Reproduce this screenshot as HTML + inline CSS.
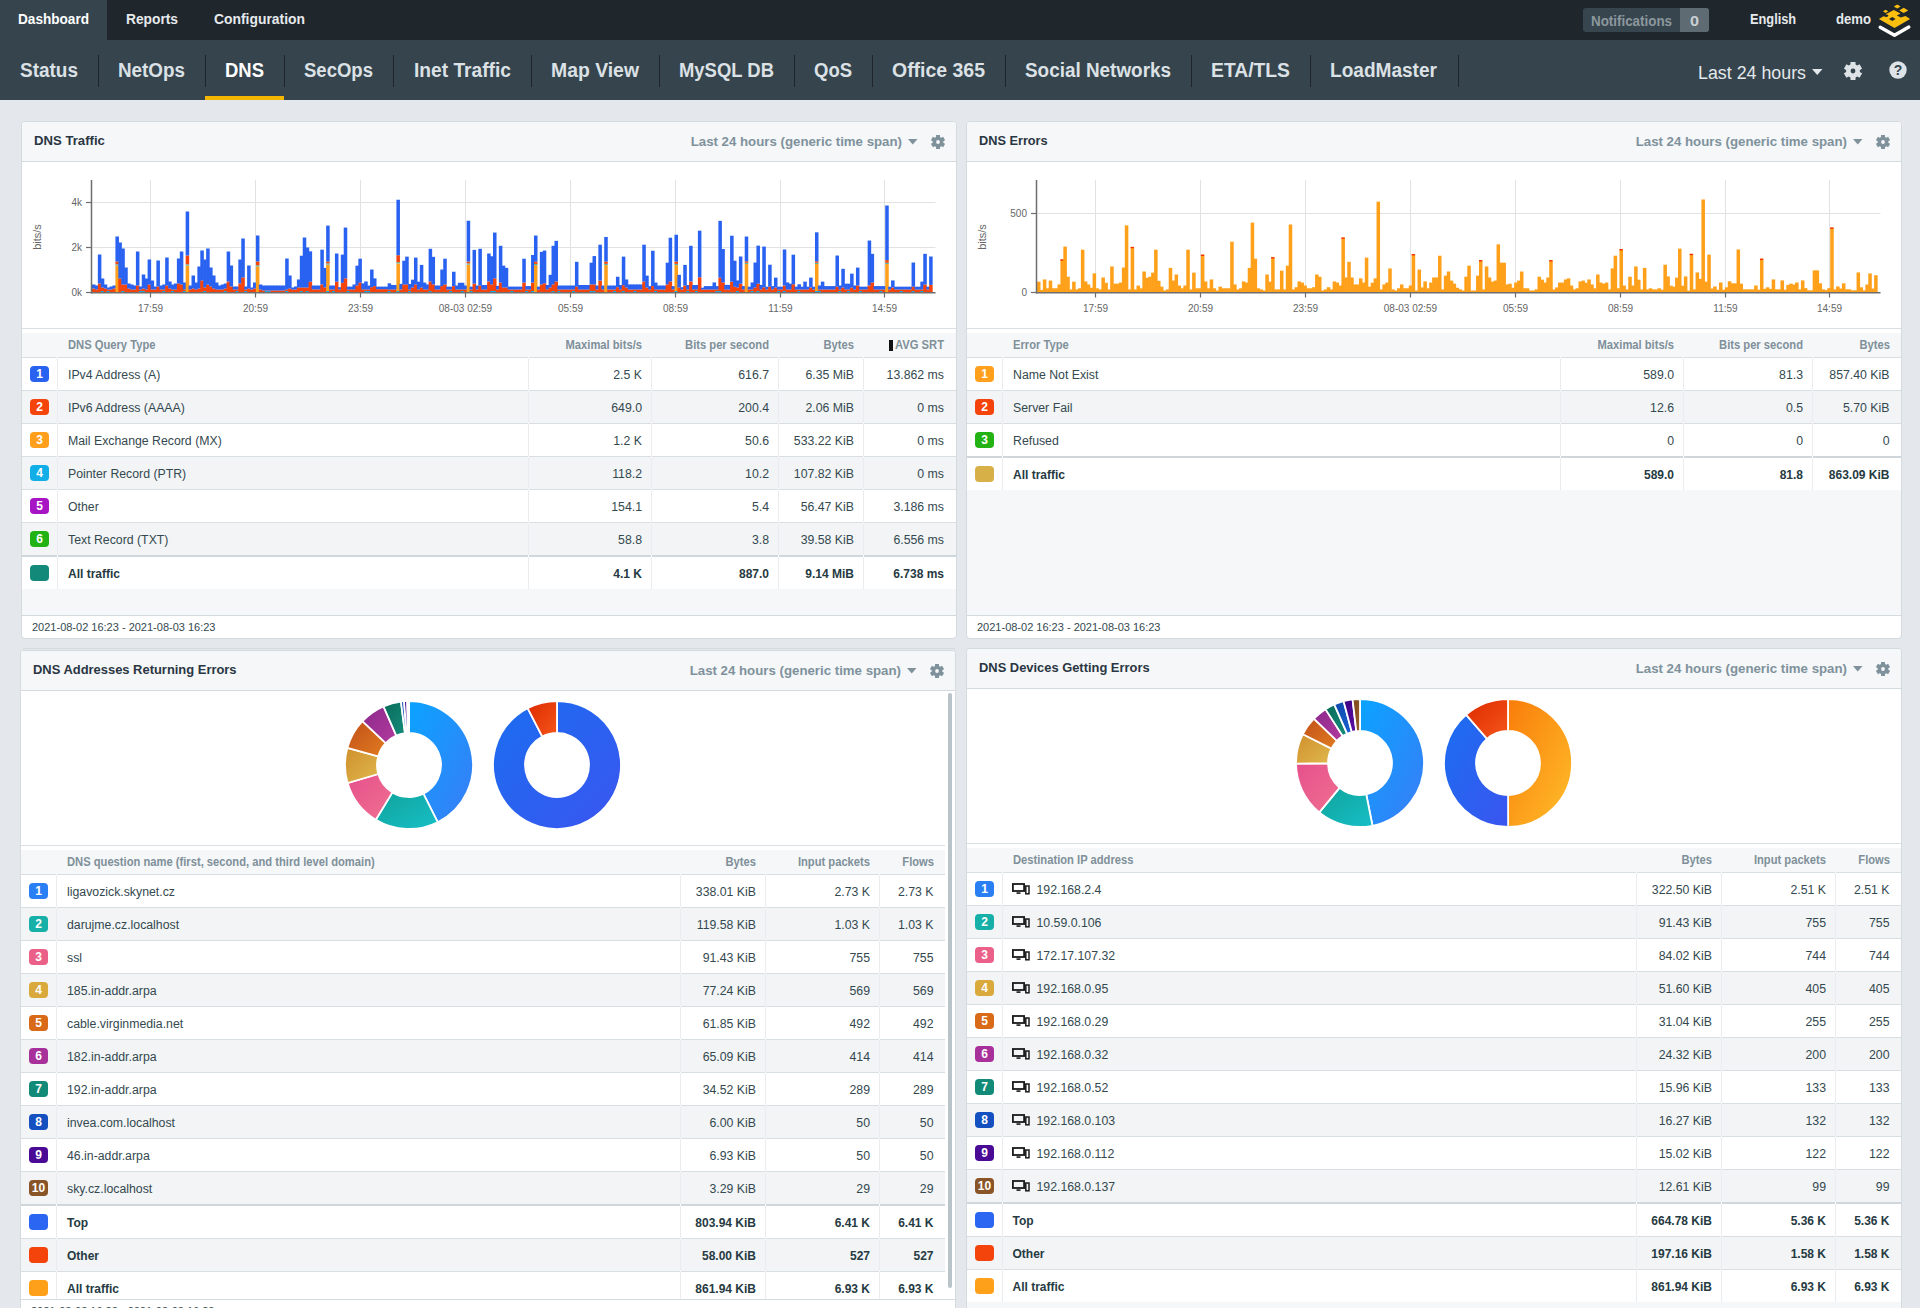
<!DOCTYPE html><html><head><meta charset="utf-8"><title>DNS Dashboard</title><style>
html,body{margin:0;padding:0;}
body{width:1920px;height:1308px;overflow:hidden;position:relative;background:#e4e8ec;font-family:"Liberation Sans", sans-serif;}
div{box-sizing:border-box;}
</style></head><body>
<div style="position:absolute;left:0px;top:0px;width:1920px;height:40px;background:#1f262c;"></div>
<div style="position:absolute;left:0px;top:0px;width:107px;height:40px;background:#36444d;"></div>
<div style="position:absolute;left:18.00px;top:3.80px;height:30px;line-height:30px;white-space:nowrap;color:#ffffff;font-weight:bold;font-size:14px;transform:scaleX(0.9711);transform-origin:0 50%;">Dashboard</div>
<div style="position:absolute;left:125.50px;top:3.80px;height:30px;line-height:30px;white-space:nowrap;color:#e6eaed;font-weight:bold;font-size:14px;transform:scaleX(0.9833);transform-origin:0 50%;">Reports</div>
<div style="position:absolute;left:214.00px;top:3.80px;height:30px;line-height:30px;white-space:nowrap;color:#e6eaed;font-weight:bold;font-size:14px;transform:scaleX(0.9916);transform-origin:0 50%;">Configuration</div>
<div style="position:absolute;left:1583px;top:8px;width:126px;height:24px;background:#37454e;border-radius:3px;"></div>
<div style="position:absolute;left:1680px;top:8px;width:29px;height:24px;background:#5e6b73;border-radius:0 3px 3px 0;"></div>
<div style="position:absolute;left:1591.00px;top:5.80px;height:30px;line-height:30px;white-space:nowrap;color:#8d989e;font-weight:bold;font-size:14px;transform:scaleX(0.9555);transform-origin:0 50%;">Notifications</div>
<div style="position:absolute;left:1690.00px;top:5.80px;height:30px;line-height:30px;white-space:nowrap;color:#c9d0d4;font-weight:bold;font-size:14px;transform:scaleX(1.1583);transform-origin:0 50%;">0</div>
<div style="position:absolute;left:1749.50px;top:3.80px;height:30px;line-height:30px;white-space:nowrap;color:#e6eaed;font-weight:bold;font-size:14px;transform:scaleX(0.9135);transform-origin:0 50%;">English</div>
<div style="position:absolute;left:1835.80px;top:3.80px;height:30px;line-height:30px;white-space:nowrap;color:#e6eaed;font-weight:bold;font-size:14px;transform:scaleX(0.9372);transform-origin:0 50%;">demo</div>
<svg style="position:absolute;left:1874px;top:0px" width="42" height="40" viewBox="0 0 42 40"><polygon points="23.2,4.4 26.6,6.4 23.2,8.4 19.8,6.4" fill="#fbbf0f"/><polygon points="29.7,7.8 34.2,10.4 29.7,13 25.2,10.4" fill="#fbbf0f"/><polygon points="11.6,9.7 14.3,11.3 11.6,12.9 8.9,11.3" fill="#fbbf0f"/><polygon points="19.9,10.1 26.5,13.6 22.8,15.5 26.8,17.6 31.5,16.0 36.1,19.0 20.5,28.1 4.9,19.0 9.5,16.2 13,17.2 14.5,15.0 11.5,14.3" fill="#fbbf0f"/><polygon points="18.3,17 21.6,19 18.3,21 15,19" fill="#1f262c"/><polyline points="6.2,27.2 20.5,35.2 34.8,27.0" fill="none" stroke="#ffffff" stroke-width="3.4" stroke-linecap="round" stroke-linejoin="round"/></svg>
<div style="position:absolute;left:0px;top:40px;width:1920px;height:60px;background:#36444d;"></div>
<div style="position:absolute;left:20.00px;top:54.70px;height:30px;line-height:30px;white-space:nowrap;color:#dbe1e5;font-weight:bold;font-size:20px;transform:scaleX(0.9493);transform-origin:0 50%;">Status</div>
<div style="position:absolute;left:98px;top:55px;width:1px;height:32px;background:#1d252b;"></div>
<div style="position:absolute;left:118.00px;top:54.70px;height:30px;line-height:30px;white-space:nowrap;color:#dbe1e5;font-weight:bold;font-size:20px;transform:scaleX(0.9417);transform-origin:0 50%;">NetOps</div>
<div style="position:absolute;left:205px;top:55px;width:1px;height:32px;background:#1d252b;"></div>
<div style="position:absolute;left:225.00px;top:54.70px;height:30px;line-height:30px;white-space:nowrap;color:#ffffff;font-weight:bold;font-size:20px;transform:scaleX(0.9231);transform-origin:0 50%;">DNS</div>
<div style="position:absolute;left:284px;top:55px;width:1px;height:32px;background:#1d252b;"></div>
<div style="position:absolute;left:304.00px;top:54.70px;height:30px;line-height:30px;white-space:nowrap;color:#dbe1e5;font-weight:bold;font-size:20px;transform:scaleX(0.9262);transform-origin:0 50%;">SecOps</div>
<div style="position:absolute;left:393px;top:55px;width:1px;height:32px;background:#1d252b;"></div>
<div style="position:absolute;left:414.00px;top:54.70px;height:30px;line-height:30px;white-space:nowrap;color:#dbe1e5;font-weight:bold;font-size:20px;transform:scaleX(0.9590);transform-origin:0 50%;">Inet Traffic</div>
<div style="position:absolute;left:531px;top:55px;width:1px;height:32px;background:#1d252b;"></div>
<div style="position:absolute;left:551.00px;top:54.70px;height:30px;line-height:30px;white-space:nowrap;color:#dbe1e5;font-weight:bold;font-size:20px;transform:scaleX(0.9692);transform-origin:0 50%;">Map View</div>
<div style="position:absolute;left:659px;top:55px;width:1px;height:32px;background:#1d252b;"></div>
<div style="position:absolute;left:679.00px;top:54.70px;height:30px;line-height:30px;white-space:nowrap;color:#dbe1e5;font-weight:bold;font-size:20px;transform:scaleX(0.9223);transform-origin:0 50%;">MySQL DB</div>
<div style="position:absolute;left:794px;top:55px;width:1px;height:32px;background:#1d252b;"></div>
<div style="position:absolute;left:814.00px;top:54.70px;height:30px;line-height:30px;white-space:nowrap;color:#dbe1e5;font-weight:bold;font-size:20px;transform:scaleX(0.9246);transform-origin:0 50%;">QoS</div>
<div style="position:absolute;left:872px;top:55px;width:1px;height:32px;background:#1d252b;"></div>
<div style="position:absolute;left:892.00px;top:54.70px;height:30px;line-height:30px;white-space:nowrap;color:#dbe1e5;font-weight:bold;font-size:20px;transform:scaleX(0.9728);transform-origin:0 50%;">Office 365</div>
<div style="position:absolute;left:1005px;top:55px;width:1px;height:32px;background:#1d252b;"></div>
<div style="position:absolute;left:1025.00px;top:54.70px;height:30px;line-height:30px;white-space:nowrap;color:#dbe1e5;font-weight:bold;font-size:20px;transform:scaleX(0.9450);transform-origin:0 50%;">Social Networks</div>
<div style="position:absolute;left:1191px;top:55px;width:1px;height:32px;background:#1d252b;"></div>
<div style="position:absolute;left:1211.00px;top:54.70px;height:30px;line-height:30px;white-space:nowrap;color:#dbe1e5;font-weight:bold;font-size:20px;transform:scaleX(0.9652);transform-origin:0 50%;">ETA/TLS</div>
<div style="position:absolute;left:1310px;top:55px;width:1px;height:32px;background:#1d252b;"></div>
<div style="position:absolute;left:1330.00px;top:54.70px;height:30px;line-height:30px;white-space:nowrap;color:#dbe1e5;font-weight:bold;font-size:20px;transform:scaleX(0.9532);transform-origin:0 50%;">LoadMaster</div>
<div style="position:absolute;left:1458px;top:55px;width:1px;height:32px;background:#1d252b;"></div>
<div style="position:absolute;left:205px;top:96px;width:79px;height:4px;background:#f5b600;"></div>
<div style="position:absolute;left:1698.00px;top:57.50px;height:30px;line-height:30px;white-space:nowrap;color:#e3e8eb;font-weight:normal;font-size:18px;transform:scaleX(0.9901);transform-origin:0 50%;">Last 24 hours</div>
<svg style="position:absolute;left:1812px;top:69px" width="11" height="7" viewBox="0 0 11 7"><polygon points="0,0 10.5,0 5.25,6" fill="#e3e8eb"/></svg>
<svg style="position:absolute;left:1844.4px;top:62px" width="18" height="18" viewBox="0 0 18 18"><rect x="6.48" y="0" width="5.04" height="9.00" fill="#dde3e7" transform="rotate(0 9.0 9.0)"/><rect x="6.48" y="0" width="5.04" height="9.00" fill="#dde3e7" transform="rotate(60 9.0 9.0)"/><rect x="6.48" y="0" width="5.04" height="9.00" fill="#dde3e7" transform="rotate(120 9.0 9.0)"/><rect x="6.48" y="0" width="5.04" height="9.00" fill="#dde3e7" transform="rotate(180 9.0 9.0)"/><rect x="6.48" y="0" width="5.04" height="9.00" fill="#dde3e7" transform="rotate(240 9.0 9.0)"/><rect x="6.48" y="0" width="5.04" height="9.00" fill="#dde3e7" transform="rotate(300 9.0 9.0)"/><circle cx="9.0" cy="9.0" r="6.93" fill="#dde3e7"/><circle cx="9.0" cy="9.0" r="2.43" fill="#36444d"/></svg>
<svg style="position:absolute;left:1888.5px;top:61px" width="18" height="18" viewBox="0 0 18 18"><circle cx="9" cy="9" r="8.7" fill="#dde3e7"/><text x="9" y="14.2" text-anchor="middle" font-family="Liberation Sans" font-weight="bold" font-size="14" fill="#36444d">?</text></svg>
<div style="position:absolute;left:21px;top:121px;width:936px;height:518px;background:#ffffff;border:1px solid #d3dbdf;border-radius:4px;"></div>
<div style="position:absolute;left:22px;top:122px;width:934px;height:39px;background:#f5f7f9;border-radius:3px 3px 0 0;"></div>
<div style="position:absolute;left:22px;top:161px;width:934px;height:1px;background:#d3dbdf;"></div>
<div style="position:absolute;left:34.40px;top:125.90px;height:30px;line-height:30px;white-space:nowrap;color:#2a3642;font-weight:bold;font-size:13.4px;transform:scaleX(0.9816);transform-origin:0 50%;">DNS Traffic</div>
<div style="position:absolute;left:602px;top:131.5px;width:300px;height:20px;line-height:20px;text-align:right;white-space:nowrap;color:#7f929c;font-weight:bold;font-size:13.25px;">Last 24 hours (generic time span)</div>
<svg style="position:absolute;left:908px;top:139.0px" width="10" height="6" viewBox="0 0 10 6"><polygon points="0,0 9.5,0 4.75,5.5" fill="#7f929c"/></svg>
<svg style="position:absolute;left:930.5px;top:134.5px" width="14" height="14" viewBox="0 0 14 14"><rect x="5.04" y="0" width="3.92" height="7.00" fill="#7f929c" transform="rotate(0 7.0 7.0)"/><rect x="5.04" y="0" width="3.92" height="7.00" fill="#7f929c" transform="rotate(60 7.0 7.0)"/><rect x="5.04" y="0" width="3.92" height="7.00" fill="#7f929c" transform="rotate(120 7.0 7.0)"/><rect x="5.04" y="0" width="3.92" height="7.00" fill="#7f929c" transform="rotate(180 7.0 7.0)"/><rect x="5.04" y="0" width="3.92" height="7.00" fill="#7f929c" transform="rotate(240 7.0 7.0)"/><rect x="5.04" y="0" width="3.92" height="7.00" fill="#7f929c" transform="rotate(300 7.0 7.0)"/><circle cx="7.0" cy="7.0" r="5.39" fill="#7f929c"/><circle cx="7.0" cy="7.0" r="1.89" fill="#f5f7f9"/></svg>
<svg style="position:absolute;left:0;top:0" width="1920" height="1308" viewBox="0 0 1920 1308"><rect x="92.5" y="202.0" width="843.0" height="1" fill="#e2e2e2"/><rect x="92.5" y="247.0" width="843.0" height="1" fill="#e2e2e2"/><rect x="92.5" y="292.0" width="843.0" height="1" fill="#e2e2e2"/><rect x="150.0" y="180" width="1" height="112.5" fill="#e2e2e2"/><rect x="255.0" y="180" width="1" height="112.5" fill="#e2e2e2"/><rect x="360.0" y="180" width="1" height="112.5" fill="#e2e2e2"/><rect x="465.0" y="180" width="1" height="112.5" fill="#e2e2e2"/><rect x="570.0" y="180" width="1" height="112.5" fill="#e2e2e2"/><rect x="675.0" y="180" width="1" height="112.5" fill="#e2e2e2"/><rect x="780.0" y="180" width="1" height="112.5" fill="#e2e2e2"/><rect x="884.0" y="180" width="1" height="112.5" fill="#e2e2e2"/><rect x="92.00" y="288.50" width="3.527" height="4.00" fill="#f4430b"/><rect x="92.00" y="284.50" width="3.527" height="4.00" fill="#2962f0"/><rect x="94.93" y="289.50" width="3.527" height="3.00" fill="#f4430b"/><rect x="94.93" y="285.50" width="3.527" height="4.00" fill="#2962f0"/><rect x="97.85" y="283.50" width="3.527" height="9.00" fill="#f4430b"/><rect x="97.85" y="254.50" width="3.527" height="29.00" fill="#2962f0"/><rect x="100.78" y="287.50" width="3.527" height="5.00" fill="#f4430b"/><rect x="100.78" y="278.50" width="3.527" height="9.00" fill="#2962f0"/><rect x="100.78" y="291.00" width="3.527" height="1.5" fill="#12aee8"/><rect x="103.71" y="288.50" width="3.527" height="4.00" fill="#f4430b"/><rect x="103.71" y="284.50" width="3.527" height="4.00" fill="#2962f0"/><rect x="106.64" y="289.50" width="3.527" height="3.00" fill="#f4430b"/><rect x="106.64" y="287.50" width="3.527" height="2.00" fill="#2962f0"/><rect x="106.64" y="291.00" width="3.527" height="1.5" fill="#12aee8"/><rect x="109.56" y="289.50" width="3.527" height="3.00" fill="#f4430b"/><rect x="109.56" y="286.50" width="3.527" height="3.00" fill="#2962f0"/><rect x="112.49" y="288.50" width="3.527" height="4.00" fill="#f4430b"/><rect x="112.49" y="285.50" width="3.527" height="3.00" fill="#2962f0"/><rect x="115.42" y="265.50" width="3.527" height="27.00" fill="#ff9f1c"/><rect x="115.42" y="264.30" width="3.527" height="1.2" fill="#4fb3a8"/><rect x="115.42" y="261.50" width="3.527" height="2.80" fill="#f4430b"/><rect x="115.42" y="236.50" width="3.527" height="25.00" fill="#2962f0"/><rect x="118.34" y="278.50" width="3.527" height="14.00" fill="#f4430b"/><rect x="118.34" y="242.50" width="3.527" height="36.00" fill="#2962f0"/><rect x="121.27" y="284.50" width="3.527" height="8.00" fill="#f4430b"/><rect x="121.27" y="248.50" width="3.527" height="36.00" fill="#2962f0"/><rect x="121.27" y="291.00" width="3.527" height="1.5" fill="#12aee8"/><rect x="124.20" y="284.50" width="3.527" height="8.00" fill="#f4430b"/><rect x="124.20" y="267.50" width="3.527" height="17.00" fill="#2962f0"/><rect x="127.12" y="288.50" width="3.527" height="4.00" fill="#f4430b"/><rect x="127.12" y="283.50" width="3.527" height="5.00" fill="#2962f0"/><rect x="130.05" y="289.50" width="3.527" height="3.00" fill="#f4430b"/><rect x="130.05" y="284.50" width="3.527" height="5.00" fill="#2962f0"/><rect x="132.98" y="289.50" width="3.527" height="3.00" fill="#f4430b"/><rect x="132.98" y="285.50" width="3.527" height="4.00" fill="#2962f0"/><rect x="135.91" y="285.50" width="3.527" height="7.00" fill="#f4430b"/><rect x="135.91" y="251.50" width="3.527" height="34.00" fill="#2962f0"/><rect x="138.83" y="289.50" width="3.527" height="3.00" fill="#f4430b"/><rect x="138.83" y="286.50" width="3.527" height="3.00" fill="#2962f0"/><rect x="138.83" y="291.00" width="3.527" height="1.5" fill="#12aee8"/><rect x="141.76" y="288.50" width="3.527" height="4.00" fill="#f4430b"/><rect x="141.76" y="274.50" width="3.527" height="14.00" fill="#2962f0"/><rect x="141.76" y="291.00" width="3.527" height="1.5" fill="#12aee8"/><rect x="144.69" y="289.50" width="3.527" height="3.00" fill="#f4430b"/><rect x="144.69" y="278.50" width="3.527" height="11.00" fill="#2962f0"/><rect x="147.61" y="284.50" width="3.527" height="8.00" fill="#f4430b"/><rect x="147.61" y="259.50" width="3.527" height="25.00" fill="#2962f0"/><rect x="150.54" y="289.50" width="3.527" height="3.00" fill="#f4430b"/><rect x="150.54" y="280.50" width="3.527" height="9.00" fill="#2962f0"/><rect x="153.47" y="289.50" width="3.527" height="3.00" fill="#f4430b"/><rect x="153.47" y="286.50" width="3.527" height="3.00" fill="#2962f0"/><rect x="156.39" y="286.50" width="3.527" height="6.00" fill="#f4430b"/><rect x="156.39" y="260.50" width="3.527" height="26.00" fill="#2962f0"/><rect x="159.32" y="289.50" width="3.527" height="3.00" fill="#f4430b"/><rect x="159.32" y="285.50" width="3.527" height="4.00" fill="#2962f0"/><rect x="162.25" y="289.50" width="3.527" height="3.00" fill="#f4430b"/><rect x="162.25" y="284.50" width="3.527" height="5.00" fill="#2962f0"/><rect x="162.25" y="291.00" width="3.527" height="1.5" fill="#12aee8"/><rect x="165.18" y="285.50" width="3.527" height="7.00" fill="#f4430b"/><rect x="165.18" y="257.50" width="3.527" height="28.00" fill="#2962f0"/><rect x="168.10" y="288.50" width="3.527" height="4.00" fill="#f4430b"/><rect x="168.10" y="281.50" width="3.527" height="7.00" fill="#2962f0"/><rect x="171.03" y="289.50" width="3.527" height="3.00" fill="#f4430b"/><rect x="171.03" y="284.50" width="3.527" height="5.00" fill="#2962f0"/><rect x="171.03" y="291.00" width="3.527" height="1.5" fill="#12aee8"/><rect x="173.96" y="289.50" width="3.527" height="3.00" fill="#f4430b"/><rect x="173.96" y="283.50" width="3.527" height="6.00" fill="#2962f0"/><rect x="176.88" y="283.50" width="3.527" height="9.00" fill="#f4430b"/><rect x="176.88" y="258.50" width="3.527" height="25.00" fill="#2962f0"/><rect x="179.81" y="284.50" width="3.527" height="8.00" fill="#f4430b"/><rect x="179.81" y="251.50" width="3.527" height="33.00" fill="#2962f0"/><rect x="182.74" y="289.50" width="3.527" height="3.00" fill="#f4430b"/><rect x="182.74" y="282.50" width="3.527" height="7.00" fill="#2962f0"/><rect x="182.74" y="291.00" width="3.527" height="1.5" fill="#12aee8"/><rect x="185.66" y="265.50" width="3.527" height="27.00" fill="#ff9f1c"/><rect x="185.66" y="264.30" width="3.527" height="1.2" fill="#4fb3a8"/><rect x="185.66" y="255.50" width="3.527" height="8.80" fill="#f4430b"/><rect x="185.66" y="211.50" width="3.527" height="44.00" fill="#2962f0"/><rect x="188.59" y="289.50" width="3.527" height="3.00" fill="#f4430b"/><rect x="188.59" y="285.50" width="3.527" height="4.00" fill="#2962f0"/><rect x="191.52" y="288.50" width="3.527" height="4.00" fill="#f4430b"/><rect x="191.52" y="275.50" width="3.527" height="13.00" fill="#2962f0"/><rect x="194.44" y="289.50" width="3.527" height="3.00" fill="#f4430b"/><rect x="194.44" y="282.50" width="3.527" height="7.00" fill="#2962f0"/><rect x="197.37" y="288.50" width="3.527" height="4.00" fill="#f4430b"/><rect x="197.37" y="266.50" width="3.527" height="22.00" fill="#2962f0"/><rect x="200.30" y="280.50" width="3.527" height="12.00" fill="#f4430b"/><rect x="200.30" y="250.50" width="3.527" height="30.00" fill="#2962f0"/><rect x="203.23" y="287.50" width="3.527" height="5.00" fill="#f4430b"/><rect x="203.23" y="259.50" width="3.527" height="28.00" fill="#2962f0"/><rect x="203.23" y="291.00" width="3.527" height="1.5" fill="#12aee8"/><rect x="206.15" y="284.50" width="3.527" height="8.00" fill="#f4430b"/><rect x="206.15" y="248.50" width="3.527" height="36.00" fill="#2962f0"/><rect x="209.08" y="286.50" width="3.527" height="6.00" fill="#f4430b"/><rect x="209.08" y="267.50" width="3.527" height="19.00" fill="#2962f0"/><rect x="212.01" y="288.50" width="3.527" height="4.00" fill="#f4430b"/><rect x="212.01" y="275.50" width="3.527" height="13.00" fill="#2962f0"/><rect x="214.93" y="289.50" width="3.527" height="3.00" fill="#f4430b"/><rect x="214.93" y="282.50" width="3.527" height="7.00" fill="#2962f0"/><rect x="217.86" y="289.50" width="3.527" height="3.00" fill="#f4430b"/><rect x="217.86" y="285.50" width="3.527" height="4.00" fill="#2962f0"/><rect x="220.79" y="289.50" width="3.527" height="3.00" fill="#f4430b"/><rect x="220.79" y="284.50" width="3.527" height="5.00" fill="#2962f0"/><rect x="223.72" y="288.50" width="3.527" height="4.00" fill="#f4430b"/><rect x="223.72" y="283.50" width="3.527" height="5.00" fill="#2962f0"/><rect x="223.72" y="291.00" width="3.527" height="1.5" fill="#12aee8"/><rect x="226.64" y="281.50" width="3.527" height="11.00" fill="#f4430b"/><rect x="226.64" y="251.50" width="3.527" height="30.00" fill="#2962f0"/><rect x="229.57" y="286.50" width="3.527" height="6.00" fill="#f4430b"/><rect x="229.57" y="265.50" width="3.527" height="21.00" fill="#2962f0"/><rect x="232.50" y="289.50" width="3.527" height="3.00" fill="#f4430b"/><rect x="232.50" y="286.50" width="3.527" height="3.00" fill="#2962f0"/><rect x="235.42" y="289.50" width="3.527" height="3.00" fill="#f4430b"/><rect x="235.42" y="286.50" width="3.527" height="3.00" fill="#2962f0"/><rect x="235.42" y="291.00" width="3.527" height="1.5" fill="#12aee8"/><rect x="238.35" y="283.50" width="3.527" height="9.00" fill="#f4430b"/><rect x="238.35" y="259.50" width="3.527" height="24.00" fill="#2962f0"/><rect x="241.28" y="277.50" width="3.527" height="15.00" fill="#f4430b"/><rect x="241.28" y="238.50" width="3.527" height="39.00" fill="#2962f0"/><rect x="244.20" y="289.50" width="3.527" height="3.00" fill="#f4430b"/><rect x="244.20" y="286.50" width="3.527" height="3.00" fill="#2962f0"/><rect x="244.20" y="291.00" width="3.527" height="1.5" fill="#12aee8"/><rect x="247.13" y="288.50" width="3.527" height="4.00" fill="#f4430b"/><rect x="247.13" y="265.50" width="3.527" height="23.00" fill="#2962f0"/><rect x="250.06" y="289.50" width="3.527" height="3.00" fill="#f4430b"/><rect x="250.06" y="287.50" width="3.527" height="2.00" fill="#2962f0"/><rect x="252.99" y="288.50" width="3.527" height="4.00" fill="#f4430b"/><rect x="252.99" y="282.50" width="3.527" height="6.00" fill="#2962f0"/><rect x="255.91" y="266.50" width="3.527" height="26.00" fill="#ff9f1c"/><rect x="255.91" y="265.30" width="3.527" height="1.2" fill="#4fb3a8"/><rect x="255.91" y="261.50" width="3.527" height="3.80" fill="#f4430b"/><rect x="255.91" y="235.50" width="3.527" height="26.00" fill="#2962f0"/><rect x="258.84" y="289.50" width="3.527" height="3.00" fill="#f4430b"/><rect x="258.84" y="284.50" width="3.527" height="5.00" fill="#2962f0"/><rect x="261.77" y="290.50" width="3.527" height="2.00" fill="#f4430b"/><rect x="261.77" y="285.50" width="3.527" height="5.00" fill="#2962f0"/><rect x="264.69" y="290.50" width="3.527" height="2.00" fill="#f4430b"/><rect x="264.69" y="285.50" width="3.527" height="5.00" fill="#2962f0"/><rect x="264.69" y="291.00" width="3.527" height="1.5" fill="#12aee8"/><rect x="267.62" y="290.50" width="3.527" height="2.00" fill="#f4430b"/><rect x="267.62" y="285.50" width="3.527" height="5.00" fill="#2962f0"/><rect x="267.62" y="291.00" width="3.527" height="1.5" fill="#12aee8"/><rect x="270.55" y="290.50" width="3.527" height="2.00" fill="#f4430b"/><rect x="270.55" y="285.50" width="3.527" height="5.00" fill="#2962f0"/><rect x="273.47" y="290.50" width="3.527" height="2.00" fill="#f4430b"/><rect x="273.47" y="285.50" width="3.527" height="5.00" fill="#2962f0"/><rect x="276.40" y="290.50" width="3.527" height="2.00" fill="#f4430b"/><rect x="276.40" y="285.50" width="3.527" height="5.00" fill="#2962f0"/><rect x="279.33" y="290.50" width="3.527" height="2.00" fill="#f4430b"/><rect x="279.33" y="285.50" width="3.527" height="5.00" fill="#2962f0"/><rect x="282.25" y="290.50" width="3.527" height="2.00" fill="#f4430b"/><rect x="282.25" y="285.50" width="3.527" height="5.00" fill="#2962f0"/><rect x="285.18" y="289.50" width="3.527" height="3.00" fill="#f4430b"/><rect x="285.18" y="258.50" width="3.527" height="31.00" fill="#2962f0"/><rect x="285.18" y="291.00" width="3.527" height="1.5" fill="#12aee8"/><rect x="288.11" y="288.50" width="3.527" height="4.00" fill="#f4430b"/><rect x="288.11" y="275.50" width="3.527" height="13.00" fill="#2962f0"/><rect x="291.04" y="289.50" width="3.527" height="3.00" fill="#f4430b"/><rect x="291.04" y="287.50" width="3.527" height="2.00" fill="#2962f0"/><rect x="293.96" y="289.50" width="3.527" height="3.00" fill="#f4430b"/><rect x="293.96" y="286.50" width="3.527" height="3.00" fill="#2962f0"/><rect x="296.89" y="287.50" width="3.527" height="5.00" fill="#f4430b"/><rect x="296.89" y="279.47" width="3.527" height="8.03" fill="#2962f0"/><rect x="299.82" y="287.50" width="3.527" height="5.00" fill="#f4430b"/><rect x="299.82" y="255.73" width="3.527" height="31.77" fill="#2962f0"/><rect x="299.82" y="291.00" width="3.527" height="1.5" fill="#12aee8"/><rect x="302.74" y="287.50" width="3.527" height="5.00" fill="#f4430b"/><rect x="302.74" y="237.51" width="3.527" height="49.99" fill="#2962f0"/><rect x="305.67" y="287.50" width="3.527" height="5.00" fill="#f4430b"/><rect x="305.67" y="247.45" width="3.527" height="40.05" fill="#2962f0"/><rect x="305.67" y="291.00" width="3.527" height="1.5" fill="#12aee8"/><rect x="308.60" y="281.68" width="3.527" height="10.82" fill="#f4430b"/><rect x="308.60" y="251.32" width="3.527" height="30.36" fill="#2962f0"/><rect x="311.52" y="289.41" width="3.527" height="3.09" fill="#f4430b"/><rect x="311.52" y="285.54" width="3.527" height="3.86" fill="#2962f0"/><rect x="314.45" y="289.41" width="3.527" height="3.09" fill="#f4430b"/><rect x="314.45" y="285.54" width="3.527" height="3.86" fill="#2962f0"/><rect x="317.38" y="289.41" width="3.527" height="3.09" fill="#f4430b"/><rect x="317.38" y="285.54" width="3.527" height="3.86" fill="#2962f0"/><rect x="320.31" y="284.44" width="3.527" height="8.06" fill="#f4430b"/><rect x="320.31" y="249.66" width="3.527" height="34.78" fill="#2962f0"/><rect x="323.23" y="287.50" width="3.527" height="5.00" fill="#f4430b"/><rect x="323.23" y="267.88" width="3.527" height="19.62" fill="#2962f0"/><rect x="326.16" y="264.57" width="3.527" height="27.93" fill="#ff9f1c"/><rect x="326.16" y="263.37" width="3.527" height="1.2" fill="#4fb3a8"/><rect x="326.16" y="261.58" width="3.527" height="1.78" fill="#f4430b"/><rect x="326.16" y="225.59" width="3.527" height="35.99" fill="#2962f0"/><rect x="326.16" y="291.00" width="3.527" height="1.5" fill="#12aee8"/><rect x="329.09" y="289.50" width="3.527" height="3.00" fill="#f4430b"/><rect x="329.09" y="285.54" width="3.527" height="3.96" fill="#2962f0"/><rect x="332.01" y="289.50" width="3.527" height="3.00" fill="#f4430b"/><rect x="332.01" y="285.54" width="3.527" height="3.96" fill="#2962f0"/><rect x="332.01" y="291.00" width="3.527" height="1.5" fill="#12aee8"/><rect x="334.94" y="281.68" width="3.527" height="10.82" fill="#f4430b"/><rect x="334.94" y="253.52" width="3.527" height="28.16" fill="#2962f0"/><rect x="337.87" y="289.50" width="3.527" height="3.00" fill="#f4430b"/><rect x="337.87" y="287.20" width="3.527" height="2.30" fill="#2962f0"/><rect x="340.80" y="282.78" width="3.527" height="9.72" fill="#f4430b"/><rect x="340.80" y="254.63" width="3.527" height="28.16" fill="#2962f0"/><rect x="343.72" y="278.37" width="3.527" height="14.13" fill="#f4430b"/><rect x="343.72" y="227.58" width="3.527" height="50.79" fill="#2962f0"/><rect x="346.65" y="289.50" width="3.527" height="3.00" fill="#f4430b"/><rect x="346.65" y="286.65" width="3.527" height="2.85" fill="#2962f0"/><rect x="346.65" y="291.00" width="3.527" height="1.5" fill="#12aee8"/><rect x="349.58" y="289.50" width="3.527" height="3.00" fill="#f4430b"/><rect x="349.58" y="286.65" width="3.527" height="2.85" fill="#2962f0"/><rect x="352.50" y="289.50" width="3.527" height="3.00" fill="#f4430b"/><rect x="352.50" y="284.44" width="3.527" height="5.06" fill="#2962f0"/><rect x="355.43" y="285.54" width="3.527" height="6.96" fill="#f4430b"/><rect x="355.43" y="265.67" width="3.527" height="19.87" fill="#2962f0"/><rect x="358.36" y="282.56" width="3.527" height="9.94" fill="#f4430b"/><rect x="358.36" y="258.71" width="3.527" height="23.85" fill="#2962f0"/><rect x="361.28" y="289.50" width="3.527" height="3.00" fill="#f4430b"/><rect x="361.28" y="283.34" width="3.527" height="6.16" fill="#2962f0"/><rect x="364.21" y="289.50" width="3.527" height="3.00" fill="#f4430b"/><rect x="364.21" y="281.46" width="3.527" height="8.04" fill="#2962f0"/><rect x="364.21" y="291.00" width="3.527" height="1.5" fill="#12aee8"/><rect x="367.14" y="289.50" width="3.527" height="3.00" fill="#f4430b"/><rect x="367.14" y="285.54" width="3.527" height="3.96" fill="#2962f0"/><rect x="367.14" y="291.00" width="3.527" height="1.5" fill="#12aee8"/><rect x="370.06" y="287.20" width="3.527" height="5.30" fill="#f4430b"/><rect x="370.06" y="269.53" width="3.527" height="17.67" fill="#2962f0"/><rect x="372.99" y="286.10" width="3.527" height="6.40" fill="#f4430b"/><rect x="372.99" y="278.37" width="3.527" height="7.73" fill="#2962f0"/><rect x="375.92" y="289.19" width="3.527" height="3.31" fill="#f4430b"/><rect x="375.92" y="286.65" width="3.527" height="2.54" fill="#2962f0"/><rect x="378.85" y="289.19" width="3.527" height="3.31" fill="#f4430b"/><rect x="378.85" y="286.65" width="3.527" height="2.54" fill="#2962f0"/><rect x="381.77" y="289.19" width="3.527" height="3.31" fill="#f4430b"/><rect x="381.77" y="286.65" width="3.527" height="2.54" fill="#2962f0"/><rect x="384.70" y="289.19" width="3.527" height="3.31" fill="#f4430b"/><rect x="384.70" y="286.65" width="3.527" height="2.54" fill="#2962f0"/><rect x="387.63" y="289.50" width="3.527" height="3.00" fill="#f4430b"/><rect x="387.63" y="283.34" width="3.527" height="6.16" fill="#2962f0"/><rect x="387.63" y="291.00" width="3.527" height="1.5" fill="#12aee8"/><rect x="390.55" y="289.50" width="3.527" height="3.00" fill="#f4430b"/><rect x="390.55" y="284.99" width="3.527" height="4.51" fill="#2962f0"/><rect x="393.48" y="289.50" width="3.527" height="3.00" fill="#f4430b"/><rect x="393.48" y="284.99" width="3.527" height="4.51" fill="#2962f0"/><rect x="396.41" y="263.46" width="3.527" height="29.04" fill="#ff9f1c"/><rect x="396.41" y="262.26" width="3.527" height="1.2" fill="#4fb3a8"/><rect x="396.41" y="255.18" width="3.527" height="7.08" fill="#f4430b"/><rect x="396.41" y="199.75" width="3.527" height="55.43" fill="#2962f0"/><rect x="396.41" y="291.00" width="3.527" height="1.5" fill="#12aee8"/><rect x="399.33" y="289.50" width="3.527" height="3.00" fill="#f4430b"/><rect x="399.33" y="283.89" width="3.527" height="5.61" fill="#2962f0"/><rect x="402.26" y="284.44" width="3.527" height="8.06" fill="#f4430b"/><rect x="402.26" y="260.70" width="3.527" height="23.74" fill="#2962f0"/><rect x="405.19" y="284.44" width="3.527" height="8.06" fill="#f4430b"/><rect x="405.19" y="256.62" width="3.527" height="27.82" fill="#2962f0"/><rect x="408.12" y="289.50" width="3.527" height="3.00" fill="#f4430b"/><rect x="408.12" y="283.89" width="3.527" height="5.61" fill="#2962f0"/><rect x="408.12" y="291.00" width="3.527" height="1.5" fill="#12aee8"/><rect x="411.04" y="287.50" width="3.527" height="5.00" fill="#f4430b"/><rect x="411.04" y="279.69" width="3.527" height="7.81" fill="#2962f0"/><rect x="413.97" y="284.44" width="3.527" height="8.06" fill="#f4430b"/><rect x="413.97" y="257.61" width="3.527" height="26.83" fill="#2962f0"/><rect x="416.90" y="289.50" width="3.527" height="3.00" fill="#f4430b"/><rect x="416.90" y="281.68" width="3.527" height="7.82" fill="#2962f0"/><rect x="419.82" y="287.50" width="3.527" height="5.00" fill="#f4430b"/><rect x="419.82" y="264.90" width="3.527" height="22.60" fill="#2962f0"/><rect x="422.75" y="289.50" width="3.527" height="3.00" fill="#f4430b"/><rect x="422.75" y="282.56" width="3.527" height="6.94" fill="#2962f0"/><rect x="425.68" y="289.50" width="3.527" height="3.00" fill="#f4430b"/><rect x="425.68" y="284.44" width="3.527" height="5.06" fill="#2962f0"/><rect x="428.61" y="281.46" width="3.527" height="11.04" fill="#f4430b"/><rect x="428.61" y="248.78" width="3.527" height="32.68" fill="#2962f0"/><rect x="428.61" y="291.00" width="3.527" height="1.5" fill="#12aee8"/><rect x="431.53" y="284.44" width="3.527" height="8.06" fill="#f4430b"/><rect x="431.53" y="256.84" width="3.527" height="27.60" fill="#2962f0"/><rect x="434.46" y="289.50" width="3.527" height="3.00" fill="#f4430b"/><rect x="434.46" y="285.54" width="3.527" height="3.96" fill="#2962f0"/><rect x="437.39" y="289.50" width="3.527" height="3.00" fill="#f4430b"/><rect x="437.39" y="285.54" width="3.527" height="3.96" fill="#2962f0"/><rect x="440.31" y="286.10" width="3.527" height="6.40" fill="#f4430b"/><rect x="440.31" y="269.53" width="3.527" height="16.56" fill="#2962f0"/><rect x="443.24" y="284.44" width="3.527" height="8.06" fill="#f4430b"/><rect x="443.24" y="258.71" width="3.527" height="25.73" fill="#2962f0"/><rect x="446.17" y="289.50" width="3.527" height="3.00" fill="#f4430b"/><rect x="446.17" y="286.65" width="3.527" height="2.85" fill="#2962f0"/><rect x="449.09" y="289.50" width="3.527" height="3.00" fill="#f4430b"/><rect x="449.09" y="286.65" width="3.527" height="2.85" fill="#2962f0"/><rect x="449.09" y="291.00" width="3.527" height="1.5" fill="#12aee8"/><rect x="452.02" y="286.10" width="3.527" height="6.40" fill="#f4430b"/><rect x="452.02" y="271.74" width="3.527" height="14.35" fill="#2962f0"/><rect x="454.95" y="289.50" width="3.527" height="3.00" fill="#f4430b"/><rect x="454.95" y="285.54" width="3.527" height="3.96" fill="#2962f0"/><rect x="457.88" y="289.50" width="3.527" height="3.00" fill="#f4430b"/><rect x="457.88" y="282.78" width="3.527" height="6.72" fill="#2962f0"/><rect x="460.80" y="289.50" width="3.527" height="3.00" fill="#f4430b"/><rect x="460.80" y="282.78" width="3.527" height="6.72" fill="#2962f0"/><rect x="460.80" y="291.00" width="3.527" height="1.5" fill="#12aee8"/><rect x="463.73" y="289.50" width="3.527" height="3.00" fill="#f4430b"/><rect x="463.73" y="285.50" width="3.527" height="4.00" fill="#2962f0"/><rect x="466.66" y="264.57" width="3.527" height="27.93" fill="#ff9f1c"/><rect x="466.66" y="263.37" width="3.527" height="1.2" fill="#4fb3a8"/><rect x="466.66" y="261.58" width="3.527" height="1.78" fill="#f4430b"/><rect x="466.66" y="220.73" width="3.527" height="40.85" fill="#2962f0"/><rect x="469.58" y="289.50" width="3.527" height="3.00" fill="#f4430b"/><rect x="469.58" y="286.65" width="3.527" height="2.85" fill="#2962f0"/><rect x="469.58" y="291.00" width="3.527" height="1.5" fill="#12aee8"/><rect x="472.51" y="283.67" width="3.527" height="8.83" fill="#f4430b"/><rect x="472.51" y="249.88" width="3.527" height="33.79" fill="#2962f0"/><rect x="475.44" y="289.50" width="3.527" height="3.00" fill="#f4430b"/><rect x="475.44" y="285.54" width="3.527" height="3.96" fill="#2962f0"/><rect x="478.36" y="285.54" width="3.527" height="6.96" fill="#f4430b"/><rect x="478.36" y="248.78" width="3.527" height="36.77" fill="#2962f0"/><rect x="481.29" y="289.50" width="3.527" height="3.00" fill="#f4430b"/><rect x="481.29" y="284.99" width="3.527" height="4.51" fill="#2962f0"/><rect x="484.22" y="289.50" width="3.527" height="3.00" fill="#f4430b"/><rect x="484.22" y="284.99" width="3.527" height="4.51" fill="#2962f0"/><rect x="487.14" y="281.46" width="3.527" height="11.04" fill="#f4430b"/><rect x="487.14" y="253.52" width="3.527" height="27.93" fill="#2962f0"/><rect x="490.07" y="284.44" width="3.527" height="8.06" fill="#f4430b"/><rect x="490.07" y="256.28" width="3.527" height="28.16" fill="#2962f0"/><rect x="490.07" y="291.00" width="3.527" height="1.5" fill="#12aee8"/><rect x="493.00" y="278.37" width="3.527" height="14.13" fill="#f4430b"/><rect x="493.00" y="232.55" width="3.527" height="45.82" fill="#2962f0"/><rect x="493.00" y="291.00" width="3.527" height="1.5" fill="#12aee8"/><rect x="495.93" y="289.50" width="3.527" height="3.00" fill="#f4430b"/><rect x="495.93" y="285.88" width="3.527" height="3.62" fill="#2962f0"/><rect x="498.85" y="282.56" width="3.527" height="9.94" fill="#f4430b"/><rect x="498.85" y="245.80" width="3.527" height="36.77" fill="#2962f0"/><rect x="501.78" y="287.50" width="3.527" height="5.00" fill="#f4430b"/><rect x="501.78" y="265.67" width="3.527" height="21.83" fill="#2962f0"/><rect x="504.71" y="287.50" width="3.527" height="5.00" fill="#f4430b"/><rect x="504.71" y="267.88" width="3.527" height="19.62" fill="#2962f0"/><rect x="507.63" y="289.50" width="3.527" height="3.00" fill="#f4430b"/><rect x="507.63" y="286.65" width="3.527" height="2.85" fill="#2962f0"/><rect x="510.56" y="289.50" width="3.527" height="3.00" fill="#f4430b"/><rect x="510.56" y="286.65" width="3.527" height="2.85" fill="#2962f0"/><rect x="510.56" y="291.00" width="3.527" height="1.5" fill="#12aee8"/><rect x="513.49" y="289.50" width="3.527" height="3.00" fill="#f4430b"/><rect x="513.49" y="286.65" width="3.527" height="2.85" fill="#2962f0"/><rect x="516.41" y="289.50" width="3.527" height="3.00" fill="#f4430b"/><rect x="516.41" y="286.65" width="3.527" height="2.85" fill="#2962f0"/><rect x="519.34" y="289.50" width="3.527" height="3.00" fill="#f4430b"/><rect x="519.34" y="286.65" width="3.527" height="2.85" fill="#2962f0"/><rect x="522.27" y="282.56" width="3.527" height="9.94" fill="#f4430b"/><rect x="522.27" y="258.71" width="3.527" height="23.85" fill="#2962f0"/><rect x="525.20" y="289.50" width="3.527" height="3.00" fill="#f4430b"/><rect x="525.20" y="286.10" width="3.527" height="3.40" fill="#2962f0"/><rect x="525.20" y="291.00" width="3.527" height="1.5" fill="#12aee8"/><rect x="528.12" y="289.50" width="3.527" height="3.00" fill="#f4430b"/><rect x="528.12" y="286.10" width="3.527" height="3.40" fill="#2962f0"/><rect x="531.05" y="282.56" width="3.527" height="9.94" fill="#f4430b"/><rect x="531.05" y="254.96" width="3.527" height="27.60" fill="#2962f0"/><rect x="531.05" y="291.00" width="3.527" height="1.5" fill="#12aee8"/><rect x="533.98" y="265.12" width="3.527" height="27.38" fill="#ff9f1c"/><rect x="533.98" y="263.92" width="3.527" height="1.2" fill="#4fb3a8"/><rect x="533.98" y="261.58" width="3.527" height="2.33" fill="#f4430b"/><rect x="533.98" y="235.53" width="3.527" height="26.06" fill="#2962f0"/><rect x="536.90" y="289.50" width="3.527" height="3.00" fill="#f4430b"/><rect x="536.90" y="286.65" width="3.527" height="2.85" fill="#2962f0"/><rect x="539.83" y="284.44" width="3.527" height="8.06" fill="#f4430b"/><rect x="539.83" y="251.87" width="3.527" height="32.57" fill="#2962f0"/><rect x="542.76" y="283.34" width="3.527" height="9.16" fill="#f4430b"/><rect x="542.76" y="250.54" width="3.527" height="32.79" fill="#2962f0"/><rect x="545.68" y="289.50" width="3.527" height="3.00" fill="#f4430b"/><rect x="545.68" y="284.99" width="3.527" height="4.51" fill="#2962f0"/><rect x="548.61" y="287.50" width="3.527" height="5.00" fill="#f4430b"/><rect x="548.61" y="274.83" width="3.527" height="12.67" fill="#2962f0"/><rect x="551.54" y="284.44" width="3.527" height="8.06" fill="#f4430b"/><rect x="551.54" y="245.80" width="3.527" height="38.64" fill="#2962f0"/><rect x="551.54" y="291.00" width="3.527" height="1.5" fill="#12aee8"/><rect x="554.47" y="281.46" width="3.527" height="11.04" fill="#f4430b"/><rect x="554.47" y="240.83" width="3.527" height="40.63" fill="#2962f0"/><rect x="557.39" y="289.50" width="3.527" height="3.00" fill="#f4430b"/><rect x="557.39" y="285.54" width="3.527" height="3.96" fill="#2962f0"/><rect x="557.39" y="291.00" width="3.527" height="1.5" fill="#12aee8"/><rect x="560.32" y="289.50" width="3.527" height="3.00" fill="#f4430b"/><rect x="560.32" y="285.54" width="3.527" height="3.96" fill="#2962f0"/><rect x="563.25" y="289.50" width="3.527" height="3.00" fill="#f4430b"/><rect x="563.25" y="285.54" width="3.527" height="3.96" fill="#2962f0"/><rect x="566.17" y="289.50" width="3.527" height="3.00" fill="#f4430b"/><rect x="566.17" y="285.54" width="3.527" height="3.96" fill="#2962f0"/><rect x="569.10" y="289.50" width="3.527" height="3.00" fill="#f4430b"/><rect x="569.10" y="285.54" width="3.527" height="3.96" fill="#2962f0"/><rect x="572.03" y="289.50" width="3.527" height="3.00" fill="#f4430b"/><rect x="572.03" y="285.54" width="3.527" height="3.96" fill="#2962f0"/><rect x="572.03" y="291.00" width="3.527" height="1.5" fill="#12aee8"/><rect x="574.95" y="286.65" width="3.527" height="5.85" fill="#f4430b"/><rect x="574.95" y="261.81" width="3.527" height="24.84" fill="#2962f0"/><rect x="577.88" y="289.50" width="3.527" height="3.00" fill="#f4430b"/><rect x="577.88" y="284.99" width="3.527" height="4.51" fill="#2962f0"/><rect x="580.81" y="289.50" width="3.527" height="3.00" fill="#f4430b"/><rect x="580.81" y="284.99" width="3.527" height="4.51" fill="#2962f0"/><rect x="583.74" y="289.50" width="3.527" height="3.00" fill="#f4430b"/><rect x="583.74" y="284.99" width="3.527" height="4.51" fill="#2962f0"/><rect x="586.66" y="289.50" width="3.527" height="3.00" fill="#f4430b"/><rect x="586.66" y="284.99" width="3.527" height="4.51" fill="#2962f0"/><rect x="589.59" y="284.44" width="3.527" height="8.06" fill="#f4430b"/><rect x="589.59" y="262.69" width="3.527" height="21.75" fill="#2962f0"/><rect x="589.59" y="291.00" width="3.527" height="1.5" fill="#12aee8"/><rect x="592.52" y="284.44" width="3.527" height="8.06" fill="#f4430b"/><rect x="592.52" y="256.06" width="3.527" height="28.38" fill="#2962f0"/><rect x="592.52" y="291.00" width="3.527" height="1.5" fill="#12aee8"/><rect x="595.44" y="289.50" width="3.527" height="3.00" fill="#f4430b"/><rect x="595.44" y="285.54" width="3.527" height="3.96" fill="#2962f0"/><rect x="598.37" y="280.58" width="3.527" height="11.92" fill="#f4430b"/><rect x="598.37" y="244.69" width="3.527" height="35.88" fill="#2962f0"/><rect x="601.30" y="289.50" width="3.527" height="3.00" fill="#f4430b"/><rect x="601.30" y="285.54" width="3.527" height="3.96" fill="#2962f0"/><rect x="604.23" y="265.12" width="3.527" height="27.38" fill="#ff9f1c"/><rect x="604.23" y="263.92" width="3.527" height="1.2" fill="#4fb3a8"/><rect x="604.23" y="261.58" width="3.527" height="2.33" fill="#f4430b"/><rect x="604.23" y="236.96" width="3.527" height="24.62" fill="#2962f0"/><rect x="607.15" y="289.50" width="3.527" height="3.00" fill="#f4430b"/><rect x="607.15" y="285.54" width="3.527" height="3.96" fill="#2962f0"/><rect x="610.08" y="289.50" width="3.527" height="3.00" fill="#f4430b"/><rect x="610.08" y="285.54" width="3.527" height="3.96" fill="#2962f0"/><rect x="613.01" y="289.50" width="3.527" height="3.00" fill="#f4430b"/><rect x="613.01" y="285.54" width="3.527" height="3.96" fill="#2962f0"/><rect x="613.01" y="291.00" width="3.527" height="1.5" fill="#12aee8"/><rect x="615.93" y="287.20" width="3.527" height="5.30" fill="#f4430b"/><rect x="615.93" y="276.71" width="3.527" height="10.49" fill="#2962f0"/><rect x="618.86" y="289.50" width="3.527" height="3.00" fill="#f4430b"/><rect x="618.86" y="284.99" width="3.527" height="4.51" fill="#2962f0"/><rect x="621.79" y="285.21" width="3.527" height="7.29" fill="#f4430b"/><rect x="621.79" y="256.62" width="3.527" height="28.60" fill="#2962f0"/><rect x="621.79" y="291.00" width="3.527" height="1.5" fill="#12aee8"/><rect x="624.71" y="287.50" width="3.527" height="5.00" fill="#f4430b"/><rect x="624.71" y="279.47" width="3.527" height="8.03" fill="#2962f0"/><rect x="627.64" y="289.50" width="3.527" height="3.00" fill="#f4430b"/><rect x="627.64" y="284.44" width="3.527" height="5.06" fill="#2962f0"/><rect x="630.57" y="289.50" width="3.527" height="3.00" fill="#f4430b"/><rect x="630.57" y="284.44" width="3.527" height="5.06" fill="#2962f0"/><rect x="633.50" y="289.50" width="3.527" height="3.00" fill="#f4430b"/><rect x="633.50" y="284.44" width="3.527" height="5.06" fill="#2962f0"/><rect x="633.50" y="291.00" width="3.527" height="1.5" fill="#12aee8"/><rect x="636.42" y="289.50" width="3.527" height="3.00" fill="#f4430b"/><rect x="636.42" y="284.44" width="3.527" height="5.06" fill="#2962f0"/><rect x="639.35" y="289.50" width="3.527" height="3.00" fill="#f4430b"/><rect x="639.35" y="284.44" width="3.527" height="5.06" fill="#2962f0"/><rect x="642.28" y="281.46" width="3.527" height="11.04" fill="#f4430b"/><rect x="642.28" y="244.69" width="3.527" height="36.77" fill="#2962f0"/><rect x="645.20" y="287.50" width="3.527" height="5.00" fill="#f4430b"/><rect x="645.20" y="275.61" width="3.527" height="11.89" fill="#2962f0"/><rect x="648.13" y="289.50" width="3.527" height="3.00" fill="#f4430b"/><rect x="648.13" y="286.10" width="3.527" height="3.40" fill="#2962f0"/><rect x="651.06" y="286.10" width="3.527" height="6.40" fill="#f4430b"/><rect x="651.06" y="250.76" width="3.527" height="35.33" fill="#2962f0"/><rect x="653.98" y="289.50" width="3.527" height="3.00" fill="#f4430b"/><rect x="653.98" y="282.56" width="3.527" height="6.94" fill="#2962f0"/><rect x="653.98" y="291.00" width="3.527" height="1.5" fill="#12aee8"/><rect x="656.91" y="289.50" width="3.527" height="3.00" fill="#f4430b"/><rect x="656.91" y="285.54" width="3.527" height="3.96" fill="#2962f0"/><rect x="659.84" y="289.50" width="3.527" height="3.00" fill="#f4430b"/><rect x="659.84" y="285.54" width="3.527" height="3.96" fill="#2962f0"/><rect x="662.76" y="289.50" width="3.527" height="3.00" fill="#f4430b"/><rect x="662.76" y="285.54" width="3.527" height="3.96" fill="#2962f0"/><rect x="665.69" y="284.44" width="3.527" height="8.06" fill="#f4430b"/><rect x="665.69" y="262.69" width="3.527" height="21.75" fill="#2962f0"/><rect x="668.62" y="281.46" width="3.527" height="11.04" fill="#f4430b"/><rect x="668.62" y="237.74" width="3.527" height="43.72" fill="#2962f0"/><rect x="671.55" y="289.50" width="3.527" height="3.00" fill="#f4430b"/><rect x="671.55" y="286.10" width="3.527" height="3.40" fill="#2962f0"/><rect x="674.47" y="265.12" width="3.527" height="27.38" fill="#ff9f1c"/><rect x="674.47" y="263.92" width="3.527" height="1.2" fill="#4fb3a8"/><rect x="674.47" y="261.58" width="3.527" height="2.33" fill="#f4430b"/><rect x="674.47" y="234.75" width="3.527" height="26.83" fill="#2962f0"/><rect x="674.47" y="291.00" width="3.527" height="1.5" fill="#12aee8"/><rect x="677.40" y="287.50" width="3.527" height="5.00" fill="#f4430b"/><rect x="677.40" y="274.83" width="3.527" height="12.67" fill="#2962f0"/><rect x="680.33" y="289.50" width="3.527" height="3.00" fill="#f4430b"/><rect x="680.33" y="287.20" width="3.527" height="2.30" fill="#2962f0"/><rect x="683.25" y="285.54" width="3.527" height="6.96" fill="#f4430b"/><rect x="683.25" y="264.90" width="3.527" height="20.65" fill="#2962f0"/><rect x="686.18" y="289.50" width="3.527" height="3.00" fill="#f4430b"/><rect x="686.18" y="284.99" width="3.527" height="4.51" fill="#2962f0"/><rect x="686.18" y="291.00" width="3.527" height="1.5" fill="#12aee8"/><rect x="689.11" y="281.46" width="3.527" height="11.04" fill="#f4430b"/><rect x="689.11" y="245.80" width="3.527" height="35.66" fill="#2962f0"/><rect x="692.03" y="289.50" width="3.527" height="3.00" fill="#f4430b"/><rect x="692.03" y="284.99" width="3.527" height="4.51" fill="#2962f0"/><rect x="694.96" y="289.50" width="3.527" height="3.00" fill="#f4430b"/><rect x="694.96" y="284.99" width="3.527" height="4.51" fill="#2962f0"/><rect x="694.96" y="291.00" width="3.527" height="1.5" fill="#12aee8"/><rect x="697.89" y="277.26" width="3.527" height="15.24" fill="#f4430b"/><rect x="697.89" y="230.67" width="3.527" height="46.59" fill="#2962f0"/><rect x="700.82" y="289.50" width="3.527" height="3.00" fill="#f4430b"/><rect x="700.82" y="287.75" width="3.527" height="1.75" fill="#2962f0"/><rect x="703.74" y="289.50" width="3.527" height="3.00" fill="#f4430b"/><rect x="703.74" y="286.10" width="3.527" height="3.40" fill="#2962f0"/><rect x="706.67" y="289.50" width="3.527" height="3.00" fill="#f4430b"/><rect x="706.67" y="286.10" width="3.527" height="3.40" fill="#2962f0"/><rect x="709.60" y="289.50" width="3.527" height="3.00" fill="#f4430b"/><rect x="709.60" y="286.10" width="3.527" height="3.40" fill="#2962f0"/><rect x="712.52" y="289.50" width="3.527" height="3.00" fill="#f4430b"/><rect x="712.52" y="282.47" width="3.527" height="7.03" fill="#2962f0"/><rect x="715.45" y="289.50" width="3.527" height="3.00" fill="#f4430b"/><rect x="715.45" y="286.10" width="3.527" height="3.40" fill="#2962f0"/><rect x="715.45" y="291.00" width="3.527" height="1.5" fill="#12aee8"/><rect x="718.38" y="277.64" width="3.527" height="14.86" fill="#f4430b"/><rect x="718.38" y="220.85" width="3.527" height="56.79" fill="#2962f0"/><rect x="718.38" y="291.00" width="3.527" height="1.5" fill="#12aee8"/><rect x="721.31" y="282.47" width="3.527" height="10.03" fill="#f4430b"/><rect x="721.31" y="249.00" width="3.527" height="33.47" fill="#2962f0"/><rect x="724.23" y="289.50" width="3.527" height="3.00" fill="#f4430b"/><rect x="724.23" y="284.89" width="3.527" height="4.61" fill="#2962f0"/><rect x="727.16" y="289.50" width="3.527" height="3.00" fill="#f4430b"/><rect x="727.16" y="284.89" width="3.527" height="4.61" fill="#2962f0"/><rect x="730.09" y="281.63" width="3.527" height="10.87" fill="#f4430b"/><rect x="730.09" y="235.71" width="3.527" height="45.92" fill="#2962f0"/><rect x="733.01" y="286.70" width="3.527" height="5.80" fill="#f4430b"/><rect x="733.01" y="260.72" width="3.527" height="25.98" fill="#2962f0"/><rect x="735.94" y="287.50" width="3.527" height="5.00" fill="#f4430b"/><rect x="735.94" y="280.42" width="3.527" height="7.08" fill="#2962f0"/><rect x="735.94" y="291.00" width="3.527" height="1.5" fill="#12aee8"/><rect x="738.87" y="283.68" width="3.527" height="8.82" fill="#f4430b"/><rect x="738.87" y="256.49" width="3.527" height="27.19" fill="#2962f0"/><rect x="741.79" y="289.50" width="3.527" height="3.00" fill="#f4430b"/><rect x="741.79" y="286.10" width="3.527" height="3.40" fill="#2962f0"/><rect x="744.72" y="263.98" width="3.527" height="28.52" fill="#ff9f1c"/><rect x="744.72" y="262.78" width="3.527" height="1.2" fill="#4fb3a8"/><rect x="744.72" y="261.33" width="3.527" height="1.46" fill="#f4430b"/><rect x="744.72" y="236.56" width="3.527" height="24.77" fill="#2962f0"/><rect x="747.65" y="289.50" width="3.527" height="3.00" fill="#f4430b"/><rect x="747.65" y="286.70" width="3.527" height="2.80" fill="#2962f0"/><rect x="750.58" y="289.50" width="3.527" height="3.00" fill="#f4430b"/><rect x="750.58" y="282.47" width="3.527" height="7.03" fill="#2962f0"/><rect x="750.58" y="291.00" width="3.527" height="1.5" fill="#12aee8"/><rect x="753.50" y="287.50" width="3.527" height="5.00" fill="#f4430b"/><rect x="753.50" y="262.53" width="3.527" height="24.97" fill="#2962f0"/><rect x="756.43" y="283.68" width="3.527" height="8.82" fill="#f4430b"/><rect x="756.43" y="245.62" width="3.527" height="38.06" fill="#2962f0"/><rect x="756.43" y="291.00" width="3.527" height="1.5" fill="#12aee8"/><rect x="759.36" y="289.50" width="3.527" height="3.00" fill="#f4430b"/><rect x="759.36" y="284.89" width="3.527" height="4.61" fill="#2962f0"/><rect x="762.28" y="287.30" width="3.527" height="5.20" fill="#f4430b"/><rect x="762.28" y="246.58" width="3.527" height="40.72" fill="#2962f0"/><rect x="765.21" y="289.50" width="3.527" height="3.00" fill="#f4430b"/><rect x="765.21" y="286.70" width="3.527" height="2.80" fill="#2962f0"/><rect x="768.14" y="286.70" width="3.527" height="5.80" fill="#f4430b"/><rect x="768.14" y="264.71" width="3.527" height="21.99" fill="#2962f0"/><rect x="771.06" y="289.50" width="3.527" height="3.00" fill="#f4430b"/><rect x="771.06" y="286.10" width="3.527" height="3.40" fill="#2962f0"/><rect x="773.99" y="287.50" width="3.527" height="5.00" fill="#f4430b"/><rect x="773.99" y="277.64" width="3.527" height="9.86" fill="#2962f0"/><rect x="776.92" y="289.50" width="3.527" height="3.00" fill="#f4430b"/><rect x="776.92" y="286.70" width="3.527" height="2.80" fill="#2962f0"/><rect x="776.92" y="291.00" width="3.527" height="1.5" fill="#12aee8"/><rect x="779.85" y="289.50" width="3.527" height="3.00" fill="#f4430b"/><rect x="779.85" y="286.70" width="3.527" height="2.80" fill="#2962f0"/><rect x="782.77" y="285.49" width="3.527" height="7.01" fill="#f4430b"/><rect x="782.77" y="249.48" width="3.527" height="36.01" fill="#2962f0"/><rect x="782.77" y="291.00" width="3.527" height="1.5" fill="#12aee8"/><rect x="785.70" y="289.50" width="3.527" height="3.00" fill="#f4430b"/><rect x="785.70" y="282.47" width="3.527" height="7.03" fill="#2962f0"/><rect x="788.63" y="289.50" width="3.527" height="3.00" fill="#f4430b"/><rect x="788.63" y="283.68" width="3.527" height="5.82" fill="#2962f0"/><rect x="791.55" y="284.28" width="3.527" height="8.22" fill="#f4430b"/><rect x="791.55" y="254.68" width="3.527" height="29.60" fill="#2962f0"/><rect x="794.48" y="289.50" width="3.527" height="3.00" fill="#f4430b"/><rect x="794.48" y="286.70" width="3.527" height="2.80" fill="#2962f0"/><rect x="797.41" y="289.50" width="3.527" height="3.00" fill="#f4430b"/><rect x="797.41" y="284.28" width="3.527" height="5.22" fill="#2962f0"/><rect x="797.41" y="291.00" width="3.527" height="1.5" fill="#12aee8"/><rect x="800.33" y="289.50" width="3.527" height="3.00" fill="#f4430b"/><rect x="800.33" y="286.70" width="3.527" height="2.80" fill="#2962f0"/><rect x="803.26" y="289.50" width="3.527" height="3.00" fill="#f4430b"/><rect x="803.26" y="281.63" width="3.527" height="7.87" fill="#2962f0"/><rect x="806.19" y="289.50" width="3.527" height="3.00" fill="#f4430b"/><rect x="806.19" y="286.70" width="3.527" height="2.80" fill="#2962f0"/><rect x="809.12" y="287.50" width="3.527" height="5.00" fill="#f4430b"/><rect x="809.12" y="277.64" width="3.527" height="9.86" fill="#2962f0"/><rect x="812.04" y="289.50" width="3.527" height="3.00" fill="#f4430b"/><rect x="812.04" y="286.70" width="3.527" height="2.80" fill="#2962f0"/><rect x="814.97" y="263.98" width="3.527" height="28.52" fill="#ff9f1c"/><rect x="814.97" y="262.78" width="3.527" height="1.2" fill="#4fb3a8"/><rect x="814.97" y="261.33" width="3.527" height="1.46" fill="#f4430b"/><rect x="814.97" y="232.33" width="3.527" height="29.00" fill="#2962f0"/><rect x="814.97" y="291.00" width="3.527" height="1.5" fill="#12aee8"/><rect x="817.90" y="289.50" width="3.527" height="3.00" fill="#f4430b"/><rect x="817.90" y="285.49" width="3.527" height="4.01" fill="#2962f0"/><rect x="817.90" y="291.00" width="3.527" height="1.5" fill="#12aee8"/><rect x="820.82" y="289.50" width="3.527" height="3.00" fill="#f4430b"/><rect x="820.82" y="281.63" width="3.527" height="7.87" fill="#2962f0"/><rect x="823.75" y="289.50" width="3.527" height="3.00" fill="#f4430b"/><rect x="823.75" y="286.10" width="3.527" height="3.40" fill="#2962f0"/><rect x="826.68" y="289.50" width="3.527" height="3.00" fill="#f4430b"/><rect x="826.68" y="286.10" width="3.527" height="3.40" fill="#2962f0"/><rect x="829.60" y="289.50" width="3.527" height="3.00" fill="#f4430b"/><rect x="829.60" y="286.10" width="3.527" height="3.40" fill="#2962f0"/><rect x="832.53" y="289.50" width="3.527" height="3.00" fill="#f4430b"/><rect x="832.53" y="286.10" width="3.527" height="3.40" fill="#2962f0"/><rect x="835.46" y="286.70" width="3.527" height="5.80" fill="#f4430b"/><rect x="835.46" y="255.53" width="3.527" height="31.17" fill="#2962f0"/><rect x="838.38" y="289.50" width="3.527" height="3.00" fill="#f4430b"/><rect x="838.38" y="285.49" width="3.527" height="4.01" fill="#2962f0"/><rect x="838.38" y="291.00" width="3.527" height="1.5" fill="#12aee8"/><rect x="841.31" y="287.50" width="3.527" height="5.00" fill="#f4430b"/><rect x="841.31" y="268.82" width="3.527" height="18.68" fill="#2962f0"/><rect x="844.24" y="289.50" width="3.527" height="3.00" fill="#f4430b"/><rect x="844.24" y="283.68" width="3.527" height="5.82" fill="#2962f0"/><rect x="847.17" y="289.50" width="3.527" height="3.00" fill="#f4430b"/><rect x="847.17" y="283.68" width="3.527" height="5.82" fill="#2962f0"/><rect x="847.17" y="291.00" width="3.527" height="1.5" fill="#12aee8"/><rect x="850.09" y="287.50" width="3.527" height="5.00" fill="#f4430b"/><rect x="850.09" y="273.65" width="3.527" height="13.85" fill="#2962f0"/><rect x="853.02" y="289.50" width="3.527" height="3.00" fill="#f4430b"/><rect x="853.02" y="285.49" width="3.527" height="4.01" fill="#2962f0"/><rect x="855.95" y="285.49" width="3.527" height="7.01" fill="#f4430b"/><rect x="855.95" y="267.61" width="3.527" height="17.88" fill="#2962f0"/><rect x="858.87" y="289.50" width="3.527" height="3.00" fill="#f4430b"/><rect x="858.87" y="286.70" width="3.527" height="2.80" fill="#2962f0"/><rect x="858.87" y="291.00" width="3.527" height="1.5" fill="#12aee8"/><rect x="861.80" y="289.50" width="3.527" height="3.00" fill="#f4430b"/><rect x="861.80" y="286.70" width="3.527" height="2.80" fill="#2962f0"/><rect x="864.73" y="289.50" width="3.527" height="3.00" fill="#f4430b"/><rect x="864.73" y="286.70" width="3.527" height="2.80" fill="#2962f0"/><rect x="867.65" y="285.49" width="3.527" height="7.01" fill="#f4430b"/><rect x="867.65" y="240.54" width="3.527" height="44.95" fill="#2962f0"/><rect x="870.58" y="282.47" width="3.527" height="10.03" fill="#f4430b"/><rect x="870.58" y="253.83" width="3.527" height="28.64" fill="#2962f0"/><rect x="873.51" y="289.50" width="3.527" height="3.00" fill="#f4430b"/><rect x="873.51" y="286.10" width="3.527" height="3.40" fill="#2962f0"/><rect x="876.44" y="289.50" width="3.527" height="3.00" fill="#f4430b"/><rect x="876.44" y="286.10" width="3.527" height="3.40" fill="#2962f0"/><rect x="879.36" y="289.50" width="3.527" height="3.00" fill="#f4430b"/><rect x="879.36" y="286.10" width="3.527" height="3.40" fill="#2962f0"/><rect x="879.36" y="291.00" width="3.527" height="1.5" fill="#12aee8"/><rect x="882.29" y="289.50" width="3.527" height="3.00" fill="#f4430b"/><rect x="882.29" y="286.10" width="3.527" height="3.40" fill="#2962f0"/><rect x="885.22" y="263.98" width="3.527" height="28.52" fill="#ff9f1c"/><rect x="885.22" y="262.78" width="3.527" height="1.2" fill="#4fb3a8"/><rect x="885.22" y="260.12" width="3.527" height="2.67" fill="#f4430b"/><rect x="885.22" y="205.50" width="3.527" height="54.62" fill="#2962f0"/><rect x="888.14" y="289.50" width="3.527" height="3.00" fill="#f4430b"/><rect x="888.14" y="286.70" width="3.527" height="2.80" fill="#2962f0"/><rect x="891.07" y="287.50" width="3.527" height="5.00" fill="#f4430b"/><rect x="891.07" y="280.42" width="3.527" height="7.08" fill="#2962f0"/><rect x="894.00" y="289.50" width="3.527" height="3.00" fill="#f4430b"/><rect x="894.00" y="286.70" width="3.527" height="2.80" fill="#2962f0"/><rect x="896.93" y="289.50" width="3.527" height="3.00" fill="#f4430b"/><rect x="896.93" y="286.70" width="3.527" height="2.80" fill="#2962f0"/><rect x="899.85" y="289.50" width="3.527" height="3.00" fill="#f4430b"/><rect x="899.85" y="286.70" width="3.527" height="2.80" fill="#2962f0"/><rect x="899.85" y="291.00" width="3.527" height="1.5" fill="#12aee8"/><rect x="902.78" y="289.50" width="3.527" height="3.00" fill="#f4430b"/><rect x="902.78" y="286.70" width="3.527" height="2.80" fill="#2962f0"/><rect x="905.71" y="289.50" width="3.527" height="3.00" fill="#f4430b"/><rect x="905.71" y="286.70" width="3.527" height="2.80" fill="#2962f0"/><rect x="908.63" y="289.50" width="3.527" height="3.00" fill="#f4430b"/><rect x="908.63" y="286.70" width="3.527" height="2.80" fill="#2962f0"/><rect x="911.56" y="286.70" width="3.527" height="5.80" fill="#f4430b"/><rect x="911.56" y="262.53" width="3.527" height="24.17" fill="#2962f0"/><rect x="911.56" y="291.00" width="3.527" height="1.5" fill="#12aee8"/><rect x="914.49" y="289.50" width="3.527" height="3.00" fill="#f4430b"/><rect x="914.49" y="286.70" width="3.527" height="2.80" fill="#2962f0"/><rect x="917.41" y="289.50" width="3.527" height="3.00" fill="#f4430b"/><rect x="917.41" y="286.70" width="3.527" height="2.80" fill="#2962f0"/><rect x="920.34" y="289.50" width="3.527" height="3.00" fill="#f4430b"/><rect x="920.34" y="281.63" width="3.527" height="7.87" fill="#2962f0"/><rect x="920.34" y="291.00" width="3.527" height="1.5" fill="#12aee8"/><rect x="923.27" y="284.53" width="3.527" height="7.97" fill="#f4430b"/><rect x="923.27" y="253.83" width="3.527" height="30.69" fill="#2962f0"/><rect x="926.20" y="289.50" width="3.527" height="3.00" fill="#f4430b"/><rect x="926.20" y="286.70" width="3.527" height="2.80" fill="#2962f0"/><rect x="929.12" y="284.89" width="3.527" height="7.61" fill="#f4430b"/><rect x="929.12" y="256.49" width="3.527" height="28.40" fill="#2962f0"/><rect x="90.75" y="180" width="1.5" height="113.5" fill="#6e6e6e"/><rect x="91.0" y="292.0" width="844.5" height="1.5" fill="#6e6e6e"/><rect x="86.0" y="201.9" width="5" height="1.2" fill="#6e6e6e"/><text x="82.0" y="206.1" text-anchor="end" font-family="Liberation Sans" font-size="10" fill="#666">4k</text><rect x="86.0" y="246.9" width="5" height="1.2" fill="#6e6e6e"/><text x="82.0" y="251.1" text-anchor="end" font-family="Liberation Sans" font-size="10" fill="#666">2k</text><rect x="86.0" y="291.9" width="5" height="1.2" fill="#6e6e6e"/><text x="82.0" y="296.1" text-anchor="end" font-family="Liberation Sans" font-size="10" fill="#666">0k</text><rect x="149.9" y="292.5" width="1.2" height="5" fill="#6e6e6e"/><text x="150.5" y="311.5" text-anchor="middle" font-family="Liberation Sans" font-size="10" fill="#666">17:59</text><rect x="254.9" y="292.5" width="1.2" height="5" fill="#6e6e6e"/><text x="255.5" y="311.5" text-anchor="middle" font-family="Liberation Sans" font-size="10" fill="#666">20:59</text><rect x="359.9" y="292.5" width="1.2" height="5" fill="#6e6e6e"/><text x="360.5" y="311.5" text-anchor="middle" font-family="Liberation Sans" font-size="10" fill="#666">23:59</text><rect x="464.9" y="292.5" width="1.2" height="5" fill="#6e6e6e"/><text x="465.5" y="311.5" text-anchor="middle" font-family="Liberation Sans" font-size="10" fill="#666">08-03 02:59</text><rect x="569.9" y="292.5" width="1.2" height="5" fill="#6e6e6e"/><text x="570.5" y="311.5" text-anchor="middle" font-family="Liberation Sans" font-size="10" fill="#666">05:59</text><rect x="674.9" y="292.5" width="1.2" height="5" fill="#6e6e6e"/><text x="675.5" y="311.5" text-anchor="middle" font-family="Liberation Sans" font-size="10" fill="#666">08:59</text><rect x="779.9" y="292.5" width="1.2" height="5" fill="#6e6e6e"/><text x="780.5" y="311.5" text-anchor="middle" font-family="Liberation Sans" font-size="10" fill="#666">11:59</text><rect x="883.9" y="292.5" width="1.2" height="5" fill="#6e6e6e"/><text x="884.5" y="311.5" text-anchor="middle" font-family="Liberation Sans" font-size="10" fill="#666">14:59</text><text transform="translate(41,237) rotate(-90)" text-anchor="middle" font-family="Liberation Sans" font-size="11" fill="#666">bits/s</text></svg>
<div style="position:absolute;left:22px;top:328px;width:934px;height:1px;background:#d8dfe3;"></div>
<div style="position:absolute;left:22px;top:333px;width:934px;height:24px;background:#f5f7f9;"></div>
<div style="position:absolute;left:68px;top:335.2px;height:20px;line-height:20px;white-space:nowrap;color:#7f9099;font-weight:bold;font-size:12.5px;transform:scaleX(0.895);transform-origin:0 50%;">DNS Query Type</div>
<div style="position:absolute;left:22px;top:357px;width:35px;height:1px;background:#d8dfe3;"></div>
<div style="position:absolute;left:58px;top:357px;width:470px;height:1px;background:#d8dfe3;"></div>
<div style="position:absolute;left:529px;top:357px;width:122px;height:1px;background:#d8dfe3;"></div>
<div style="position:absolute;left:652px;top:357px;width:126px;height:1px;background:#d8dfe3;"></div>
<div style="position:absolute;left:779px;top:357px;width:84px;height:1px;background:#d8dfe3;"></div>
<div style="position:absolute;left:864px;top:357px;width:92px;height:1px;background:#d8dfe3;"></div>
<div style="position:absolute;left:22px;top:358px;width:934px;height:32px;background:#ffffff;"></div>
<div style="position:absolute;left:57px;top:358px;width:1px;height:32px;background:#e9edf0;"></div>
<div style="position:absolute;left:528px;top:358px;width:1px;height:32px;background:#e9edf0;"></div>
<div style="position:absolute;left:651px;top:358px;width:1px;height:32px;background:#e9edf0;"></div>
<div style="position:absolute;left:778px;top:358px;width:1px;height:32px;background:#e9edf0;"></div>
<div style="position:absolute;left:863px;top:358px;width:1px;height:32px;background:#e9edf0;"></div>
<div style="position:absolute;left:30px;top:366.0px;width:19px;height:16px;border-radius:4px;background:#2962f0;color:#fff;font-weight:bold;font-size:12px;line-height:16px;text-align:center;">1</div>
<div style="position:absolute;left:68px;top:364.5px;height:20px;line-height:20px;white-space:nowrap;color:#34494f;font-weight:normal;font-size:12.3px;">IPv4 Address (A)</div>
<div style="position:absolute;left:442px;top:364.5px;width:200px;height:20px;line-height:20px;text-align:right;white-space:nowrap;color:#34494f;font-weight:normal;font-size:12.3px;">2.5 K</div>
<div style="position:absolute;left:569px;top:364.5px;width:200px;height:20px;line-height:20px;text-align:right;white-space:nowrap;color:#34494f;font-weight:normal;font-size:12.3px;">616.7</div>
<div style="position:absolute;left:654px;top:364.5px;width:200px;height:20px;line-height:20px;text-align:right;white-space:nowrap;color:#34494f;font-weight:normal;font-size:12.3px;">6.35 MiB</div>
<div style="position:absolute;left:744px;top:364.5px;width:200px;height:20px;line-height:20px;text-align:right;white-space:nowrap;color:#34494f;font-weight:normal;font-size:12.3px;">13.862 ms</div>
<div style="position:absolute;left:22px;top:390px;width:35px;height:1px;background:#d8dfe3;"></div>
<div style="position:absolute;left:58px;top:390px;width:470px;height:1px;background:#d8dfe3;"></div>
<div style="position:absolute;left:529px;top:390px;width:122px;height:1px;background:#d8dfe3;"></div>
<div style="position:absolute;left:652px;top:390px;width:126px;height:1px;background:#d8dfe3;"></div>
<div style="position:absolute;left:779px;top:390px;width:84px;height:1px;background:#d8dfe3;"></div>
<div style="position:absolute;left:864px;top:390px;width:92px;height:1px;background:#d8dfe3;"></div>
<div style="position:absolute;left:22px;top:391px;width:934px;height:32px;background:#f2f4f6;"></div>
<div style="position:absolute;left:57px;top:391px;width:1px;height:32px;background:#e9edf0;"></div>
<div style="position:absolute;left:528px;top:391px;width:1px;height:32px;background:#e9edf0;"></div>
<div style="position:absolute;left:651px;top:391px;width:1px;height:32px;background:#e9edf0;"></div>
<div style="position:absolute;left:778px;top:391px;width:1px;height:32px;background:#e9edf0;"></div>
<div style="position:absolute;left:863px;top:391px;width:1px;height:32px;background:#e9edf0;"></div>
<div style="position:absolute;left:30px;top:399.0px;width:19px;height:16px;border-radius:4px;background:#f4430b;color:#fff;font-weight:bold;font-size:12px;line-height:16px;text-align:center;">2</div>
<div style="position:absolute;left:68px;top:397.5px;height:20px;line-height:20px;white-space:nowrap;color:#34494f;font-weight:normal;font-size:12.3px;">IPv6 Address (AAAA)</div>
<div style="position:absolute;left:442px;top:397.5px;width:200px;height:20px;line-height:20px;text-align:right;white-space:nowrap;color:#34494f;font-weight:normal;font-size:12.3px;">649.0</div>
<div style="position:absolute;left:569px;top:397.5px;width:200px;height:20px;line-height:20px;text-align:right;white-space:nowrap;color:#34494f;font-weight:normal;font-size:12.3px;">200.4</div>
<div style="position:absolute;left:654px;top:397.5px;width:200px;height:20px;line-height:20px;text-align:right;white-space:nowrap;color:#34494f;font-weight:normal;font-size:12.3px;">2.06 MiB</div>
<div style="position:absolute;left:744px;top:397.5px;width:200px;height:20px;line-height:20px;text-align:right;white-space:nowrap;color:#34494f;font-weight:normal;font-size:12.3px;">0 ms</div>
<div style="position:absolute;left:22px;top:423px;width:35px;height:1px;background:#d8dfe3;"></div>
<div style="position:absolute;left:58px;top:423px;width:470px;height:1px;background:#d8dfe3;"></div>
<div style="position:absolute;left:529px;top:423px;width:122px;height:1px;background:#d8dfe3;"></div>
<div style="position:absolute;left:652px;top:423px;width:126px;height:1px;background:#d8dfe3;"></div>
<div style="position:absolute;left:779px;top:423px;width:84px;height:1px;background:#d8dfe3;"></div>
<div style="position:absolute;left:864px;top:423px;width:92px;height:1px;background:#d8dfe3;"></div>
<div style="position:absolute;left:22px;top:424px;width:934px;height:32px;background:#ffffff;"></div>
<div style="position:absolute;left:57px;top:424px;width:1px;height:32px;background:#e9edf0;"></div>
<div style="position:absolute;left:528px;top:424px;width:1px;height:32px;background:#e9edf0;"></div>
<div style="position:absolute;left:651px;top:424px;width:1px;height:32px;background:#e9edf0;"></div>
<div style="position:absolute;left:778px;top:424px;width:1px;height:32px;background:#e9edf0;"></div>
<div style="position:absolute;left:863px;top:424px;width:1px;height:32px;background:#e9edf0;"></div>
<div style="position:absolute;left:30px;top:432.0px;width:19px;height:16px;border-radius:4px;background:#ff9f1c;color:#fff;font-weight:bold;font-size:12px;line-height:16px;text-align:center;">3</div>
<div style="position:absolute;left:68px;top:430.5px;height:20px;line-height:20px;white-space:nowrap;color:#34494f;font-weight:normal;font-size:12.3px;">Mail Exchange Record (MX)</div>
<div style="position:absolute;left:442px;top:430.5px;width:200px;height:20px;line-height:20px;text-align:right;white-space:nowrap;color:#34494f;font-weight:normal;font-size:12.3px;">1.2 K</div>
<div style="position:absolute;left:569px;top:430.5px;width:200px;height:20px;line-height:20px;text-align:right;white-space:nowrap;color:#34494f;font-weight:normal;font-size:12.3px;">50.6</div>
<div style="position:absolute;left:654px;top:430.5px;width:200px;height:20px;line-height:20px;text-align:right;white-space:nowrap;color:#34494f;font-weight:normal;font-size:12.3px;">533.22 KiB</div>
<div style="position:absolute;left:744px;top:430.5px;width:200px;height:20px;line-height:20px;text-align:right;white-space:nowrap;color:#34494f;font-weight:normal;font-size:12.3px;">0 ms</div>
<div style="position:absolute;left:22px;top:456px;width:35px;height:1px;background:#d8dfe3;"></div>
<div style="position:absolute;left:58px;top:456px;width:470px;height:1px;background:#d8dfe3;"></div>
<div style="position:absolute;left:529px;top:456px;width:122px;height:1px;background:#d8dfe3;"></div>
<div style="position:absolute;left:652px;top:456px;width:126px;height:1px;background:#d8dfe3;"></div>
<div style="position:absolute;left:779px;top:456px;width:84px;height:1px;background:#d8dfe3;"></div>
<div style="position:absolute;left:864px;top:456px;width:92px;height:1px;background:#d8dfe3;"></div>
<div style="position:absolute;left:22px;top:457px;width:934px;height:32px;background:#f2f4f6;"></div>
<div style="position:absolute;left:57px;top:457px;width:1px;height:32px;background:#e9edf0;"></div>
<div style="position:absolute;left:528px;top:457px;width:1px;height:32px;background:#e9edf0;"></div>
<div style="position:absolute;left:651px;top:457px;width:1px;height:32px;background:#e9edf0;"></div>
<div style="position:absolute;left:778px;top:457px;width:1px;height:32px;background:#e9edf0;"></div>
<div style="position:absolute;left:863px;top:457px;width:1px;height:32px;background:#e9edf0;"></div>
<div style="position:absolute;left:30px;top:465.0px;width:19px;height:16px;border-radius:4px;background:#12aee8;color:#fff;font-weight:bold;font-size:12px;line-height:16px;text-align:center;">4</div>
<div style="position:absolute;left:68px;top:463.5px;height:20px;line-height:20px;white-space:nowrap;color:#34494f;font-weight:normal;font-size:12.3px;">Pointer Record (PTR)</div>
<div style="position:absolute;left:442px;top:463.5px;width:200px;height:20px;line-height:20px;text-align:right;white-space:nowrap;color:#34494f;font-weight:normal;font-size:12.3px;">118.2</div>
<div style="position:absolute;left:569px;top:463.5px;width:200px;height:20px;line-height:20px;text-align:right;white-space:nowrap;color:#34494f;font-weight:normal;font-size:12.3px;">10.2</div>
<div style="position:absolute;left:654px;top:463.5px;width:200px;height:20px;line-height:20px;text-align:right;white-space:nowrap;color:#34494f;font-weight:normal;font-size:12.3px;">107.82 KiB</div>
<div style="position:absolute;left:744px;top:463.5px;width:200px;height:20px;line-height:20px;text-align:right;white-space:nowrap;color:#34494f;font-weight:normal;font-size:12.3px;">0 ms</div>
<div style="position:absolute;left:22px;top:489px;width:35px;height:1px;background:#d8dfe3;"></div>
<div style="position:absolute;left:58px;top:489px;width:470px;height:1px;background:#d8dfe3;"></div>
<div style="position:absolute;left:529px;top:489px;width:122px;height:1px;background:#d8dfe3;"></div>
<div style="position:absolute;left:652px;top:489px;width:126px;height:1px;background:#d8dfe3;"></div>
<div style="position:absolute;left:779px;top:489px;width:84px;height:1px;background:#d8dfe3;"></div>
<div style="position:absolute;left:864px;top:489px;width:92px;height:1px;background:#d8dfe3;"></div>
<div style="position:absolute;left:22px;top:490px;width:934px;height:32px;background:#ffffff;"></div>
<div style="position:absolute;left:57px;top:490px;width:1px;height:32px;background:#e9edf0;"></div>
<div style="position:absolute;left:528px;top:490px;width:1px;height:32px;background:#e9edf0;"></div>
<div style="position:absolute;left:651px;top:490px;width:1px;height:32px;background:#e9edf0;"></div>
<div style="position:absolute;left:778px;top:490px;width:1px;height:32px;background:#e9edf0;"></div>
<div style="position:absolute;left:863px;top:490px;width:1px;height:32px;background:#e9edf0;"></div>
<div style="position:absolute;left:30px;top:498.0px;width:19px;height:16px;border-radius:4px;background:#a614c4;color:#fff;font-weight:bold;font-size:12px;line-height:16px;text-align:center;">5</div>
<div style="position:absolute;left:68px;top:496.5px;height:20px;line-height:20px;white-space:nowrap;color:#34494f;font-weight:normal;font-size:12.3px;">Other</div>
<div style="position:absolute;left:442px;top:496.5px;width:200px;height:20px;line-height:20px;text-align:right;white-space:nowrap;color:#34494f;font-weight:normal;font-size:12.3px;">154.1</div>
<div style="position:absolute;left:569px;top:496.5px;width:200px;height:20px;line-height:20px;text-align:right;white-space:nowrap;color:#34494f;font-weight:normal;font-size:12.3px;">5.4</div>
<div style="position:absolute;left:654px;top:496.5px;width:200px;height:20px;line-height:20px;text-align:right;white-space:nowrap;color:#34494f;font-weight:normal;font-size:12.3px;">56.47 KiB</div>
<div style="position:absolute;left:744px;top:496.5px;width:200px;height:20px;line-height:20px;text-align:right;white-space:nowrap;color:#34494f;font-weight:normal;font-size:12.3px;">3.186 ms</div>
<div style="position:absolute;left:22px;top:522px;width:35px;height:1px;background:#d8dfe3;"></div>
<div style="position:absolute;left:58px;top:522px;width:470px;height:1px;background:#d8dfe3;"></div>
<div style="position:absolute;left:529px;top:522px;width:122px;height:1px;background:#d8dfe3;"></div>
<div style="position:absolute;left:652px;top:522px;width:126px;height:1px;background:#d8dfe3;"></div>
<div style="position:absolute;left:779px;top:522px;width:84px;height:1px;background:#d8dfe3;"></div>
<div style="position:absolute;left:864px;top:522px;width:92px;height:1px;background:#d8dfe3;"></div>
<div style="position:absolute;left:22px;top:523px;width:934px;height:32px;background:#f2f4f6;"></div>
<div style="position:absolute;left:57px;top:523px;width:1px;height:32px;background:#e9edf0;"></div>
<div style="position:absolute;left:528px;top:523px;width:1px;height:32px;background:#e9edf0;"></div>
<div style="position:absolute;left:651px;top:523px;width:1px;height:32px;background:#e9edf0;"></div>
<div style="position:absolute;left:778px;top:523px;width:1px;height:32px;background:#e9edf0;"></div>
<div style="position:absolute;left:863px;top:523px;width:1px;height:32px;background:#e9edf0;"></div>
<div style="position:absolute;left:30px;top:531.0px;width:19px;height:16px;border-radius:4px;background:#22b213;color:#fff;font-weight:bold;font-size:12px;line-height:16px;text-align:center;">6</div>
<div style="position:absolute;left:68px;top:529.5px;height:20px;line-height:20px;white-space:nowrap;color:#34494f;font-weight:normal;font-size:12.3px;">Text Record (TXT)</div>
<div style="position:absolute;left:442px;top:529.5px;width:200px;height:20px;line-height:20px;text-align:right;white-space:nowrap;color:#34494f;font-weight:normal;font-size:12.3px;">58.8</div>
<div style="position:absolute;left:569px;top:529.5px;width:200px;height:20px;line-height:20px;text-align:right;white-space:nowrap;color:#34494f;font-weight:normal;font-size:12.3px;">3.8</div>
<div style="position:absolute;left:654px;top:529.5px;width:200px;height:20px;line-height:20px;text-align:right;white-space:nowrap;color:#34494f;font-weight:normal;font-size:12.3px;">39.58 KiB</div>
<div style="position:absolute;left:744px;top:529.5px;width:200px;height:20px;line-height:20px;text-align:right;white-space:nowrap;color:#34494f;font-weight:normal;font-size:12.3px;">6.556 ms</div>
<div style="position:absolute;left:22px;top:555px;width:35px;height:2px;background:#cfd7dc;"></div>
<div style="position:absolute;left:58px;top:555px;width:470px;height:2px;background:#cfd7dc;"></div>
<div style="position:absolute;left:529px;top:555px;width:122px;height:2px;background:#cfd7dc;"></div>
<div style="position:absolute;left:652px;top:555px;width:126px;height:2px;background:#cfd7dc;"></div>
<div style="position:absolute;left:779px;top:555px;width:84px;height:2px;background:#cfd7dc;"></div>
<div style="position:absolute;left:864px;top:555px;width:92px;height:2px;background:#cfd7dc;"></div>
<div style="position:absolute;left:22px;top:557px;width:934px;height:32px;background:#ffffff;"></div>
<div style="position:absolute;left:57px;top:557px;width:1px;height:32px;background:#e9edf0;"></div>
<div style="position:absolute;left:528px;top:557px;width:1px;height:32px;background:#e9edf0;"></div>
<div style="position:absolute;left:651px;top:557px;width:1px;height:32px;background:#e9edf0;"></div>
<div style="position:absolute;left:778px;top:557px;width:1px;height:32px;background:#e9edf0;"></div>
<div style="position:absolute;left:863px;top:557px;width:1px;height:32px;background:#e9edf0;"></div>
<div style="position:absolute;left:30px;top:565.0px;width:19px;height:16px;border-radius:4px;background:#13897a;color:#fff;font-weight:bold;font-size:12px;line-height:16px;text-align:center;"></div>
<div style="position:absolute;left:68px;top:563.5px;height:20px;line-height:20px;white-space:nowrap;color:#263a42;font-weight:bold;font-size:12px;">All traffic</div>
<div style="position:absolute;left:442px;top:563.5px;width:200px;height:20px;line-height:20px;text-align:right;white-space:nowrap;color:#263a42;font-weight:bold;font-size:12px;">4.1 K</div>
<div style="position:absolute;left:569px;top:563.5px;width:200px;height:20px;line-height:20px;text-align:right;white-space:nowrap;color:#263a42;font-weight:bold;font-size:12px;">887.0</div>
<div style="position:absolute;left:654px;top:563.5px;width:200px;height:20px;line-height:20px;text-align:right;white-space:nowrap;color:#263a42;font-weight:bold;font-size:12px;">9.14 MiB</div>
<div style="position:absolute;left:744px;top:563.5px;width:200px;height:20px;line-height:20px;text-align:right;white-space:nowrap;color:#263a42;font-weight:bold;font-size:12px;">6.738 ms</div>
<div style="position:absolute;left:342px;top:335.2px;width:300px;height:20px;line-height:20px;text-align:right;white-space:nowrap;color:#7f9099;font-weight:bold;font-size:12.5px;transform:scaleX(0.895);transform-origin:100% 50%;">Maximal bits/s</div>
<div style="position:absolute;left:469px;top:335.2px;width:300px;height:20px;line-height:20px;text-align:right;white-space:nowrap;color:#7f9099;font-weight:bold;font-size:12.5px;transform:scaleX(0.895);transform-origin:100% 50%;">Bits per second</div>
<div style="position:absolute;left:554px;top:335.2px;width:300px;height:20px;line-height:20px;text-align:right;white-space:nowrap;color:#7f9099;font-weight:bold;font-size:12.5px;transform:scaleX(0.895);transform-origin:100% 50%;">Bytes</div>
<div style="position:absolute;left:644px;top:335.2px;width:300px;height:20px;line-height:20px;text-align:right;white-space:nowrap;color:#7f9099;font-weight:bold;font-size:12.5px;transform:scaleX(0.895);transform-origin:100% 50%;">AVG SRT</div>
<div style="position:absolute;left:889px;top:340px;width:3.5px;height:11px;background:#111;"></div>
<div style="position:absolute;left:22px;top:589px;width:934px;height:26px;background:#f5f7f9;"></div>
<div style="position:absolute;left:22px;top:615px;width:934px;height:1px;background:#d3dbdf;"></div>
<div style="position:absolute;left:32px;top:617.0px;height:20px;line-height:20px;white-space:nowrap;color:#34494f;font-size:11px;">2021-08-02 16:23 - 2021-08-03 16:23</div>
<div style="position:absolute;left:966px;top:121px;width:936px;height:518px;background:#ffffff;border:1px solid #d3dbdf;border-radius:4px;"></div>
<div style="position:absolute;left:967px;top:122px;width:934px;height:39px;background:#f5f7f9;border-radius:3px 3px 0 0;"></div>
<div style="position:absolute;left:967px;top:161px;width:934px;height:1px;background:#d3dbdf;"></div>
<div style="position:absolute;left:979.30px;top:125.90px;height:30px;line-height:30px;white-space:nowrap;color:#2a3642;font-weight:bold;font-size:13.4px;transform:scaleX(0.9512);transform-origin:0 50%;">DNS Errors</div>
<div style="position:absolute;left:1547px;top:131.5px;width:300px;height:20px;line-height:20px;text-align:right;white-space:nowrap;color:#7f929c;font-weight:bold;font-size:13.25px;">Last 24 hours (generic time span)</div>
<svg style="position:absolute;left:1853px;top:139.0px" width="10" height="6" viewBox="0 0 10 6"><polygon points="0,0 9.5,0 4.75,5.5" fill="#7f929c"/></svg>
<svg style="position:absolute;left:1875.5px;top:134.5px" width="14" height="14" viewBox="0 0 14 14"><rect x="5.04" y="0" width="3.92" height="7.00" fill="#7f929c" transform="rotate(0 7.0 7.0)"/><rect x="5.04" y="0" width="3.92" height="7.00" fill="#7f929c" transform="rotate(60 7.0 7.0)"/><rect x="5.04" y="0" width="3.92" height="7.00" fill="#7f929c" transform="rotate(120 7.0 7.0)"/><rect x="5.04" y="0" width="3.92" height="7.00" fill="#7f929c" transform="rotate(180 7.0 7.0)"/><rect x="5.04" y="0" width="3.92" height="7.00" fill="#7f929c" transform="rotate(240 7.0 7.0)"/><rect x="5.04" y="0" width="3.92" height="7.00" fill="#7f929c" transform="rotate(300 7.0 7.0)"/><circle cx="7.0" cy="7.0" r="5.39" fill="#7f929c"/><circle cx="7.0" cy="7.0" r="1.89" fill="#f5f7f9"/></svg>
<svg style="position:absolute;left:0;top:0" width="1920" height="1308" viewBox="0 0 1920 1308"><rect x="1037.5" y="213.0" width="843.0" height="1" fill="#e2e2e2"/><rect x="1037.5" y="292.0" width="843.0" height="1" fill="#e2e2e2"/><rect x="1095.0" y="180" width="1" height="112.5" fill="#e2e2e2"/><rect x="1200.0" y="180" width="1" height="112.5" fill="#e2e2e2"/><rect x="1305.0" y="180" width="1" height="112.5" fill="#e2e2e2"/><rect x="1410.0" y="180" width="1" height="112.5" fill="#e2e2e2"/><rect x="1515.0" y="180" width="1" height="112.5" fill="#e2e2e2"/><rect x="1620.0" y="180" width="1" height="112.5" fill="#e2e2e2"/><rect x="1725.0" y="180" width="1" height="112.5" fill="#e2e2e2"/><rect x="1829.0" y="180" width="1" height="112.5" fill="#e2e2e2"/><rect x="1037.00" y="281.68" width="3.527" height="10.82" fill="#ffa01a"/><rect x="1039.93" y="289.96" width="3.527" height="2.54" fill="#ffa01a"/><rect x="1042.85" y="279.47" width="3.527" height="13.03" fill="#ffa01a"/><rect x="1045.78" y="288.30" width="3.527" height="4.20" fill="#ffa01a"/><rect x="1048.71" y="280.58" width="3.527" height="11.92" fill="#ffa01a"/><rect x="1051.63" y="288.30" width="3.527" height="4.20" fill="#ffa01a"/><rect x="1054.56" y="288.30" width="3.527" height="4.20" fill="#ffa01a"/><rect x="1057.49" y="284.44" width="3.527" height="8.06" fill="#ffa01a"/><rect x="1060.42" y="259.38" width="3.527" height="33.12" fill="#ffa01a"/><rect x="1060.42" y="259.38" width="3.227" height="1.3" fill="#f02a0a"/><rect x="1063.34" y="246.57" width="3.527" height="45.93" fill="#ffa01a"/><rect x="1066.27" y="276.71" width="3.527" height="15.79" fill="#ffa01a"/><rect x="1069.20" y="289.41" width="3.527" height="3.09" fill="#ffa01a"/><rect x="1072.12" y="281.68" width="3.527" height="10.82" fill="#ffa01a"/><rect x="1075.05" y="289.41" width="3.527" height="3.09" fill="#ffa01a"/><rect x="1077.98" y="288.30" width="3.527" height="4.20" fill="#ffa01a"/><rect x="1080.90" y="249.66" width="3.527" height="42.84" fill="#ffa01a"/><rect x="1083.83" y="281.46" width="3.527" height="11.04" fill="#ffa01a"/><rect x="1086.76" y="284.44" width="3.527" height="8.06" fill="#ffa01a"/><rect x="1089.69" y="287.75" width="3.527" height="4.75" fill="#ffa01a"/><rect x="1092.61" y="273.40" width="3.527" height="19.10" fill="#ffa01a"/><rect x="1095.54" y="288.30" width="3.527" height="4.20" fill="#ffa01a"/><rect x="1098.47" y="289.41" width="3.527" height="3.09" fill="#ffa01a"/><rect x="1101.39" y="277.48" width="3.527" height="15.02" fill="#ffa01a"/><rect x="1104.32" y="282.78" width="3.527" height="9.72" fill="#ffa01a"/><rect x="1107.25" y="289.41" width="3.527" height="3.09" fill="#ffa01a"/><rect x="1110.17" y="266.44" width="3.527" height="26.06" fill="#ffa01a"/><rect x="1113.10" y="283.67" width="3.527" height="8.83" fill="#ffa01a"/><rect x="1116.03" y="283.67" width="3.527" height="8.83" fill="#ffa01a"/><rect x="1118.96" y="282.56" width="3.527" height="9.94" fill="#ffa01a"/><rect x="1121.88" y="267.55" width="3.527" height="24.95" fill="#ffa01a"/><rect x="1124.81" y="225.37" width="3.527" height="67.13" fill="#ffa01a"/><rect x="1127.74" y="289.41" width="3.527" height="3.09" fill="#ffa01a"/><rect x="1130.66" y="246.90" width="3.527" height="45.60" fill="#ffa01a"/><rect x="1130.66" y="246.90" width="3.227" height="1.3" fill="#f02a0a"/><rect x="1133.59" y="289.41" width="3.527" height="3.09" fill="#ffa01a"/><rect x="1136.52" y="285.54" width="3.527" height="6.96" fill="#ffa01a"/><rect x="1139.44" y="288.30" width="3.527" height="4.20" fill="#ffa01a"/><rect x="1142.37" y="271.52" width="3.527" height="20.98" fill="#ffa01a"/><rect x="1145.30" y="277.82" width="3.527" height="14.68" fill="#ffa01a"/><rect x="1148.23" y="276.71" width="3.527" height="15.79" fill="#ffa01a"/><rect x="1151.15" y="272.63" width="3.527" height="19.87" fill="#ffa01a"/><rect x="1154.08" y="249.66" width="3.527" height="42.84" fill="#ffa01a"/><rect x="1157.01" y="280.80" width="3.527" height="11.70" fill="#ffa01a"/><rect x="1159.93" y="286.65" width="3.527" height="5.85" fill="#ffa01a"/><rect x="1162.86" y="290.51" width="3.527" height="1.99" fill="#ffa01a"/><rect x="1165.79" y="289.41" width="3.527" height="3.09" fill="#ffa01a"/><rect x="1168.71" y="267.88" width="3.527" height="24.62" fill="#ffa01a"/><rect x="1171.64" y="280.58" width="3.527" height="11.92" fill="#ffa01a"/><rect x="1174.57" y="274.50" width="3.527" height="18.00" fill="#ffa01a"/><rect x="1177.50" y="285.54" width="3.527" height="6.96" fill="#ffa01a"/><rect x="1180.42" y="288.30" width="3.527" height="4.20" fill="#ffa01a"/><rect x="1183.35" y="285.54" width="3.527" height="6.96" fill="#ffa01a"/><rect x="1186.28" y="249.66" width="3.527" height="42.84" fill="#ffa01a"/><rect x="1189.20" y="289.41" width="3.527" height="3.09" fill="#ffa01a"/><rect x="1192.13" y="272.63" width="3.527" height="19.87" fill="#ffa01a"/><rect x="1195.06" y="288.30" width="3.527" height="4.20" fill="#ffa01a"/><rect x="1197.99" y="288.30" width="3.527" height="4.20" fill="#ffa01a"/><rect x="1200.91" y="254.63" width="3.527" height="37.87" fill="#ffa01a"/><rect x="1200.91" y="254.63" width="3.227" height="1.3" fill="#f02a0a"/><rect x="1203.84" y="281.46" width="3.527" height="11.04" fill="#ffa01a"/><rect x="1206.77" y="288.30" width="3.527" height="4.20" fill="#ffa01a"/><rect x="1209.69" y="279.47" width="3.527" height="13.03" fill="#ffa01a"/><rect x="1212.62" y="288.30" width="3.527" height="4.20" fill="#ffa01a"/><rect x="1215.55" y="290.51" width="3.527" height="1.99" fill="#ffa01a"/><rect x="1218.47" y="286.65" width="3.527" height="5.85" fill="#ffa01a"/><rect x="1221.40" y="288.30" width="3.527" height="4.20" fill="#ffa01a"/><rect x="1224.33" y="288.30" width="3.527" height="4.20" fill="#ffa01a"/><rect x="1227.26" y="288.30" width="3.527" height="4.20" fill="#ffa01a"/><rect x="1230.18" y="241.71" width="3.527" height="50.79" fill="#ffa01a"/><rect x="1233.11" y="284.44" width="3.527" height="8.06" fill="#ffa01a"/><rect x="1236.04" y="289.41" width="3.527" height="3.09" fill="#ffa01a"/><rect x="1238.96" y="288.30" width="3.527" height="4.20" fill="#ffa01a"/><rect x="1241.89" y="281.46" width="3.527" height="11.04" fill="#ffa01a"/><rect x="1244.82" y="282.56" width="3.527" height="9.94" fill="#ffa01a"/><rect x="1247.74" y="267.88" width="3.527" height="24.62" fill="#ffa01a"/><rect x="1250.67" y="222.61" width="3.527" height="69.89" fill="#ffa01a"/><rect x="1253.60" y="258.71" width="3.527" height="33.79" fill="#ffa01a"/><rect x="1256.53" y="288.30" width="3.527" height="4.20" fill="#ffa01a"/><rect x="1259.45" y="289.41" width="3.527" height="3.09" fill="#ffa01a"/><rect x="1262.38" y="290.51" width="3.527" height="1.99" fill="#ffa01a"/><rect x="1265.31" y="274.50" width="3.527" height="18.00" fill="#ffa01a"/><rect x="1268.23" y="281.68" width="3.527" height="10.82" fill="#ffa01a"/><rect x="1271.16" y="257.17" width="3.527" height="35.33" fill="#ffa01a"/><rect x="1271.16" y="257.17" width="3.227" height="1.3" fill="#f02a0a"/><rect x="1274.09" y="289.41" width="3.527" height="3.09" fill="#ffa01a"/><rect x="1277.01" y="289.41" width="3.527" height="3.09" fill="#ffa01a"/><rect x="1279.94" y="270.64" width="3.527" height="21.86" fill="#ffa01a"/><rect x="1282.87" y="289.41" width="3.527" height="3.09" fill="#ffa01a"/><rect x="1285.80" y="265.67" width="3.527" height="26.83" fill="#ffa01a"/><rect x="1288.72" y="224.49" width="3.527" height="68.01" fill="#ffa01a"/><rect x="1291.65" y="289.41" width="3.527" height="3.09" fill="#ffa01a"/><rect x="1294.58" y="287.20" width="3.527" height="5.30" fill="#ffa01a"/><rect x="1297.50" y="281.46" width="3.527" height="11.04" fill="#ffa01a"/><rect x="1300.43" y="282.56" width="3.527" height="9.94" fill="#ffa01a"/><rect x="1303.36" y="285.54" width="3.527" height="6.96" fill="#ffa01a"/><rect x="1306.28" y="288.30" width="3.527" height="4.20" fill="#ffa01a"/><rect x="1309.21" y="288.30" width="3.527" height="4.20" fill="#ffa01a"/><rect x="1312.14" y="287.20" width="3.527" height="5.30" fill="#ffa01a"/><rect x="1315.07" y="274.50" width="3.527" height="18.00" fill="#ffa01a"/><rect x="1317.99" y="276.71" width="3.527" height="15.79" fill="#ffa01a"/><rect x="1320.92" y="290.51" width="3.527" height="1.99" fill="#ffa01a"/><rect x="1323.85" y="289.41" width="3.527" height="3.09" fill="#ffa01a"/><rect x="1326.77" y="287.20" width="3.527" height="5.30" fill="#ffa01a"/><rect x="1329.70" y="289.41" width="3.527" height="3.09" fill="#ffa01a"/><rect x="1332.63" y="281.46" width="3.527" height="11.04" fill="#ffa01a"/><rect x="1335.55" y="282.56" width="3.527" height="9.94" fill="#ffa01a"/><rect x="1338.48" y="285.54" width="3.527" height="6.96" fill="#ffa01a"/><rect x="1341.41" y="237.51" width="3.527" height="54.99" fill="#ffa01a"/><rect x="1341.41" y="237.51" width="3.227" height="1.3" fill="#f02a0a"/><rect x="1344.34" y="277.48" width="3.527" height="15.02" fill="#ffa01a"/><rect x="1347.26" y="261.81" width="3.527" height="30.69" fill="#ffa01a"/><rect x="1350.19" y="277.48" width="3.527" height="15.02" fill="#ffa01a"/><rect x="1353.12" y="284.44" width="3.527" height="8.06" fill="#ffa01a"/><rect x="1356.04" y="284.44" width="3.527" height="8.06" fill="#ffa01a"/><rect x="1358.97" y="278.37" width="3.527" height="14.13" fill="#ffa01a"/><rect x="1361.90" y="282.56" width="3.527" height="9.94" fill="#ffa01a"/><rect x="1364.82" y="257.61" width="3.527" height="34.89" fill="#ffa01a"/><rect x="1367.75" y="286.65" width="3.527" height="5.85" fill="#ffa01a"/><rect x="1370.68" y="282.78" width="3.527" height="9.72" fill="#ffa01a"/><rect x="1373.61" y="278.37" width="3.527" height="14.13" fill="#ffa01a"/><rect x="1376.53" y="201.63" width="3.527" height="90.87" fill="#ffa01a"/><rect x="1379.46" y="289.41" width="3.527" height="3.09" fill="#ffa01a"/><rect x="1382.39" y="284.44" width="3.527" height="8.06" fill="#ffa01a"/><rect x="1385.31" y="282.56" width="3.527" height="9.94" fill="#ffa01a"/><rect x="1388.24" y="268.43" width="3.527" height="24.07" fill="#ffa01a"/><rect x="1391.17" y="289.41" width="3.527" height="3.09" fill="#ffa01a"/><rect x="1394.09" y="290.51" width="3.527" height="1.99" fill="#ffa01a"/><rect x="1397.02" y="288.30" width="3.527" height="4.20" fill="#ffa01a"/><rect x="1399.95" y="284.44" width="3.527" height="8.06" fill="#ffa01a"/><rect x="1402.88" y="288.30" width="3.527" height="4.20" fill="#ffa01a"/><rect x="1405.80" y="288.30" width="3.527" height="4.20" fill="#ffa01a"/><rect x="1408.73" y="285.54" width="3.527" height="6.96" fill="#ffa01a"/><rect x="1411.66" y="254.08" width="3.527" height="38.42" fill="#ffa01a"/><rect x="1411.66" y="254.08" width="3.227" height="1.3" fill="#f02a0a"/><rect x="1414.58" y="290.51" width="3.527" height="1.99" fill="#ffa01a"/><rect x="1417.51" y="269.53" width="3.527" height="22.97" fill="#ffa01a"/><rect x="1420.44" y="287.42" width="3.527" height="5.08" fill="#ffa01a"/><rect x="1423.36" y="281.46" width="3.527" height="11.04" fill="#ffa01a"/><rect x="1426.29" y="288.30" width="3.527" height="4.20" fill="#ffa01a"/><rect x="1429.22" y="282.56" width="3.527" height="9.94" fill="#ffa01a"/><rect x="1432.14" y="277.48" width="3.527" height="15.02" fill="#ffa01a"/><rect x="1435.07" y="277.48" width="3.527" height="15.02" fill="#ffa01a"/><rect x="1438.00" y="255.73" width="3.527" height="36.77" fill="#ffa01a"/><rect x="1440.93" y="289.41" width="3.527" height="3.09" fill="#ffa01a"/><rect x="1443.85" y="275.61" width="3.527" height="16.89" fill="#ffa01a"/><rect x="1446.78" y="271.52" width="3.527" height="20.98" fill="#ffa01a"/><rect x="1449.71" y="280.58" width="3.527" height="11.92" fill="#ffa01a"/><rect x="1452.63" y="283.67" width="3.527" height="8.83" fill="#ffa01a"/><rect x="1455.56" y="287.75" width="3.527" height="4.75" fill="#ffa01a"/><rect x="1458.49" y="289.41" width="3.527" height="3.09" fill="#ffa01a"/><rect x="1461.41" y="290.51" width="3.527" height="1.99" fill="#ffa01a"/><rect x="1464.34" y="276.71" width="3.527" height="15.79" fill="#ffa01a"/><rect x="1467.27" y="265.67" width="3.527" height="26.83" fill="#ffa01a"/><rect x="1470.20" y="290.51" width="3.527" height="1.99" fill="#ffa01a"/><rect x="1473.12" y="290.51" width="3.527" height="1.99" fill="#ffa01a"/><rect x="1476.05" y="275.61" width="3.527" height="16.89" fill="#ffa01a"/><rect x="1478.98" y="260.15" width="3.527" height="32.35" fill="#ffa01a"/><rect x="1478.98" y="260.15" width="3.227" height="1.3" fill="#f02a0a"/><rect x="1481.90" y="289.41" width="3.527" height="3.09" fill="#ffa01a"/><rect x="1484.83" y="266.44" width="3.527" height="26.06" fill="#ffa01a"/><rect x="1487.76" y="277.48" width="3.527" height="15.02" fill="#ffa01a"/><rect x="1490.68" y="281.68" width="3.527" height="10.82" fill="#ffa01a"/><rect x="1493.61" y="280.58" width="3.527" height="11.92" fill="#ffa01a"/><rect x="1496.54" y="244.36" width="3.527" height="48.14" fill="#ffa01a"/><rect x="1499.47" y="262.69" width="3.527" height="29.81" fill="#ffa01a"/><rect x="1502.39" y="262.69" width="3.527" height="29.81" fill="#ffa01a"/><rect x="1505.32" y="284.44" width="3.527" height="8.06" fill="#ffa01a"/><rect x="1508.25" y="283.67" width="3.527" height="8.83" fill="#ffa01a"/><rect x="1511.17" y="287.75" width="3.527" height="4.75" fill="#ffa01a"/><rect x="1514.10" y="282.56" width="3.527" height="9.94" fill="#ffa01a"/><rect x="1517.03" y="280.58" width="3.527" height="11.92" fill="#ffa01a"/><rect x="1519.95" y="271.52" width="3.527" height="20.98" fill="#ffa01a"/><rect x="1522.88" y="288.30" width="3.527" height="4.20" fill="#ffa01a"/><rect x="1525.81" y="288.30" width="3.527" height="4.20" fill="#ffa01a"/><rect x="1528.74" y="290.51" width="3.527" height="1.99" fill="#ffa01a"/><rect x="1531.66" y="290.51" width="3.527" height="1.99" fill="#ffa01a"/><rect x="1534.59" y="289.41" width="3.527" height="3.09" fill="#ffa01a"/><rect x="1537.52" y="276.71" width="3.527" height="15.79" fill="#ffa01a"/><rect x="1540.44" y="279.69" width="3.527" height="12.81" fill="#ffa01a"/><rect x="1543.37" y="282.56" width="3.527" height="9.94" fill="#ffa01a"/><rect x="1546.30" y="277.48" width="3.527" height="15.02" fill="#ffa01a"/><rect x="1549.22" y="260.15" width="3.527" height="32.35" fill="#ffa01a"/><rect x="1549.22" y="260.15" width="3.227" height="1.3" fill="#f02a0a"/><rect x="1552.15" y="289.41" width="3.527" height="3.09" fill="#ffa01a"/><rect x="1555.08" y="287.42" width="3.527" height="5.08" fill="#ffa01a"/><rect x="1558.01" y="282.56" width="3.527" height="9.94" fill="#ffa01a"/><rect x="1560.93" y="282.56" width="3.527" height="9.94" fill="#ffa01a"/><rect x="1563.86" y="279.47" width="3.527" height="13.03" fill="#ffa01a"/><rect x="1566.79" y="278.37" width="3.527" height="14.13" fill="#ffa01a"/><rect x="1569.71" y="285.54" width="3.527" height="6.96" fill="#ffa01a"/><rect x="1572.64" y="289.41" width="3.527" height="3.09" fill="#ffa01a"/><rect x="1575.57" y="288.30" width="3.527" height="4.20" fill="#ffa01a"/><rect x="1578.49" y="281.46" width="3.527" height="11.04" fill="#ffa01a"/><rect x="1581.42" y="280.58" width="3.527" height="11.92" fill="#ffa01a"/><rect x="1584.35" y="282.78" width="3.527" height="9.72" fill="#ffa01a"/><rect x="1587.28" y="279.47" width="3.527" height="13.03" fill="#ffa01a"/><rect x="1590.20" y="284.44" width="3.527" height="8.06" fill="#ffa01a"/><rect x="1593.13" y="288.30" width="3.527" height="4.20" fill="#ffa01a"/><rect x="1596.06" y="274.50" width="3.527" height="18.00" fill="#ffa01a"/><rect x="1598.98" y="282.56" width="3.527" height="9.94" fill="#ffa01a"/><rect x="1601.91" y="283.67" width="3.527" height="8.83" fill="#ffa01a"/><rect x="1604.84" y="282.56" width="3.527" height="9.94" fill="#ffa01a"/><rect x="1607.76" y="289.41" width="3.527" height="3.09" fill="#ffa01a"/><rect x="1610.69" y="268.43" width="3.527" height="24.07" fill="#ffa01a"/><rect x="1613.62" y="255.73" width="3.527" height="36.77" fill="#ffa01a"/><rect x="1616.55" y="288.30" width="3.527" height="4.20" fill="#ffa01a"/><rect x="1619.47" y="249.11" width="3.527" height="43.39" fill="#ffa01a"/><rect x="1619.47" y="249.11" width="3.227" height="1.3" fill="#f02a0a"/><rect x="1622.40" y="285.54" width="3.527" height="6.96" fill="#ffa01a"/><rect x="1625.33" y="289.41" width="3.527" height="3.09" fill="#ffa01a"/><rect x="1628.25" y="276.71" width="3.527" height="15.79" fill="#ffa01a"/><rect x="1631.18" y="285.54" width="3.527" height="6.96" fill="#ffa01a"/><rect x="1634.11" y="266.44" width="3.527" height="26.06" fill="#ffa01a"/><rect x="1637.03" y="279.69" width="3.527" height="12.81" fill="#ffa01a"/><rect x="1639.96" y="289.41" width="3.527" height="3.09" fill="#ffa01a"/><rect x="1642.89" y="267.88" width="3.527" height="24.62" fill="#ffa01a"/><rect x="1645.82" y="289.41" width="3.527" height="3.09" fill="#ffa01a"/><rect x="1648.74" y="288.30" width="3.527" height="4.20" fill="#ffa01a"/><rect x="1651.67" y="289.41" width="3.527" height="3.09" fill="#ffa01a"/><rect x="1654.60" y="289.41" width="3.527" height="3.09" fill="#ffa01a"/><rect x="1657.52" y="288.30" width="3.527" height="4.20" fill="#ffa01a"/><rect x="1660.45" y="289.72" width="3.527" height="2.78" fill="#ffa01a"/><rect x="1663.38" y="264.71" width="3.527" height="27.79" fill="#ffa01a"/><rect x="1666.31" y="276.43" width="3.527" height="16.07" fill="#ffa01a"/><rect x="1669.23" y="285.73" width="3.527" height="6.77" fill="#ffa01a"/><rect x="1672.16" y="286.70" width="3.527" height="5.80" fill="#ffa01a"/><rect x="1675.09" y="277.64" width="3.527" height="14.86" fill="#ffa01a"/><rect x="1678.01" y="248.64" width="3.527" height="43.86" fill="#ffa01a"/><rect x="1680.94" y="285.73" width="3.527" height="6.77" fill="#ffa01a"/><rect x="1683.87" y="276.43" width="3.527" height="16.07" fill="#ffa01a"/><rect x="1686.79" y="290.57" width="3.527" height="1.93" fill="#ffa01a"/><rect x="1689.72" y="253.83" width="3.527" height="38.67" fill="#ffa01a"/><rect x="1689.72" y="253.83" width="3.227" height="1.3" fill="#f02a0a"/><rect x="1692.65" y="289.36" width="3.527" height="3.14" fill="#ffa01a"/><rect x="1695.58" y="272.44" width="3.527" height="20.06" fill="#ffa01a"/><rect x="1698.50" y="278.85" width="3.527" height="13.65" fill="#ffa01a"/><rect x="1701.43" y="199.46" width="3.527" height="93.04" fill="#ffa01a"/><rect x="1704.36" y="281.63" width="3.527" height="10.87" fill="#ffa01a"/><rect x="1707.28" y="254.68" width="3.527" height="37.82" fill="#ffa01a"/><rect x="1710.21" y="288.51" width="3.527" height="3.99" fill="#ffa01a"/><rect x="1713.14" y="286.46" width="3.527" height="6.04" fill="#ffa01a"/><rect x="1716.06" y="289.72" width="3.527" height="2.78" fill="#ffa01a"/><rect x="1718.99" y="282.47" width="3.527" height="10.03" fill="#ffa01a"/><rect x="1721.92" y="289.72" width="3.527" height="2.78" fill="#ffa01a"/><rect x="1724.85" y="287.30" width="3.527" height="5.20" fill="#ffa01a"/><rect x="1727.77" y="281.26" width="3.527" height="11.24" fill="#ffa01a"/><rect x="1730.70" y="283.32" width="3.527" height="9.18" fill="#ffa01a"/><rect x="1733.63" y="283.32" width="3.527" height="9.18" fill="#ffa01a"/><rect x="1736.55" y="249.48" width="3.527" height="43.02" fill="#ffa01a"/><rect x="1739.48" y="283.68" width="3.527" height="8.82" fill="#ffa01a"/><rect x="1742.41" y="289.36" width="3.527" height="3.14" fill="#ffa01a"/><rect x="1745.33" y="289.36" width="3.527" height="3.14" fill="#ffa01a"/><rect x="1748.26" y="289.36" width="3.527" height="3.14" fill="#ffa01a"/><rect x="1751.19" y="289.36" width="3.527" height="3.14" fill="#ffa01a"/><rect x="1754.12" y="285.49" width="3.527" height="7.01" fill="#ffa01a"/><rect x="1757.04" y="289.72" width="3.527" height="2.78" fill="#ffa01a"/><rect x="1759.97" y="258.67" width="3.527" height="33.83" fill="#ffa01a"/><rect x="1759.97" y="258.67" width="3.227" height="1.3" fill="#f02a0a"/><rect x="1762.90" y="288.88" width="3.527" height="3.62" fill="#ffa01a"/><rect x="1765.82" y="287.30" width="3.527" height="5.20" fill="#ffa01a"/><rect x="1768.75" y="288.88" width="3.527" height="3.62" fill="#ffa01a"/><rect x="1771.68" y="279.45" width="3.527" height="13.05" fill="#ffa01a"/><rect x="1774.60" y="289.36" width="3.527" height="3.14" fill="#ffa01a"/><rect x="1777.53" y="289.36" width="3.527" height="3.14" fill="#ffa01a"/><rect x="1780.46" y="280.42" width="3.527" height="12.08" fill="#ffa01a"/><rect x="1783.38" y="289.72" width="3.527" height="2.78" fill="#ffa01a"/><rect x="1786.31" y="284.89" width="3.527" height="7.61" fill="#ffa01a"/><rect x="1789.24" y="283.68" width="3.527" height="8.82" fill="#ffa01a"/><rect x="1792.17" y="284.53" width="3.527" height="7.97" fill="#ffa01a"/><rect x="1795.09" y="282.47" width="3.527" height="10.03" fill="#ffa01a"/><rect x="1798.02" y="289.36" width="3.527" height="3.14" fill="#ffa01a"/><rect x="1800.95" y="280.42" width="3.527" height="12.08" fill="#ffa01a"/><rect x="1803.87" y="288.15" width="3.527" height="4.35" fill="#ffa01a"/><rect x="1806.80" y="290.33" width="3.527" height="2.17" fill="#ffa01a"/><rect x="1809.73" y="290.33" width="3.527" height="2.17" fill="#ffa01a"/><rect x="1812.65" y="270.39" width="3.527" height="22.11" fill="#ffa01a"/><rect x="1815.58" y="270.39" width="3.527" height="22.11" fill="#ffa01a"/><rect x="1818.51" y="283.32" width="3.527" height="9.18" fill="#ffa01a"/><rect x="1821.44" y="289.36" width="3.527" height="3.14" fill="#ffa01a"/><rect x="1824.36" y="290.08" width="3.527" height="2.42" fill="#ffa01a"/><rect x="1827.29" y="288.15" width="3.527" height="4.35" fill="#ffa01a"/><rect x="1830.22" y="227.49" width="3.527" height="65.01" fill="#ffa01a"/><rect x="1830.22" y="227.49" width="3.227" height="1.3" fill="#f02a0a"/><rect x="1833.14" y="289.36" width="3.527" height="3.14" fill="#ffa01a"/><rect x="1836.07" y="286.46" width="3.527" height="6.04" fill="#ffa01a"/><rect x="1839.00" y="288.51" width="3.527" height="3.99" fill="#ffa01a"/><rect x="1841.93" y="283.32" width="3.527" height="9.18" fill="#ffa01a"/><rect x="1844.85" y="289.36" width="3.527" height="3.14" fill="#ffa01a"/><rect x="1847.78" y="289.36" width="3.527" height="3.14" fill="#ffa01a"/><rect x="1850.71" y="290.33" width="3.527" height="2.17" fill="#ffa01a"/><rect x="1853.63" y="290.33" width="3.527" height="2.17" fill="#ffa01a"/><rect x="1856.56" y="272.44" width="3.527" height="20.06" fill="#ffa01a"/><rect x="1859.49" y="287.30" width="3.527" height="5.20" fill="#ffa01a"/><rect x="1862.41" y="290.33" width="3.527" height="2.17" fill="#ffa01a"/><rect x="1865.34" y="284.53" width="3.527" height="7.97" fill="#ffa01a"/><rect x="1868.27" y="273.41" width="3.527" height="19.09" fill="#ffa01a"/><rect x="1871.20" y="288.51" width="3.527" height="3.99" fill="#ffa01a"/><rect x="1874.12" y="275.22" width="3.527" height="17.28" fill="#ffa01a"/><rect x="1035.75" y="180" width="1.5" height="113.5" fill="#6e6e6e"/><rect x="1036.0" y="292.0" width="844.5" height="1.5" fill="#6e6e6e"/><rect x="1031.0" y="212.9" width="5" height="1.2" fill="#6e6e6e"/><text x="1027.0" y="217.1" text-anchor="end" font-family="Liberation Sans" font-size="10" fill="#666">500</text><rect x="1031.0" y="291.9" width="5" height="1.2" fill="#6e6e6e"/><text x="1027.0" y="296.1" text-anchor="end" font-family="Liberation Sans" font-size="10" fill="#666">0</text><rect x="1094.9" y="292.5" width="1.2" height="5" fill="#6e6e6e"/><text x="1095.5" y="311.5" text-anchor="middle" font-family="Liberation Sans" font-size="10" fill="#666">17:59</text><rect x="1199.9" y="292.5" width="1.2" height="5" fill="#6e6e6e"/><text x="1200.5" y="311.5" text-anchor="middle" font-family="Liberation Sans" font-size="10" fill="#666">20:59</text><rect x="1304.9" y="292.5" width="1.2" height="5" fill="#6e6e6e"/><text x="1305.5" y="311.5" text-anchor="middle" font-family="Liberation Sans" font-size="10" fill="#666">23:59</text><rect x="1409.9" y="292.5" width="1.2" height="5" fill="#6e6e6e"/><text x="1410.5" y="311.5" text-anchor="middle" font-family="Liberation Sans" font-size="10" fill="#666">08-03 02:59</text><rect x="1514.9" y="292.5" width="1.2" height="5" fill="#6e6e6e"/><text x="1515.5" y="311.5" text-anchor="middle" font-family="Liberation Sans" font-size="10" fill="#666">05:59</text><rect x="1619.9" y="292.5" width="1.2" height="5" fill="#6e6e6e"/><text x="1620.5" y="311.5" text-anchor="middle" font-family="Liberation Sans" font-size="10" fill="#666">08:59</text><rect x="1724.9" y="292.5" width="1.2" height="5" fill="#6e6e6e"/><text x="1725.5" y="311.5" text-anchor="middle" font-family="Liberation Sans" font-size="10" fill="#666">11:59</text><rect x="1828.9" y="292.5" width="1.2" height="5" fill="#6e6e6e"/><text x="1829.5" y="311.5" text-anchor="middle" font-family="Liberation Sans" font-size="10" fill="#666">14:59</text><text transform="translate(986,237) rotate(-90)" text-anchor="middle" font-family="Liberation Sans" font-size="11" fill="#666">bits/s</text></svg>
<div style="position:absolute;left:967px;top:328px;width:934px;height:1px;background:#d8dfe3;"></div>
<div style="position:absolute;left:967px;top:333px;width:934px;height:24px;background:#f5f7f9;"></div>
<div style="position:absolute;left:1013px;top:335.2px;height:20px;line-height:20px;white-space:nowrap;color:#7f9099;font-weight:bold;font-size:12.5px;transform:scaleX(0.895);transform-origin:0 50%;">Error Type</div>
<div style="position:absolute;left:967px;top:357px;width:35px;height:1px;background:#d8dfe3;"></div>
<div style="position:absolute;left:1003px;top:357px;width:557px;height:1px;background:#d8dfe3;"></div>
<div style="position:absolute;left:1561px;top:357px;width:122px;height:1px;background:#d8dfe3;"></div>
<div style="position:absolute;left:1684px;top:357px;width:128px;height:1px;background:#d8dfe3;"></div>
<div style="position:absolute;left:1813px;top:357px;width:88px;height:1px;background:#d8dfe3;"></div>
<div style="position:absolute;left:967px;top:358px;width:934px;height:32px;background:#ffffff;"></div>
<div style="position:absolute;left:1002px;top:358px;width:1px;height:32px;background:#e9edf0;"></div>
<div style="position:absolute;left:1560px;top:358px;width:1px;height:32px;background:#e9edf0;"></div>
<div style="position:absolute;left:1683px;top:358px;width:1px;height:32px;background:#e9edf0;"></div>
<div style="position:absolute;left:1812px;top:358px;width:1px;height:32px;background:#e9edf0;"></div>
<div style="position:absolute;left:975px;top:366.0px;width:19px;height:16px;border-radius:4px;background:#ff9f1c;color:#fff;font-weight:bold;font-size:12px;line-height:16px;text-align:center;">1</div>
<div style="position:absolute;left:1013px;top:364.5px;height:20px;line-height:20px;white-space:nowrap;color:#34494f;font-weight:normal;font-size:12.3px;">Name Not Exist</div>
<div style="position:absolute;left:1474px;top:364.5px;width:200px;height:20px;line-height:20px;text-align:right;white-space:nowrap;color:#34494f;font-weight:normal;font-size:12.3px;">589.0</div>
<div style="position:absolute;left:1603px;top:364.5px;width:200px;height:20px;line-height:20px;text-align:right;white-space:nowrap;color:#34494f;font-weight:normal;font-size:12.3px;">81.3</div>
<div style="position:absolute;left:1689.5px;top:364.5px;width:200px;height:20px;line-height:20px;text-align:right;white-space:nowrap;color:#34494f;font-weight:normal;font-size:12.3px;">857.40 KiB</div>
<div style="position:absolute;left:967px;top:390px;width:35px;height:1px;background:#d8dfe3;"></div>
<div style="position:absolute;left:1003px;top:390px;width:557px;height:1px;background:#d8dfe3;"></div>
<div style="position:absolute;left:1561px;top:390px;width:122px;height:1px;background:#d8dfe3;"></div>
<div style="position:absolute;left:1684px;top:390px;width:128px;height:1px;background:#d8dfe3;"></div>
<div style="position:absolute;left:1813px;top:390px;width:88px;height:1px;background:#d8dfe3;"></div>
<div style="position:absolute;left:967px;top:391px;width:934px;height:32px;background:#f2f4f6;"></div>
<div style="position:absolute;left:1002px;top:391px;width:1px;height:32px;background:#e9edf0;"></div>
<div style="position:absolute;left:1560px;top:391px;width:1px;height:32px;background:#e9edf0;"></div>
<div style="position:absolute;left:1683px;top:391px;width:1px;height:32px;background:#e9edf0;"></div>
<div style="position:absolute;left:1812px;top:391px;width:1px;height:32px;background:#e9edf0;"></div>
<div style="position:absolute;left:975px;top:399.0px;width:19px;height:16px;border-radius:4px;background:#f4430b;color:#fff;font-weight:bold;font-size:12px;line-height:16px;text-align:center;">2</div>
<div style="position:absolute;left:1013px;top:397.5px;height:20px;line-height:20px;white-space:nowrap;color:#34494f;font-weight:normal;font-size:12.3px;">Server Fail</div>
<div style="position:absolute;left:1474px;top:397.5px;width:200px;height:20px;line-height:20px;text-align:right;white-space:nowrap;color:#34494f;font-weight:normal;font-size:12.3px;">12.6</div>
<div style="position:absolute;left:1603px;top:397.5px;width:200px;height:20px;line-height:20px;text-align:right;white-space:nowrap;color:#34494f;font-weight:normal;font-size:12.3px;">0.5</div>
<div style="position:absolute;left:1689.5px;top:397.5px;width:200px;height:20px;line-height:20px;text-align:right;white-space:nowrap;color:#34494f;font-weight:normal;font-size:12.3px;">5.70 KiB</div>
<div style="position:absolute;left:967px;top:423px;width:35px;height:1px;background:#d8dfe3;"></div>
<div style="position:absolute;left:1003px;top:423px;width:557px;height:1px;background:#d8dfe3;"></div>
<div style="position:absolute;left:1561px;top:423px;width:122px;height:1px;background:#d8dfe3;"></div>
<div style="position:absolute;left:1684px;top:423px;width:128px;height:1px;background:#d8dfe3;"></div>
<div style="position:absolute;left:1813px;top:423px;width:88px;height:1px;background:#d8dfe3;"></div>
<div style="position:absolute;left:967px;top:424px;width:934px;height:32px;background:#ffffff;"></div>
<div style="position:absolute;left:1002px;top:424px;width:1px;height:32px;background:#e9edf0;"></div>
<div style="position:absolute;left:1560px;top:424px;width:1px;height:32px;background:#e9edf0;"></div>
<div style="position:absolute;left:1683px;top:424px;width:1px;height:32px;background:#e9edf0;"></div>
<div style="position:absolute;left:1812px;top:424px;width:1px;height:32px;background:#e9edf0;"></div>
<div style="position:absolute;left:975px;top:432.0px;width:19px;height:16px;border-radius:4px;background:#22b213;color:#fff;font-weight:bold;font-size:12px;line-height:16px;text-align:center;">3</div>
<div style="position:absolute;left:1013px;top:430.5px;height:20px;line-height:20px;white-space:nowrap;color:#34494f;font-weight:normal;font-size:12.3px;">Refused</div>
<div style="position:absolute;left:1474px;top:430.5px;width:200px;height:20px;line-height:20px;text-align:right;white-space:nowrap;color:#34494f;font-weight:normal;font-size:12.3px;">0</div>
<div style="position:absolute;left:1603px;top:430.5px;width:200px;height:20px;line-height:20px;text-align:right;white-space:nowrap;color:#34494f;font-weight:normal;font-size:12.3px;">0</div>
<div style="position:absolute;left:1689.5px;top:430.5px;width:200px;height:20px;line-height:20px;text-align:right;white-space:nowrap;color:#34494f;font-weight:normal;font-size:12.3px;">0</div>
<div style="position:absolute;left:967px;top:456px;width:35px;height:2px;background:#cfd7dc;"></div>
<div style="position:absolute;left:1003px;top:456px;width:557px;height:2px;background:#cfd7dc;"></div>
<div style="position:absolute;left:1561px;top:456px;width:122px;height:2px;background:#cfd7dc;"></div>
<div style="position:absolute;left:1684px;top:456px;width:128px;height:2px;background:#cfd7dc;"></div>
<div style="position:absolute;left:1813px;top:456px;width:88px;height:2px;background:#cfd7dc;"></div>
<div style="position:absolute;left:967px;top:458px;width:934px;height:32px;background:#ffffff;"></div>
<div style="position:absolute;left:1002px;top:458px;width:1px;height:32px;background:#e9edf0;"></div>
<div style="position:absolute;left:1560px;top:458px;width:1px;height:32px;background:#e9edf0;"></div>
<div style="position:absolute;left:1683px;top:458px;width:1px;height:32px;background:#e9edf0;"></div>
<div style="position:absolute;left:1812px;top:458px;width:1px;height:32px;background:#e9edf0;"></div>
<div style="position:absolute;left:975px;top:466.0px;width:19px;height:16px;border-radius:4px;background:#d8b048;color:#fff;font-weight:bold;font-size:12px;line-height:16px;text-align:center;"></div>
<div style="position:absolute;left:1013px;top:464.5px;height:20px;line-height:20px;white-space:nowrap;color:#263a42;font-weight:bold;font-size:12px;">All traffic</div>
<div style="position:absolute;left:1474px;top:464.5px;width:200px;height:20px;line-height:20px;text-align:right;white-space:nowrap;color:#263a42;font-weight:bold;font-size:12px;">589.0</div>
<div style="position:absolute;left:1603px;top:464.5px;width:200px;height:20px;line-height:20px;text-align:right;white-space:nowrap;color:#263a42;font-weight:bold;font-size:12px;">81.8</div>
<div style="position:absolute;left:1689.5px;top:464.5px;width:200px;height:20px;line-height:20px;text-align:right;white-space:nowrap;color:#263a42;font-weight:bold;font-size:12px;">863.09 KiB</div>
<div style="position:absolute;left:1374px;top:335.2px;width:300px;height:20px;line-height:20px;text-align:right;white-space:nowrap;color:#7f9099;font-weight:bold;font-size:12.5px;transform:scaleX(0.895);transform-origin:100% 50%;">Maximal bits/s</div>
<div style="position:absolute;left:1503px;top:335.2px;width:300px;height:20px;line-height:20px;text-align:right;white-space:nowrap;color:#7f9099;font-weight:bold;font-size:12.5px;transform:scaleX(0.895);transform-origin:100% 50%;">Bits per second</div>
<div style="position:absolute;left:1589.5px;top:335.2px;width:300px;height:20px;line-height:20px;text-align:right;white-space:nowrap;color:#7f9099;font-weight:bold;font-size:12.5px;transform:scaleX(0.895);transform-origin:100% 50%;">Bytes</div>
<div style="position:absolute;left:967px;top:490px;width:934px;height:125px;background:#f5f7f9;"></div>
<div style="position:absolute;left:967px;top:615px;width:934px;height:1px;background:#d3dbdf;"></div>
<div style="position:absolute;left:977px;top:617.0px;height:20px;line-height:20px;white-space:nowrap;color:#34494f;font-size:11px;">2021-08-02 16:23 - 2021-08-03 16:23</div>
<div style="position:absolute;left:23px;top:648px;width:932px;height:1px;background:#d3dbe0;"></div>
<div style="position:absolute;left:20px;top:650px;width:936px;height:700px;background:#ffffff;border:1px solid #d3dbdf;border-radius:4px 4px 0 0;border-bottom:none;"></div>
<div style="position:absolute;left:21px;top:651px;width:934px;height:39px;background:#f5f7f9;border-radius:3px 3px 0 0;"></div>
<div style="position:absolute;left:21px;top:690px;width:934px;height:1px;background:#d3dbdf;"></div>
<div style="position:absolute;left:33.30px;top:654.90px;height:30px;line-height:30px;white-space:nowrap;color:#2a3642;font-weight:bold;font-size:13.4px;transform:scaleX(0.9655);transform-origin:0 50%;">DNS Addresses Returning Errors</div>
<div style="position:absolute;left:601px;top:660.5px;width:300px;height:20px;line-height:20px;text-align:right;white-space:nowrap;color:#7f929c;font-weight:bold;font-size:13.25px;">Last 24 hours (generic time span)</div>
<svg style="position:absolute;left:907px;top:668.0px" width="10" height="6" viewBox="0 0 10 6"><polygon points="0,0 9.5,0 4.75,5.5" fill="#7f929c"/></svg>
<svg style="position:absolute;left:929.5px;top:663.5px" width="14" height="14" viewBox="0 0 14 14"><rect x="5.04" y="0" width="3.92" height="7.00" fill="#7f929c" transform="rotate(0 7.0 7.0)"/><rect x="5.04" y="0" width="3.92" height="7.00" fill="#7f929c" transform="rotate(60 7.0 7.0)"/><rect x="5.04" y="0" width="3.92" height="7.00" fill="#7f929c" transform="rotate(120 7.0 7.0)"/><rect x="5.04" y="0" width="3.92" height="7.00" fill="#7f929c" transform="rotate(180 7.0 7.0)"/><rect x="5.04" y="0" width="3.92" height="7.00" fill="#7f929c" transform="rotate(240 7.0 7.0)"/><rect x="5.04" y="0" width="3.92" height="7.00" fill="#7f929c" transform="rotate(300 7.0 7.0)"/><circle cx="7.0" cy="7.0" r="5.39" fill="#7f929c"/><circle cx="7.0" cy="7.0" r="1.89" fill="#f5f7f9"/></svg>
<svg style="position:absolute;left:342.75px;top:698.8px" width="132" height="132" viewBox="342.75 698.8 132 132"><defs><linearGradient id="g408_0" x1="0" y1="0" x2="1" y2="1"><stop offset="0" stop-color="#0aa3ff"/><stop offset="1" stop-color="#3a7cf6"/></linearGradient><linearGradient id="g408_1" x1="0" y1="0" x2="1" y2="1"><stop offset="0" stop-color="#10a39a"/><stop offset="1" stop-color="#17bfc8"/></linearGradient><linearGradient id="g408_2" x1="0" y1="0" x2="1" y2="1"><stop offset="0" stop-color="#e6508c"/><stop offset="1" stop-color="#ef7090"/></linearGradient><linearGradient id="g408_3" x1="0" y1="0" x2="1" y2="1"><stop offset="0" stop-color="#cf8f2c"/><stop offset="1" stop-color="#e0b84e"/></linearGradient><linearGradient id="g408_4" x1="0" y1="0" x2="1" y2="1"><stop offset="0" stop-color="#c2501a"/><stop offset="1" stop-color="#e07c20"/></linearGradient><linearGradient id="g408_5" x1="0" y1="0" x2="1" y2="1"><stop offset="0" stop-color="#8a2a8c"/><stop offset="1" stop-color="#b23a9c"/></linearGradient><linearGradient id="g408_6" x1="0" y1="0" x2="1" y2="1"><stop offset="0" stop-color="#086a58"/><stop offset="1" stop-color="#168c7c"/></linearGradient><linearGradient id="g408_7" x1="0" y1="0" x2="1" y2="1"><stop offset="0" stop-color="#0a48a8"/><stop offset="1" stop-color="#1c62d4"/></linearGradient><linearGradient id="g408_8" x1="0" y1="0" x2="1" y2="1"><stop offset="0" stop-color="#3a0080"/><stop offset="1" stop-color="#5c12a4"/></linearGradient><linearGradient id="g408_9" x1="0" y1="0" x2="1" y2="1"><stop offset="0" stop-color="#7a451a"/><stop offset="1" stop-color="#9c6228"/></linearGradient></defs><path d="M408.75,700.80 A64,64 0 0 1 437.44,822.01 L423.09,793.41 A32,32 0 0 0 408.75,732.80 Z" fill="url(#g408_0)" stroke="#ffffff" stroke-width="1.8" stroke-linejoin="miter"/><path d="M437.44,822.01 A64,64 0 0 1 375.56,819.52 L392.16,792.16 A32,32 0 0 0 423.09,793.41 Z" fill="url(#g408_1)" stroke="#ffffff" stroke-width="1.8" stroke-linejoin="miter"/><path d="M375.56,819.52 A64,64 0 0 1 347.34,782.81 L378.04,773.81 A32,32 0 0 0 392.16,792.16 Z" fill="url(#g408_2)" stroke="#ffffff" stroke-width="1.8" stroke-linejoin="miter"/><path d="M347.34,782.81 A64,64 0 0 1 347.11,747.57 L377.93,756.18 A32,32 0 0 0 378.04,773.81 Z" fill="url(#g408_3)" stroke="#ffffff" stroke-width="1.8" stroke-linejoin="miter"/><path d="M347.11,747.57 A64,64 0 0 1 362.14,720.94 L385.45,742.87 A32,32 0 0 0 377.93,756.18 Z" fill="url(#g408_4)" stroke="#ffffff" stroke-width="1.8" stroke-linejoin="miter"/><path d="M362.14,720.94 A64,64 0 0 1 383.25,706.10 L396.00,735.45 A32,32 0 0 0 385.45,742.87 Z" fill="url(#g408_5)" stroke="#ffffff" stroke-width="1.8" stroke-linejoin="miter"/><path d="M383.25,706.10 A64,64 0 0 1 400.68,701.31 L404.71,733.06 A32,32 0 0 0 396.00,735.45 Z" fill="url(#g408_6)" stroke="#ffffff" stroke-width="1.8" stroke-linejoin="miter"/><path d="M400.68,701.31 A64,64 0 0 1 403.80,700.99 L406.27,732.90 A32,32 0 0 0 404.71,733.06 Z" fill="url(#g408_7)" stroke="#ffffff" stroke-width="1.8" stroke-linejoin="miter"/><path d="M403.80,700.99 A64,64 0 0 1 406.93,700.83 L407.84,732.81 A32,32 0 0 0 406.27,732.90 Z" fill="url(#g408_8)" stroke="#ffffff" stroke-width="1.8" stroke-linejoin="miter"/><path d="M406.93,700.83 A64,64 0 0 1 408.75,700.80 L408.75,732.80 A32,32 0 0 0 407.84,732.81 Z" fill="url(#g408_9)" stroke="#ffffff" stroke-width="1.8" stroke-linejoin="miter"/></svg>
<svg style="position:absolute;left:491px;top:698.7px" width="132" height="132" viewBox="491 698.7 132 132"><defs><linearGradient id="g557_0" x1="0" y1="0" x2="1" y2="1"><stop offset="0" stop-color="#1a6ef0"/><stop offset="1" stop-color="#3b55f0"/></linearGradient><linearGradient id="g557_1" x1="0" y1="0" x2="1" y2="1"><stop offset="0" stop-color="#dd2a00"/><stop offset="1" stop-color="#f5561a"/></linearGradient></defs><path d="M557.00,700.70 A64,64 0 1 1 527.60,707.85 L542.30,736.28 A32,32 0 1 0 557.00,732.70 Z" fill="url(#g557_0)" stroke="#ffffff" stroke-width="1.8" stroke-linejoin="miter"/><path d="M527.60,707.85 A64,64 0 0 1 557.00,700.70 L557.00,732.70 A32,32 0 0 0 542.30,736.28 Z" fill="url(#g557_1)" stroke="#ffffff" stroke-width="1.8" stroke-linejoin="miter"/></svg>
<div style="position:absolute;left:21px;top:845px;width:924px;height:1px;background:#d8dfe3;"></div>
<div style="position:absolute;left:21px;top:850px;width:924px;height:24px;background:#f5f7f9;"></div>
<div style="position:absolute;left:67px;top:852.2px;height:20px;line-height:20px;white-space:nowrap;color:#7f9099;font-weight:bold;font-size:12.5px;transform:scaleX(0.895);transform-origin:0 50%;">DNS question name (first, second, and third level domain)</div>
<div style="position:absolute;left:21px;top:874px;width:35px;height:1px;background:#d8dfe3;"></div>
<div style="position:absolute;left:57px;top:874px;width:623px;height:1px;background:#d8dfe3;"></div>
<div style="position:absolute;left:681px;top:874px;width:84px;height:1px;background:#d8dfe3;"></div>
<div style="position:absolute;left:766px;top:874px;width:113px;height:1px;background:#d8dfe3;"></div>
<div style="position:absolute;left:880px;top:874px;width:65px;height:1px;background:#d8dfe3;"></div>
<div style="position:absolute;left:21px;top:875px;width:924px;height:32px;background:#ffffff;"></div>
<div style="position:absolute;left:56px;top:875px;width:1px;height:32px;background:#e9edf0;"></div>
<div style="position:absolute;left:680px;top:875px;width:1px;height:32px;background:#e9edf0;"></div>
<div style="position:absolute;left:765px;top:875px;width:1px;height:32px;background:#e9edf0;"></div>
<div style="position:absolute;left:879px;top:875px;width:1px;height:32px;background:#e9edf0;"></div>
<div style="position:absolute;left:29px;top:883.0px;width:19px;height:16px;border-radius:4px;background:#2b7ff5;color:#fff;font-weight:bold;font-size:12px;line-height:16px;text-align:center;">1</div>
<div style="position:absolute;left:67px;top:881.5px;height:20px;line-height:20px;white-space:nowrap;color:#34494f;font-weight:normal;font-size:12.3px;">ligavozick.skynet.cz</div>
<div style="position:absolute;left:556px;top:881.5px;width:200px;height:20px;line-height:20px;text-align:right;white-space:nowrap;color:#34494f;font-weight:normal;font-size:12.3px;">338.01 KiB</div>
<div style="position:absolute;left:670px;top:881.5px;width:200px;height:20px;line-height:20px;text-align:right;white-space:nowrap;color:#34494f;font-weight:normal;font-size:12.3px;">2.73 K</div>
<div style="position:absolute;left:733.5px;top:881.5px;width:200px;height:20px;line-height:20px;text-align:right;white-space:nowrap;color:#34494f;font-weight:normal;font-size:12.3px;">2.73 K</div>
<div style="position:absolute;left:21px;top:907px;width:35px;height:1px;background:#d8dfe3;"></div>
<div style="position:absolute;left:57px;top:907px;width:623px;height:1px;background:#d8dfe3;"></div>
<div style="position:absolute;left:681px;top:907px;width:84px;height:1px;background:#d8dfe3;"></div>
<div style="position:absolute;left:766px;top:907px;width:113px;height:1px;background:#d8dfe3;"></div>
<div style="position:absolute;left:880px;top:907px;width:65px;height:1px;background:#d8dfe3;"></div>
<div style="position:absolute;left:21px;top:908px;width:924px;height:32px;background:#f2f4f6;"></div>
<div style="position:absolute;left:56px;top:908px;width:1px;height:32px;background:#e9edf0;"></div>
<div style="position:absolute;left:680px;top:908px;width:1px;height:32px;background:#e9edf0;"></div>
<div style="position:absolute;left:765px;top:908px;width:1px;height:32px;background:#e9edf0;"></div>
<div style="position:absolute;left:879px;top:908px;width:1px;height:32px;background:#e9edf0;"></div>
<div style="position:absolute;left:29px;top:916.0px;width:19px;height:16px;border-radius:4px;background:#16b0a8;color:#fff;font-weight:bold;font-size:12px;line-height:16px;text-align:center;">2</div>
<div style="position:absolute;left:67px;top:914.5px;height:20px;line-height:20px;white-space:nowrap;color:#34494f;font-weight:normal;font-size:12.3px;">darujme.cz.localhost</div>
<div style="position:absolute;left:556px;top:914.5px;width:200px;height:20px;line-height:20px;text-align:right;white-space:nowrap;color:#34494f;font-weight:normal;font-size:12.3px;">119.58 KiB</div>
<div style="position:absolute;left:670px;top:914.5px;width:200px;height:20px;line-height:20px;text-align:right;white-space:nowrap;color:#34494f;font-weight:normal;font-size:12.3px;">1.03 K</div>
<div style="position:absolute;left:733.5px;top:914.5px;width:200px;height:20px;line-height:20px;text-align:right;white-space:nowrap;color:#34494f;font-weight:normal;font-size:12.3px;">1.03 K</div>
<div style="position:absolute;left:21px;top:940px;width:35px;height:1px;background:#d8dfe3;"></div>
<div style="position:absolute;left:57px;top:940px;width:623px;height:1px;background:#d8dfe3;"></div>
<div style="position:absolute;left:681px;top:940px;width:84px;height:1px;background:#d8dfe3;"></div>
<div style="position:absolute;left:766px;top:940px;width:113px;height:1px;background:#d8dfe3;"></div>
<div style="position:absolute;left:880px;top:940px;width:65px;height:1px;background:#d8dfe3;"></div>
<div style="position:absolute;left:21px;top:941px;width:924px;height:32px;background:#ffffff;"></div>
<div style="position:absolute;left:56px;top:941px;width:1px;height:32px;background:#e9edf0;"></div>
<div style="position:absolute;left:680px;top:941px;width:1px;height:32px;background:#e9edf0;"></div>
<div style="position:absolute;left:765px;top:941px;width:1px;height:32px;background:#e9edf0;"></div>
<div style="position:absolute;left:879px;top:941px;width:1px;height:32px;background:#e9edf0;"></div>
<div style="position:absolute;left:29px;top:949.0px;width:19px;height:16px;border-radius:4px;background:#ea6089;color:#fff;font-weight:bold;font-size:12px;line-height:16px;text-align:center;">3</div>
<div style="position:absolute;left:67px;top:947.5px;height:20px;line-height:20px;white-space:nowrap;color:#34494f;font-weight:normal;font-size:12.3px;">ssl</div>
<div style="position:absolute;left:556px;top:947.5px;width:200px;height:20px;line-height:20px;text-align:right;white-space:nowrap;color:#34494f;font-weight:normal;font-size:12.3px;">91.43 KiB</div>
<div style="position:absolute;left:670px;top:947.5px;width:200px;height:20px;line-height:20px;text-align:right;white-space:nowrap;color:#34494f;font-weight:normal;font-size:12.3px;">755</div>
<div style="position:absolute;left:733.5px;top:947.5px;width:200px;height:20px;line-height:20px;text-align:right;white-space:nowrap;color:#34494f;font-weight:normal;font-size:12.3px;">755</div>
<div style="position:absolute;left:21px;top:973px;width:35px;height:1px;background:#d8dfe3;"></div>
<div style="position:absolute;left:57px;top:973px;width:623px;height:1px;background:#d8dfe3;"></div>
<div style="position:absolute;left:681px;top:973px;width:84px;height:1px;background:#d8dfe3;"></div>
<div style="position:absolute;left:766px;top:973px;width:113px;height:1px;background:#d8dfe3;"></div>
<div style="position:absolute;left:880px;top:973px;width:65px;height:1px;background:#d8dfe3;"></div>
<div style="position:absolute;left:21px;top:974px;width:924px;height:32px;background:#f2f4f6;"></div>
<div style="position:absolute;left:56px;top:974px;width:1px;height:32px;background:#e9edf0;"></div>
<div style="position:absolute;left:680px;top:974px;width:1px;height:32px;background:#e9edf0;"></div>
<div style="position:absolute;left:765px;top:974px;width:1px;height:32px;background:#e9edf0;"></div>
<div style="position:absolute;left:879px;top:974px;width:1px;height:32px;background:#e9edf0;"></div>
<div style="position:absolute;left:29px;top:982.0px;width:19px;height:16px;border-radius:4px;background:#d9a93c;color:#fff;font-weight:bold;font-size:12px;line-height:16px;text-align:center;">4</div>
<div style="position:absolute;left:67px;top:980.5px;height:20px;line-height:20px;white-space:nowrap;color:#34494f;font-weight:normal;font-size:12.3px;">185.in-addr.arpa</div>
<div style="position:absolute;left:556px;top:980.5px;width:200px;height:20px;line-height:20px;text-align:right;white-space:nowrap;color:#34494f;font-weight:normal;font-size:12.3px;">77.24 KiB</div>
<div style="position:absolute;left:670px;top:980.5px;width:200px;height:20px;line-height:20px;text-align:right;white-space:nowrap;color:#34494f;font-weight:normal;font-size:12.3px;">569</div>
<div style="position:absolute;left:733.5px;top:980.5px;width:200px;height:20px;line-height:20px;text-align:right;white-space:nowrap;color:#34494f;font-weight:normal;font-size:12.3px;">569</div>
<div style="position:absolute;left:21px;top:1006px;width:35px;height:1px;background:#d8dfe3;"></div>
<div style="position:absolute;left:57px;top:1006px;width:623px;height:1px;background:#d8dfe3;"></div>
<div style="position:absolute;left:681px;top:1006px;width:84px;height:1px;background:#d8dfe3;"></div>
<div style="position:absolute;left:766px;top:1006px;width:113px;height:1px;background:#d8dfe3;"></div>
<div style="position:absolute;left:880px;top:1006px;width:65px;height:1px;background:#d8dfe3;"></div>
<div style="position:absolute;left:21px;top:1007px;width:924px;height:32px;background:#ffffff;"></div>
<div style="position:absolute;left:56px;top:1007px;width:1px;height:32px;background:#e9edf0;"></div>
<div style="position:absolute;left:680px;top:1007px;width:1px;height:32px;background:#e9edf0;"></div>
<div style="position:absolute;left:765px;top:1007px;width:1px;height:32px;background:#e9edf0;"></div>
<div style="position:absolute;left:879px;top:1007px;width:1px;height:32px;background:#e9edf0;"></div>
<div style="position:absolute;left:29px;top:1015.0px;width:19px;height:16px;border-radius:4px;background:#d86a18;color:#fff;font-weight:bold;font-size:12px;line-height:16px;text-align:center;">5</div>
<div style="position:absolute;left:67px;top:1013.5px;height:20px;line-height:20px;white-space:nowrap;color:#34494f;font-weight:normal;font-size:12.3px;">cable.virginmedia.net</div>
<div style="position:absolute;left:556px;top:1013.5px;width:200px;height:20px;line-height:20px;text-align:right;white-space:nowrap;color:#34494f;font-weight:normal;font-size:12.3px;">61.85 KiB</div>
<div style="position:absolute;left:670px;top:1013.5px;width:200px;height:20px;line-height:20px;text-align:right;white-space:nowrap;color:#34494f;font-weight:normal;font-size:12.3px;">492</div>
<div style="position:absolute;left:733.5px;top:1013.5px;width:200px;height:20px;line-height:20px;text-align:right;white-space:nowrap;color:#34494f;font-weight:normal;font-size:12.3px;">492</div>
<div style="position:absolute;left:21px;top:1039px;width:35px;height:1px;background:#d8dfe3;"></div>
<div style="position:absolute;left:57px;top:1039px;width:623px;height:1px;background:#d8dfe3;"></div>
<div style="position:absolute;left:681px;top:1039px;width:84px;height:1px;background:#d8dfe3;"></div>
<div style="position:absolute;left:766px;top:1039px;width:113px;height:1px;background:#d8dfe3;"></div>
<div style="position:absolute;left:880px;top:1039px;width:65px;height:1px;background:#d8dfe3;"></div>
<div style="position:absolute;left:21px;top:1040px;width:924px;height:32px;background:#f2f4f6;"></div>
<div style="position:absolute;left:56px;top:1040px;width:1px;height:32px;background:#e9edf0;"></div>
<div style="position:absolute;left:680px;top:1040px;width:1px;height:32px;background:#e9edf0;"></div>
<div style="position:absolute;left:765px;top:1040px;width:1px;height:32px;background:#e9edf0;"></div>
<div style="position:absolute;left:879px;top:1040px;width:1px;height:32px;background:#e9edf0;"></div>
<div style="position:absolute;left:29px;top:1048.0px;width:19px;height:16px;border-radius:4px;background:#a8309a;color:#fff;font-weight:bold;font-size:12px;line-height:16px;text-align:center;">6</div>
<div style="position:absolute;left:67px;top:1046.5px;height:20px;line-height:20px;white-space:nowrap;color:#34494f;font-weight:normal;font-size:12.3px;">182.in-addr.arpa</div>
<div style="position:absolute;left:556px;top:1046.5px;width:200px;height:20px;line-height:20px;text-align:right;white-space:nowrap;color:#34494f;font-weight:normal;font-size:12.3px;">65.09 KiB</div>
<div style="position:absolute;left:670px;top:1046.5px;width:200px;height:20px;line-height:20px;text-align:right;white-space:nowrap;color:#34494f;font-weight:normal;font-size:12.3px;">414</div>
<div style="position:absolute;left:733.5px;top:1046.5px;width:200px;height:20px;line-height:20px;text-align:right;white-space:nowrap;color:#34494f;font-weight:normal;font-size:12.3px;">414</div>
<div style="position:absolute;left:21px;top:1072px;width:35px;height:1px;background:#d8dfe3;"></div>
<div style="position:absolute;left:57px;top:1072px;width:623px;height:1px;background:#d8dfe3;"></div>
<div style="position:absolute;left:681px;top:1072px;width:84px;height:1px;background:#d8dfe3;"></div>
<div style="position:absolute;left:766px;top:1072px;width:113px;height:1px;background:#d8dfe3;"></div>
<div style="position:absolute;left:880px;top:1072px;width:65px;height:1px;background:#d8dfe3;"></div>
<div style="position:absolute;left:21px;top:1073px;width:924px;height:32px;background:#ffffff;"></div>
<div style="position:absolute;left:56px;top:1073px;width:1px;height:32px;background:#e9edf0;"></div>
<div style="position:absolute;left:680px;top:1073px;width:1px;height:32px;background:#e9edf0;"></div>
<div style="position:absolute;left:765px;top:1073px;width:1px;height:32px;background:#e9edf0;"></div>
<div style="position:absolute;left:879px;top:1073px;width:1px;height:32px;background:#e9edf0;"></div>
<div style="position:absolute;left:29px;top:1081.0px;width:19px;height:16px;border-radius:4px;background:#128a78;color:#fff;font-weight:bold;font-size:12px;line-height:16px;text-align:center;">7</div>
<div style="position:absolute;left:67px;top:1079.5px;height:20px;line-height:20px;white-space:nowrap;color:#34494f;font-weight:normal;font-size:12.3px;">192.in-addr.arpa</div>
<div style="position:absolute;left:556px;top:1079.5px;width:200px;height:20px;line-height:20px;text-align:right;white-space:nowrap;color:#34494f;font-weight:normal;font-size:12.3px;">34.52 KiB</div>
<div style="position:absolute;left:670px;top:1079.5px;width:200px;height:20px;line-height:20px;text-align:right;white-space:nowrap;color:#34494f;font-weight:normal;font-size:12.3px;">289</div>
<div style="position:absolute;left:733.5px;top:1079.5px;width:200px;height:20px;line-height:20px;text-align:right;white-space:nowrap;color:#34494f;font-weight:normal;font-size:12.3px;">289</div>
<div style="position:absolute;left:21px;top:1105px;width:35px;height:1px;background:#d8dfe3;"></div>
<div style="position:absolute;left:57px;top:1105px;width:623px;height:1px;background:#d8dfe3;"></div>
<div style="position:absolute;left:681px;top:1105px;width:84px;height:1px;background:#d8dfe3;"></div>
<div style="position:absolute;left:766px;top:1105px;width:113px;height:1px;background:#d8dfe3;"></div>
<div style="position:absolute;left:880px;top:1105px;width:65px;height:1px;background:#d8dfe3;"></div>
<div style="position:absolute;left:21px;top:1106px;width:924px;height:32px;background:#f2f4f6;"></div>
<div style="position:absolute;left:56px;top:1106px;width:1px;height:32px;background:#e9edf0;"></div>
<div style="position:absolute;left:680px;top:1106px;width:1px;height:32px;background:#e9edf0;"></div>
<div style="position:absolute;left:765px;top:1106px;width:1px;height:32px;background:#e9edf0;"></div>
<div style="position:absolute;left:879px;top:1106px;width:1px;height:32px;background:#e9edf0;"></div>
<div style="position:absolute;left:29px;top:1114.0px;width:19px;height:16px;border-radius:4px;background:#1450c0;color:#fff;font-weight:bold;font-size:12px;line-height:16px;text-align:center;">8</div>
<div style="position:absolute;left:67px;top:1112.5px;height:20px;line-height:20px;white-space:nowrap;color:#34494f;font-weight:normal;font-size:12.3px;">invea.com.localhost</div>
<div style="position:absolute;left:556px;top:1112.5px;width:200px;height:20px;line-height:20px;text-align:right;white-space:nowrap;color:#34494f;font-weight:normal;font-size:12.3px;">6.00 KiB</div>
<div style="position:absolute;left:670px;top:1112.5px;width:200px;height:20px;line-height:20px;text-align:right;white-space:nowrap;color:#34494f;font-weight:normal;font-size:12.3px;">50</div>
<div style="position:absolute;left:733.5px;top:1112.5px;width:200px;height:20px;line-height:20px;text-align:right;white-space:nowrap;color:#34494f;font-weight:normal;font-size:12.3px;">50</div>
<div style="position:absolute;left:21px;top:1138px;width:35px;height:1px;background:#d8dfe3;"></div>
<div style="position:absolute;left:57px;top:1138px;width:623px;height:1px;background:#d8dfe3;"></div>
<div style="position:absolute;left:681px;top:1138px;width:84px;height:1px;background:#d8dfe3;"></div>
<div style="position:absolute;left:766px;top:1138px;width:113px;height:1px;background:#d8dfe3;"></div>
<div style="position:absolute;left:880px;top:1138px;width:65px;height:1px;background:#d8dfe3;"></div>
<div style="position:absolute;left:21px;top:1139px;width:924px;height:32px;background:#ffffff;"></div>
<div style="position:absolute;left:56px;top:1139px;width:1px;height:32px;background:#e9edf0;"></div>
<div style="position:absolute;left:680px;top:1139px;width:1px;height:32px;background:#e9edf0;"></div>
<div style="position:absolute;left:765px;top:1139px;width:1px;height:32px;background:#e9edf0;"></div>
<div style="position:absolute;left:879px;top:1139px;width:1px;height:32px;background:#e9edf0;"></div>
<div style="position:absolute;left:29px;top:1147.0px;width:19px;height:16px;border-radius:4px;background:#4a0a96;color:#fff;font-weight:bold;font-size:12px;line-height:16px;text-align:center;">9</div>
<div style="position:absolute;left:67px;top:1145.5px;height:20px;line-height:20px;white-space:nowrap;color:#34494f;font-weight:normal;font-size:12.3px;">46.in-addr.arpa</div>
<div style="position:absolute;left:556px;top:1145.5px;width:200px;height:20px;line-height:20px;text-align:right;white-space:nowrap;color:#34494f;font-weight:normal;font-size:12.3px;">6.93 KiB</div>
<div style="position:absolute;left:670px;top:1145.5px;width:200px;height:20px;line-height:20px;text-align:right;white-space:nowrap;color:#34494f;font-weight:normal;font-size:12.3px;">50</div>
<div style="position:absolute;left:733.5px;top:1145.5px;width:200px;height:20px;line-height:20px;text-align:right;white-space:nowrap;color:#34494f;font-weight:normal;font-size:12.3px;">50</div>
<div style="position:absolute;left:21px;top:1171px;width:35px;height:1px;background:#d8dfe3;"></div>
<div style="position:absolute;left:57px;top:1171px;width:623px;height:1px;background:#d8dfe3;"></div>
<div style="position:absolute;left:681px;top:1171px;width:84px;height:1px;background:#d8dfe3;"></div>
<div style="position:absolute;left:766px;top:1171px;width:113px;height:1px;background:#d8dfe3;"></div>
<div style="position:absolute;left:880px;top:1171px;width:65px;height:1px;background:#d8dfe3;"></div>
<div style="position:absolute;left:21px;top:1172px;width:924px;height:32px;background:#f2f4f6;"></div>
<div style="position:absolute;left:56px;top:1172px;width:1px;height:32px;background:#e9edf0;"></div>
<div style="position:absolute;left:680px;top:1172px;width:1px;height:32px;background:#e9edf0;"></div>
<div style="position:absolute;left:765px;top:1172px;width:1px;height:32px;background:#e9edf0;"></div>
<div style="position:absolute;left:879px;top:1172px;width:1px;height:32px;background:#e9edf0;"></div>
<div style="position:absolute;left:29px;top:1180.0px;width:19px;height:16px;border-radius:4px;background:#8a5526;color:#fff;font-weight:bold;font-size:12px;line-height:16px;text-align:center;">10</div>
<div style="position:absolute;left:67px;top:1178.5px;height:20px;line-height:20px;white-space:nowrap;color:#34494f;font-weight:normal;font-size:12.3px;">sky.cz.localhost</div>
<div style="position:absolute;left:556px;top:1178.5px;width:200px;height:20px;line-height:20px;text-align:right;white-space:nowrap;color:#34494f;font-weight:normal;font-size:12.3px;">3.29 KiB</div>
<div style="position:absolute;left:670px;top:1178.5px;width:200px;height:20px;line-height:20px;text-align:right;white-space:nowrap;color:#34494f;font-weight:normal;font-size:12.3px;">29</div>
<div style="position:absolute;left:733.5px;top:1178.5px;width:200px;height:20px;line-height:20px;text-align:right;white-space:nowrap;color:#34494f;font-weight:normal;font-size:12.3px;">29</div>
<div style="position:absolute;left:21px;top:1204px;width:35px;height:2px;background:#cfd7dc;"></div>
<div style="position:absolute;left:57px;top:1204px;width:623px;height:2px;background:#cfd7dc;"></div>
<div style="position:absolute;left:681px;top:1204px;width:84px;height:2px;background:#cfd7dc;"></div>
<div style="position:absolute;left:766px;top:1204px;width:113px;height:2px;background:#cfd7dc;"></div>
<div style="position:absolute;left:880px;top:1204px;width:65px;height:2px;background:#cfd7dc;"></div>
<div style="position:absolute;left:21px;top:1206px;width:924px;height:32px;background:#ffffff;"></div>
<div style="position:absolute;left:56px;top:1206px;width:1px;height:32px;background:#e9edf0;"></div>
<div style="position:absolute;left:680px;top:1206px;width:1px;height:32px;background:#e9edf0;"></div>
<div style="position:absolute;left:765px;top:1206px;width:1px;height:32px;background:#e9edf0;"></div>
<div style="position:absolute;left:879px;top:1206px;width:1px;height:32px;background:#e9edf0;"></div>
<div style="position:absolute;left:29px;top:1214.0px;width:19px;height:16px;border-radius:4px;background:#2b66f2;color:#fff;font-weight:bold;font-size:12px;line-height:16px;text-align:center;"></div>
<div style="position:absolute;left:67px;top:1212.5px;height:20px;line-height:20px;white-space:nowrap;color:#263a42;font-weight:bold;font-size:12px;">Top</div>
<div style="position:absolute;left:556px;top:1212.5px;width:200px;height:20px;line-height:20px;text-align:right;white-space:nowrap;color:#263a42;font-weight:bold;font-size:12px;">803.94 KiB</div>
<div style="position:absolute;left:670px;top:1212.5px;width:200px;height:20px;line-height:20px;text-align:right;white-space:nowrap;color:#263a42;font-weight:bold;font-size:12px;">6.41 K</div>
<div style="position:absolute;left:733.5px;top:1212.5px;width:200px;height:20px;line-height:20px;text-align:right;white-space:nowrap;color:#263a42;font-weight:bold;font-size:12px;">6.41 K</div>
<div style="position:absolute;left:21px;top:1238px;width:35px;height:1px;background:#d8dfe3;"></div>
<div style="position:absolute;left:57px;top:1238px;width:623px;height:1px;background:#d8dfe3;"></div>
<div style="position:absolute;left:681px;top:1238px;width:84px;height:1px;background:#d8dfe3;"></div>
<div style="position:absolute;left:766px;top:1238px;width:113px;height:1px;background:#d8dfe3;"></div>
<div style="position:absolute;left:880px;top:1238px;width:65px;height:1px;background:#d8dfe3;"></div>
<div style="position:absolute;left:21px;top:1239px;width:924px;height:32px;background:#f2f4f6;"></div>
<div style="position:absolute;left:56px;top:1239px;width:1px;height:32px;background:#e9edf0;"></div>
<div style="position:absolute;left:680px;top:1239px;width:1px;height:32px;background:#e9edf0;"></div>
<div style="position:absolute;left:765px;top:1239px;width:1px;height:32px;background:#e9edf0;"></div>
<div style="position:absolute;left:879px;top:1239px;width:1px;height:32px;background:#e9edf0;"></div>
<div style="position:absolute;left:29px;top:1247.0px;width:19px;height:16px;border-radius:4px;background:#f4430b;color:#fff;font-weight:bold;font-size:12px;line-height:16px;text-align:center;"></div>
<div style="position:absolute;left:67px;top:1245.5px;height:20px;line-height:20px;white-space:nowrap;color:#263a42;font-weight:bold;font-size:12px;">Other</div>
<div style="position:absolute;left:556px;top:1245.5px;width:200px;height:20px;line-height:20px;text-align:right;white-space:nowrap;color:#263a42;font-weight:bold;font-size:12px;">58.00 KiB</div>
<div style="position:absolute;left:670px;top:1245.5px;width:200px;height:20px;line-height:20px;text-align:right;white-space:nowrap;color:#263a42;font-weight:bold;font-size:12px;">527</div>
<div style="position:absolute;left:733.5px;top:1245.5px;width:200px;height:20px;line-height:20px;text-align:right;white-space:nowrap;color:#263a42;font-weight:bold;font-size:12px;">527</div>
<div style="position:absolute;left:21px;top:1271px;width:35px;height:1px;background:#d8dfe3;"></div>
<div style="position:absolute;left:57px;top:1271px;width:623px;height:1px;background:#d8dfe3;"></div>
<div style="position:absolute;left:681px;top:1271px;width:84px;height:1px;background:#d8dfe3;"></div>
<div style="position:absolute;left:766px;top:1271px;width:113px;height:1px;background:#d8dfe3;"></div>
<div style="position:absolute;left:880px;top:1271px;width:65px;height:1px;background:#d8dfe3;"></div>
<div style="position:absolute;left:21px;top:1272px;width:924px;height:32px;background:#ffffff;"></div>
<div style="position:absolute;left:56px;top:1272px;width:1px;height:32px;background:#e9edf0;"></div>
<div style="position:absolute;left:680px;top:1272px;width:1px;height:32px;background:#e9edf0;"></div>
<div style="position:absolute;left:765px;top:1272px;width:1px;height:32px;background:#e9edf0;"></div>
<div style="position:absolute;left:879px;top:1272px;width:1px;height:32px;background:#e9edf0;"></div>
<div style="position:absolute;left:29px;top:1280.0px;width:19px;height:16px;border-radius:4px;background:#ffa01a;color:#fff;font-weight:bold;font-size:12px;line-height:16px;text-align:center;"></div>
<div style="position:absolute;left:67px;top:1278.5px;height:20px;line-height:20px;white-space:nowrap;color:#263a42;font-weight:bold;font-size:12px;">All traffic</div>
<div style="position:absolute;left:556px;top:1278.5px;width:200px;height:20px;line-height:20px;text-align:right;white-space:nowrap;color:#263a42;font-weight:bold;font-size:12px;">861.94 KiB</div>
<div style="position:absolute;left:670px;top:1278.5px;width:200px;height:20px;line-height:20px;text-align:right;white-space:nowrap;color:#263a42;font-weight:bold;font-size:12px;">6.93 K</div>
<div style="position:absolute;left:733.5px;top:1278.5px;width:200px;height:20px;line-height:20px;text-align:right;white-space:nowrap;color:#263a42;font-weight:bold;font-size:12px;">6.93 K</div>
<div style="position:absolute;left:456px;top:852.2px;width:300px;height:20px;line-height:20px;text-align:right;white-space:nowrap;color:#7f9099;font-weight:bold;font-size:12.5px;transform:scaleX(0.895);transform-origin:100% 50%;">Bytes</div>
<div style="position:absolute;left:570px;top:852.2px;width:300px;height:20px;line-height:20px;text-align:right;white-space:nowrap;color:#7f9099;font-weight:bold;font-size:12.5px;transform:scaleX(0.895);transform-origin:100% 50%;">Input packets</div>
<div style="position:absolute;left:633.5px;top:852.2px;width:300px;height:20px;line-height:20px;text-align:right;white-space:nowrap;color:#7f9099;font-weight:bold;font-size:12.5px;transform:scaleX(0.895);transform-origin:100% 50%;">Flows</div>
<div style="position:absolute;left:21px;top:1299px;width:934px;height:1px;background:#d3dbdf;"></div>
<div style="position:absolute;left:21px;top:1300px;width:934px;height:8px;background:#ffffff;"></div>
<div style="position:absolute;left:31px;top:1301.0px;height:20px;line-height:20px;white-space:nowrap;color:#34494f;font-size:11px;">2021-08-02 16:23 - 2021-08-03 16:23</div>
<div style="position:absolute;left:948px;top:693px;width:4px;height:595px;background:#b9c3ca;border-radius:2px;"></div>
<div style="position:absolute;left:966px;top:648px;width:936px;height:700px;background:#ffffff;border:1px solid #d3dbdf;border-radius:4px 4px 0 0;border-bottom:none;"></div>
<div style="position:absolute;left:967px;top:649px;width:934px;height:39px;background:#f5f7f9;border-radius:3px 3px 0 0;"></div>
<div style="position:absolute;left:967px;top:688px;width:934px;height:1px;background:#d3dbdf;"></div>
<div style="position:absolute;left:979.30px;top:652.90px;height:30px;line-height:30px;white-space:nowrap;color:#2a3642;font-weight:bold;font-size:13.4px;transform:scaleX(0.9631);transform-origin:0 50%;">DNS Devices Getting Errors</div>
<div style="position:absolute;left:1547px;top:658.5px;width:300px;height:20px;line-height:20px;text-align:right;white-space:nowrap;color:#7f929c;font-weight:bold;font-size:13.25px;">Last 24 hours (generic time span)</div>
<svg style="position:absolute;left:1853px;top:666.0px" width="10" height="6" viewBox="0 0 10 6"><polygon points="0,0 9.5,0 4.75,5.5" fill="#7f929c"/></svg>
<svg style="position:absolute;left:1875.5px;top:661.5px" width="14" height="14" viewBox="0 0 14 14"><rect x="5.04" y="0" width="3.92" height="7.00" fill="#7f929c" transform="rotate(0 7.0 7.0)"/><rect x="5.04" y="0" width="3.92" height="7.00" fill="#7f929c" transform="rotate(60 7.0 7.0)"/><rect x="5.04" y="0" width="3.92" height="7.00" fill="#7f929c" transform="rotate(120 7.0 7.0)"/><rect x="5.04" y="0" width="3.92" height="7.00" fill="#7f929c" transform="rotate(180 7.0 7.0)"/><rect x="5.04" y="0" width="3.92" height="7.00" fill="#7f929c" transform="rotate(240 7.0 7.0)"/><rect x="5.04" y="0" width="3.92" height="7.00" fill="#7f929c" transform="rotate(300 7.0 7.0)"/><circle cx="7.0" cy="7.0" r="5.39" fill="#7f929c"/><circle cx="7.0" cy="7.0" r="1.89" fill="#f5f7f9"/></svg>
<svg style="position:absolute;left:1293.8px;top:696.7px" width="132" height="132" viewBox="1293.8 696.7 132 132"><defs><linearGradient id="g1359_0" x1="0" y1="0" x2="1" y2="1"><stop offset="0" stop-color="#0aa3ff"/><stop offset="1" stop-color="#3a7cf6"/></linearGradient><linearGradient id="g1359_1" x1="0" y1="0" x2="1" y2="1"><stop offset="0" stop-color="#10a39a"/><stop offset="1" stop-color="#17bfc8"/></linearGradient><linearGradient id="g1359_2" x1="0" y1="0" x2="1" y2="1"><stop offset="0" stop-color="#e6508c"/><stop offset="1" stop-color="#ef7090"/></linearGradient><linearGradient id="g1359_3" x1="0" y1="0" x2="1" y2="1"><stop offset="0" stop-color="#cf8f2c"/><stop offset="1" stop-color="#e0b84e"/></linearGradient><linearGradient id="g1359_4" x1="0" y1="0" x2="1" y2="1"><stop offset="0" stop-color="#c2501a"/><stop offset="1" stop-color="#e07c20"/></linearGradient><linearGradient id="g1359_5" x1="0" y1="0" x2="1" y2="1"><stop offset="0" stop-color="#8a2a8c"/><stop offset="1" stop-color="#b23a9c"/></linearGradient><linearGradient id="g1359_6" x1="0" y1="0" x2="1" y2="1"><stop offset="0" stop-color="#086a58"/><stop offset="1" stop-color="#168c7c"/></linearGradient><linearGradient id="g1359_7" x1="0" y1="0" x2="1" y2="1"><stop offset="0" stop-color="#0a48a8"/><stop offset="1" stop-color="#1c62d4"/></linearGradient><linearGradient id="g1359_8" x1="0" y1="0" x2="1" y2="1"><stop offset="0" stop-color="#3a0080"/><stop offset="1" stop-color="#5c12a4"/></linearGradient><linearGradient id="g1359_9" x1="0" y1="0" x2="1" y2="1"><stop offset="0" stop-color="#7a451a"/><stop offset="1" stop-color="#9c6228"/></linearGradient></defs><path d="M1359.80,698.70 A64,64 0 0 1 1372.30,825.47 L1366.05,794.08 A32,32 0 0 0 1359.80,730.70 Z" fill="url(#g1359_0)" stroke="#ffffff" stroke-width="1.8" stroke-linejoin="miter"/><path d="M1372.30,825.47 A64,64 0 0 1 1319.09,812.09 L1339.45,787.39 A32,32 0 0 0 1366.05,794.08 Z" fill="url(#g1359_1)" stroke="#ffffff" stroke-width="1.8" stroke-linejoin="miter"/><path d="M1319.09,812.09 A64,64 0 0 1 1295.80,763.24 L1327.80,762.97 A32,32 0 0 0 1339.45,787.39 Z" fill="url(#g1359_2)" stroke="#ffffff" stroke-width="1.8" stroke-linejoin="miter"/><path d="M1295.80,763.24 A64,64 0 0 1 1302.64,733.90 L1331.22,748.30 A32,32 0 0 0 1327.80,762.97 Z" fill="url(#g1359_3)" stroke="#ffffff" stroke-width="1.8" stroke-linejoin="miter"/><path d="M1302.64,733.90 A64,64 0 0 1 1313.67,718.34 L1336.74,740.52 A32,32 0 0 0 1331.22,748.30 Z" fill="url(#g1359_4)" stroke="#ffffff" stroke-width="1.8" stroke-linejoin="miter"/><path d="M1313.67,718.34 A64,64 0 0 1 1325.25,708.83 L1342.53,735.76 A32,32 0 0 0 1336.74,740.52 Z" fill="url(#g1359_5)" stroke="#ffffff" stroke-width="1.8" stroke-linejoin="miter"/><path d="M1325.25,708.83 A64,64 0 0 1 1334.04,704.11 L1346.92,733.41 A32,32 0 0 0 1342.53,735.76 Z" fill="url(#g1359_6)" stroke="#ffffff" stroke-width="1.8" stroke-linejoin="miter"/><path d="M1334.04,704.11 A64,64 0 0 1 1343.39,700.84 L1351.59,731.77 A32,32 0 0 0 1346.92,733.41 Z" fill="url(#g1359_7)" stroke="#ffffff" stroke-width="1.8" stroke-linejoin="miter"/><path d="M1343.39,700.84 A64,64 0 0 1 1352.38,699.13 L1356.09,730.92 A32,32 0 0 0 1351.59,731.77 Z" fill="url(#g1359_8)" stroke="#ffffff" stroke-width="1.8" stroke-linejoin="miter"/><path d="M1352.38,699.13 A64,64 0 0 1 1359.80,698.70 L1359.80,730.70 A32,32 0 0 0 1356.09,730.92 Z" fill="url(#g1359_9)" stroke="#ffffff" stroke-width="1.8" stroke-linejoin="miter"/></svg>
<svg style="position:absolute;left:1441.8px;top:696.7px" width="132" height="132" viewBox="1441.8 696.7 132 132"><defs><linearGradient id="g1507_0" x1="0" y1="0" x2="1" y2="1"><stop offset="0" stop-color="#f97c0a"/><stop offset="1" stop-color="#ffbf2a"/></linearGradient><linearGradient id="g1507_1" x1="0" y1="0" x2="1" y2="1"><stop offset="0" stop-color="#1a6ef0"/><stop offset="1" stop-color="#3b55f0"/></linearGradient><linearGradient id="g1507_2" x1="0" y1="0" x2="1" y2="1"><stop offset="0" stop-color="#dd2a00"/><stop offset="1" stop-color="#f5561a"/></linearGradient></defs><path d="M1507.80,698.70 A64,64 0 0 1 1507.94,826.70 L1507.87,794.70 A32,32 0 0 0 1507.80,730.70 Z" fill="url(#g1507_0)" stroke="#ffffff" stroke-width="1.8" stroke-linejoin="miter"/><path d="M1507.94,826.70 A64,64 0 0 1 1465.80,714.41 L1486.80,738.55 A32,32 0 0 0 1507.87,794.70 Z" fill="url(#g1507_1)" stroke="#ffffff" stroke-width="1.8" stroke-linejoin="miter"/><path d="M1465.80,714.41 A64,64 0 0 1 1507.80,698.70 L1507.80,730.70 A32,32 0 0 0 1486.80,738.55 Z" fill="url(#g1507_2)" stroke="#ffffff" stroke-width="1.8" stroke-linejoin="miter"/></svg>
<div style="position:absolute;left:967px;top:843px;width:934px;height:1px;background:#d8dfe3;"></div>
<div style="position:absolute;left:967px;top:848px;width:934px;height:24px;background:#f5f7f9;"></div>
<div style="position:absolute;left:1012.5px;top:850.2px;height:20px;line-height:20px;white-space:nowrap;color:#7f9099;font-weight:bold;font-size:12.5px;transform:scaleX(0.895);transform-origin:0 50%;">Destination IP address</div>
<div style="position:absolute;left:967px;top:872px;width:35px;height:1px;background:#d8dfe3;"></div>
<div style="position:absolute;left:1003px;top:872px;width:633px;height:1px;background:#d8dfe3;"></div>
<div style="position:absolute;left:1637px;top:872px;width:84px;height:1px;background:#d8dfe3;"></div>
<div style="position:absolute;left:1722px;top:872px;width:113px;height:1px;background:#d8dfe3;"></div>
<div style="position:absolute;left:1836px;top:872px;width:65px;height:1px;background:#d8dfe3;"></div>
<div style="position:absolute;left:967px;top:873px;width:934px;height:32px;background:#ffffff;"></div>
<div style="position:absolute;left:1002px;top:873px;width:1px;height:32px;background:#e9edf0;"></div>
<div style="position:absolute;left:1636px;top:873px;width:1px;height:32px;background:#e9edf0;"></div>
<div style="position:absolute;left:1721px;top:873px;width:1px;height:32px;background:#e9edf0;"></div>
<div style="position:absolute;left:1835px;top:873px;width:1px;height:32px;background:#e9edf0;"></div>
<div style="position:absolute;left:975px;top:881.0px;width:19px;height:16px;border-radius:4px;background:#2b7ff5;color:#fff;font-weight:bold;font-size:12px;line-height:16px;text-align:center;">1</div>
<svg style="position:absolute;left:1012.0px;top:883px" width="18" height="12" viewBox="0 0 18 12"><rect x="0.9" y="1" width="11.2" height="7" fill="none" stroke="#1b1b1b" stroke-width="1.8"/><rect x="4.5" y="9.3" width="4" height="1.6" fill="#1b1b1b"/><rect x="13.8" y="3" width="3.2" height="7.8" fill="none" stroke="#1b1b1b" stroke-width="1.5"/></svg>
<div style="position:absolute;left:1036.5px;top:879.5px;height:20px;line-height:20px;white-space:nowrap;color:#34494f;font-weight:normal;font-size:12.3px;">192.168.2.4</div>
<div style="position:absolute;left:1512px;top:879.5px;width:200px;height:20px;line-height:20px;text-align:right;white-space:nowrap;color:#34494f;font-weight:normal;font-size:12.3px;">322.50 KiB</div>
<div style="position:absolute;left:1626px;top:879.5px;width:200px;height:20px;line-height:20px;text-align:right;white-space:nowrap;color:#34494f;font-weight:normal;font-size:12.3px;">2.51 K</div>
<div style="position:absolute;left:1689.5px;top:879.5px;width:200px;height:20px;line-height:20px;text-align:right;white-space:nowrap;color:#34494f;font-weight:normal;font-size:12.3px;">2.51 K</div>
<div style="position:absolute;left:967px;top:905px;width:35px;height:1px;background:#d8dfe3;"></div>
<div style="position:absolute;left:1003px;top:905px;width:633px;height:1px;background:#d8dfe3;"></div>
<div style="position:absolute;left:1637px;top:905px;width:84px;height:1px;background:#d8dfe3;"></div>
<div style="position:absolute;left:1722px;top:905px;width:113px;height:1px;background:#d8dfe3;"></div>
<div style="position:absolute;left:1836px;top:905px;width:65px;height:1px;background:#d8dfe3;"></div>
<div style="position:absolute;left:967px;top:906px;width:934px;height:32px;background:#f2f4f6;"></div>
<div style="position:absolute;left:1002px;top:906px;width:1px;height:32px;background:#e9edf0;"></div>
<div style="position:absolute;left:1636px;top:906px;width:1px;height:32px;background:#e9edf0;"></div>
<div style="position:absolute;left:1721px;top:906px;width:1px;height:32px;background:#e9edf0;"></div>
<div style="position:absolute;left:1835px;top:906px;width:1px;height:32px;background:#e9edf0;"></div>
<div style="position:absolute;left:975px;top:914.0px;width:19px;height:16px;border-radius:4px;background:#16b0a8;color:#fff;font-weight:bold;font-size:12px;line-height:16px;text-align:center;">2</div>
<svg style="position:absolute;left:1012.0px;top:916px" width="18" height="12" viewBox="0 0 18 12"><rect x="0.9" y="1" width="11.2" height="7" fill="none" stroke="#1b1b1b" stroke-width="1.8"/><rect x="4.5" y="9.3" width="4" height="1.6" fill="#1b1b1b"/><rect x="13.8" y="3" width="3.2" height="7.8" fill="none" stroke="#1b1b1b" stroke-width="1.5"/></svg>
<div style="position:absolute;left:1036.5px;top:912.5px;height:20px;line-height:20px;white-space:nowrap;color:#34494f;font-weight:normal;font-size:12.3px;">10.59.0.106</div>
<div style="position:absolute;left:1512px;top:912.5px;width:200px;height:20px;line-height:20px;text-align:right;white-space:nowrap;color:#34494f;font-weight:normal;font-size:12.3px;">91.43 KiB</div>
<div style="position:absolute;left:1626px;top:912.5px;width:200px;height:20px;line-height:20px;text-align:right;white-space:nowrap;color:#34494f;font-weight:normal;font-size:12.3px;">755</div>
<div style="position:absolute;left:1689.5px;top:912.5px;width:200px;height:20px;line-height:20px;text-align:right;white-space:nowrap;color:#34494f;font-weight:normal;font-size:12.3px;">755</div>
<div style="position:absolute;left:967px;top:938px;width:35px;height:1px;background:#d8dfe3;"></div>
<div style="position:absolute;left:1003px;top:938px;width:633px;height:1px;background:#d8dfe3;"></div>
<div style="position:absolute;left:1637px;top:938px;width:84px;height:1px;background:#d8dfe3;"></div>
<div style="position:absolute;left:1722px;top:938px;width:113px;height:1px;background:#d8dfe3;"></div>
<div style="position:absolute;left:1836px;top:938px;width:65px;height:1px;background:#d8dfe3;"></div>
<div style="position:absolute;left:967px;top:939px;width:934px;height:32px;background:#ffffff;"></div>
<div style="position:absolute;left:1002px;top:939px;width:1px;height:32px;background:#e9edf0;"></div>
<div style="position:absolute;left:1636px;top:939px;width:1px;height:32px;background:#e9edf0;"></div>
<div style="position:absolute;left:1721px;top:939px;width:1px;height:32px;background:#e9edf0;"></div>
<div style="position:absolute;left:1835px;top:939px;width:1px;height:32px;background:#e9edf0;"></div>
<div style="position:absolute;left:975px;top:947.0px;width:19px;height:16px;border-radius:4px;background:#ea6089;color:#fff;font-weight:bold;font-size:12px;line-height:16px;text-align:center;">3</div>
<svg style="position:absolute;left:1012.0px;top:949px" width="18" height="12" viewBox="0 0 18 12"><rect x="0.9" y="1" width="11.2" height="7" fill="none" stroke="#1b1b1b" stroke-width="1.8"/><rect x="4.5" y="9.3" width="4" height="1.6" fill="#1b1b1b"/><rect x="13.8" y="3" width="3.2" height="7.8" fill="none" stroke="#1b1b1b" stroke-width="1.5"/></svg>
<div style="position:absolute;left:1036.5px;top:945.5px;height:20px;line-height:20px;white-space:nowrap;color:#34494f;font-weight:normal;font-size:12.3px;">172.17.107.32</div>
<div style="position:absolute;left:1512px;top:945.5px;width:200px;height:20px;line-height:20px;text-align:right;white-space:nowrap;color:#34494f;font-weight:normal;font-size:12.3px;">84.02 KiB</div>
<div style="position:absolute;left:1626px;top:945.5px;width:200px;height:20px;line-height:20px;text-align:right;white-space:nowrap;color:#34494f;font-weight:normal;font-size:12.3px;">744</div>
<div style="position:absolute;left:1689.5px;top:945.5px;width:200px;height:20px;line-height:20px;text-align:right;white-space:nowrap;color:#34494f;font-weight:normal;font-size:12.3px;">744</div>
<div style="position:absolute;left:967px;top:971px;width:35px;height:1px;background:#d8dfe3;"></div>
<div style="position:absolute;left:1003px;top:971px;width:633px;height:1px;background:#d8dfe3;"></div>
<div style="position:absolute;left:1637px;top:971px;width:84px;height:1px;background:#d8dfe3;"></div>
<div style="position:absolute;left:1722px;top:971px;width:113px;height:1px;background:#d8dfe3;"></div>
<div style="position:absolute;left:1836px;top:971px;width:65px;height:1px;background:#d8dfe3;"></div>
<div style="position:absolute;left:967px;top:972px;width:934px;height:32px;background:#f2f4f6;"></div>
<div style="position:absolute;left:1002px;top:972px;width:1px;height:32px;background:#e9edf0;"></div>
<div style="position:absolute;left:1636px;top:972px;width:1px;height:32px;background:#e9edf0;"></div>
<div style="position:absolute;left:1721px;top:972px;width:1px;height:32px;background:#e9edf0;"></div>
<div style="position:absolute;left:1835px;top:972px;width:1px;height:32px;background:#e9edf0;"></div>
<div style="position:absolute;left:975px;top:980.0px;width:19px;height:16px;border-radius:4px;background:#d9a93c;color:#fff;font-weight:bold;font-size:12px;line-height:16px;text-align:center;">4</div>
<svg style="position:absolute;left:1012.0px;top:982px" width="18" height="12" viewBox="0 0 18 12"><rect x="0.9" y="1" width="11.2" height="7" fill="none" stroke="#1b1b1b" stroke-width="1.8"/><rect x="4.5" y="9.3" width="4" height="1.6" fill="#1b1b1b"/><rect x="13.8" y="3" width="3.2" height="7.8" fill="none" stroke="#1b1b1b" stroke-width="1.5"/></svg>
<div style="position:absolute;left:1036.5px;top:978.5px;height:20px;line-height:20px;white-space:nowrap;color:#34494f;font-weight:normal;font-size:12.3px;">192.168.0.95</div>
<div style="position:absolute;left:1512px;top:978.5px;width:200px;height:20px;line-height:20px;text-align:right;white-space:nowrap;color:#34494f;font-weight:normal;font-size:12.3px;">51.60 KiB</div>
<div style="position:absolute;left:1626px;top:978.5px;width:200px;height:20px;line-height:20px;text-align:right;white-space:nowrap;color:#34494f;font-weight:normal;font-size:12.3px;">405</div>
<div style="position:absolute;left:1689.5px;top:978.5px;width:200px;height:20px;line-height:20px;text-align:right;white-space:nowrap;color:#34494f;font-weight:normal;font-size:12.3px;">405</div>
<div style="position:absolute;left:967px;top:1004px;width:35px;height:1px;background:#d8dfe3;"></div>
<div style="position:absolute;left:1003px;top:1004px;width:633px;height:1px;background:#d8dfe3;"></div>
<div style="position:absolute;left:1637px;top:1004px;width:84px;height:1px;background:#d8dfe3;"></div>
<div style="position:absolute;left:1722px;top:1004px;width:113px;height:1px;background:#d8dfe3;"></div>
<div style="position:absolute;left:1836px;top:1004px;width:65px;height:1px;background:#d8dfe3;"></div>
<div style="position:absolute;left:967px;top:1005px;width:934px;height:32px;background:#ffffff;"></div>
<div style="position:absolute;left:1002px;top:1005px;width:1px;height:32px;background:#e9edf0;"></div>
<div style="position:absolute;left:1636px;top:1005px;width:1px;height:32px;background:#e9edf0;"></div>
<div style="position:absolute;left:1721px;top:1005px;width:1px;height:32px;background:#e9edf0;"></div>
<div style="position:absolute;left:1835px;top:1005px;width:1px;height:32px;background:#e9edf0;"></div>
<div style="position:absolute;left:975px;top:1013.0px;width:19px;height:16px;border-radius:4px;background:#d86a18;color:#fff;font-weight:bold;font-size:12px;line-height:16px;text-align:center;">5</div>
<svg style="position:absolute;left:1012.0px;top:1015px" width="18" height="12" viewBox="0 0 18 12"><rect x="0.9" y="1" width="11.2" height="7" fill="none" stroke="#1b1b1b" stroke-width="1.8"/><rect x="4.5" y="9.3" width="4" height="1.6" fill="#1b1b1b"/><rect x="13.8" y="3" width="3.2" height="7.8" fill="none" stroke="#1b1b1b" stroke-width="1.5"/></svg>
<div style="position:absolute;left:1036.5px;top:1011.5px;height:20px;line-height:20px;white-space:nowrap;color:#34494f;font-weight:normal;font-size:12.3px;">192.168.0.29</div>
<div style="position:absolute;left:1512px;top:1011.5px;width:200px;height:20px;line-height:20px;text-align:right;white-space:nowrap;color:#34494f;font-weight:normal;font-size:12.3px;">31.04 KiB</div>
<div style="position:absolute;left:1626px;top:1011.5px;width:200px;height:20px;line-height:20px;text-align:right;white-space:nowrap;color:#34494f;font-weight:normal;font-size:12.3px;">255</div>
<div style="position:absolute;left:1689.5px;top:1011.5px;width:200px;height:20px;line-height:20px;text-align:right;white-space:nowrap;color:#34494f;font-weight:normal;font-size:12.3px;">255</div>
<div style="position:absolute;left:967px;top:1037px;width:35px;height:1px;background:#d8dfe3;"></div>
<div style="position:absolute;left:1003px;top:1037px;width:633px;height:1px;background:#d8dfe3;"></div>
<div style="position:absolute;left:1637px;top:1037px;width:84px;height:1px;background:#d8dfe3;"></div>
<div style="position:absolute;left:1722px;top:1037px;width:113px;height:1px;background:#d8dfe3;"></div>
<div style="position:absolute;left:1836px;top:1037px;width:65px;height:1px;background:#d8dfe3;"></div>
<div style="position:absolute;left:967px;top:1038px;width:934px;height:32px;background:#f2f4f6;"></div>
<div style="position:absolute;left:1002px;top:1038px;width:1px;height:32px;background:#e9edf0;"></div>
<div style="position:absolute;left:1636px;top:1038px;width:1px;height:32px;background:#e9edf0;"></div>
<div style="position:absolute;left:1721px;top:1038px;width:1px;height:32px;background:#e9edf0;"></div>
<div style="position:absolute;left:1835px;top:1038px;width:1px;height:32px;background:#e9edf0;"></div>
<div style="position:absolute;left:975px;top:1046.0px;width:19px;height:16px;border-radius:4px;background:#a8309a;color:#fff;font-weight:bold;font-size:12px;line-height:16px;text-align:center;">6</div>
<svg style="position:absolute;left:1012.0px;top:1048px" width="18" height="12" viewBox="0 0 18 12"><rect x="0.9" y="1" width="11.2" height="7" fill="none" stroke="#1b1b1b" stroke-width="1.8"/><rect x="4.5" y="9.3" width="4" height="1.6" fill="#1b1b1b"/><rect x="13.8" y="3" width="3.2" height="7.8" fill="none" stroke="#1b1b1b" stroke-width="1.5"/></svg>
<div style="position:absolute;left:1036.5px;top:1044.5px;height:20px;line-height:20px;white-space:nowrap;color:#34494f;font-weight:normal;font-size:12.3px;">192.168.0.32</div>
<div style="position:absolute;left:1512px;top:1044.5px;width:200px;height:20px;line-height:20px;text-align:right;white-space:nowrap;color:#34494f;font-weight:normal;font-size:12.3px;">24.32 KiB</div>
<div style="position:absolute;left:1626px;top:1044.5px;width:200px;height:20px;line-height:20px;text-align:right;white-space:nowrap;color:#34494f;font-weight:normal;font-size:12.3px;">200</div>
<div style="position:absolute;left:1689.5px;top:1044.5px;width:200px;height:20px;line-height:20px;text-align:right;white-space:nowrap;color:#34494f;font-weight:normal;font-size:12.3px;">200</div>
<div style="position:absolute;left:967px;top:1070px;width:35px;height:1px;background:#d8dfe3;"></div>
<div style="position:absolute;left:1003px;top:1070px;width:633px;height:1px;background:#d8dfe3;"></div>
<div style="position:absolute;left:1637px;top:1070px;width:84px;height:1px;background:#d8dfe3;"></div>
<div style="position:absolute;left:1722px;top:1070px;width:113px;height:1px;background:#d8dfe3;"></div>
<div style="position:absolute;left:1836px;top:1070px;width:65px;height:1px;background:#d8dfe3;"></div>
<div style="position:absolute;left:967px;top:1071px;width:934px;height:32px;background:#ffffff;"></div>
<div style="position:absolute;left:1002px;top:1071px;width:1px;height:32px;background:#e9edf0;"></div>
<div style="position:absolute;left:1636px;top:1071px;width:1px;height:32px;background:#e9edf0;"></div>
<div style="position:absolute;left:1721px;top:1071px;width:1px;height:32px;background:#e9edf0;"></div>
<div style="position:absolute;left:1835px;top:1071px;width:1px;height:32px;background:#e9edf0;"></div>
<div style="position:absolute;left:975px;top:1079.0px;width:19px;height:16px;border-radius:4px;background:#128a78;color:#fff;font-weight:bold;font-size:12px;line-height:16px;text-align:center;">7</div>
<svg style="position:absolute;left:1012.0px;top:1081px" width="18" height="12" viewBox="0 0 18 12"><rect x="0.9" y="1" width="11.2" height="7" fill="none" stroke="#1b1b1b" stroke-width="1.8"/><rect x="4.5" y="9.3" width="4" height="1.6" fill="#1b1b1b"/><rect x="13.8" y="3" width="3.2" height="7.8" fill="none" stroke="#1b1b1b" stroke-width="1.5"/></svg>
<div style="position:absolute;left:1036.5px;top:1077.5px;height:20px;line-height:20px;white-space:nowrap;color:#34494f;font-weight:normal;font-size:12.3px;">192.168.0.52</div>
<div style="position:absolute;left:1512px;top:1077.5px;width:200px;height:20px;line-height:20px;text-align:right;white-space:nowrap;color:#34494f;font-weight:normal;font-size:12.3px;">15.96 KiB</div>
<div style="position:absolute;left:1626px;top:1077.5px;width:200px;height:20px;line-height:20px;text-align:right;white-space:nowrap;color:#34494f;font-weight:normal;font-size:12.3px;">133</div>
<div style="position:absolute;left:1689.5px;top:1077.5px;width:200px;height:20px;line-height:20px;text-align:right;white-space:nowrap;color:#34494f;font-weight:normal;font-size:12.3px;">133</div>
<div style="position:absolute;left:967px;top:1103px;width:35px;height:1px;background:#d8dfe3;"></div>
<div style="position:absolute;left:1003px;top:1103px;width:633px;height:1px;background:#d8dfe3;"></div>
<div style="position:absolute;left:1637px;top:1103px;width:84px;height:1px;background:#d8dfe3;"></div>
<div style="position:absolute;left:1722px;top:1103px;width:113px;height:1px;background:#d8dfe3;"></div>
<div style="position:absolute;left:1836px;top:1103px;width:65px;height:1px;background:#d8dfe3;"></div>
<div style="position:absolute;left:967px;top:1104px;width:934px;height:32px;background:#f2f4f6;"></div>
<div style="position:absolute;left:1002px;top:1104px;width:1px;height:32px;background:#e9edf0;"></div>
<div style="position:absolute;left:1636px;top:1104px;width:1px;height:32px;background:#e9edf0;"></div>
<div style="position:absolute;left:1721px;top:1104px;width:1px;height:32px;background:#e9edf0;"></div>
<div style="position:absolute;left:1835px;top:1104px;width:1px;height:32px;background:#e9edf0;"></div>
<div style="position:absolute;left:975px;top:1112.0px;width:19px;height:16px;border-radius:4px;background:#1450c0;color:#fff;font-weight:bold;font-size:12px;line-height:16px;text-align:center;">8</div>
<svg style="position:absolute;left:1012.0px;top:1114px" width="18" height="12" viewBox="0 0 18 12"><rect x="0.9" y="1" width="11.2" height="7" fill="none" stroke="#1b1b1b" stroke-width="1.8"/><rect x="4.5" y="9.3" width="4" height="1.6" fill="#1b1b1b"/><rect x="13.8" y="3" width="3.2" height="7.8" fill="none" stroke="#1b1b1b" stroke-width="1.5"/></svg>
<div style="position:absolute;left:1036.5px;top:1110.5px;height:20px;line-height:20px;white-space:nowrap;color:#34494f;font-weight:normal;font-size:12.3px;">192.168.0.103</div>
<div style="position:absolute;left:1512px;top:1110.5px;width:200px;height:20px;line-height:20px;text-align:right;white-space:nowrap;color:#34494f;font-weight:normal;font-size:12.3px;">16.27 KiB</div>
<div style="position:absolute;left:1626px;top:1110.5px;width:200px;height:20px;line-height:20px;text-align:right;white-space:nowrap;color:#34494f;font-weight:normal;font-size:12.3px;">132</div>
<div style="position:absolute;left:1689.5px;top:1110.5px;width:200px;height:20px;line-height:20px;text-align:right;white-space:nowrap;color:#34494f;font-weight:normal;font-size:12.3px;">132</div>
<div style="position:absolute;left:967px;top:1136px;width:35px;height:1px;background:#d8dfe3;"></div>
<div style="position:absolute;left:1003px;top:1136px;width:633px;height:1px;background:#d8dfe3;"></div>
<div style="position:absolute;left:1637px;top:1136px;width:84px;height:1px;background:#d8dfe3;"></div>
<div style="position:absolute;left:1722px;top:1136px;width:113px;height:1px;background:#d8dfe3;"></div>
<div style="position:absolute;left:1836px;top:1136px;width:65px;height:1px;background:#d8dfe3;"></div>
<div style="position:absolute;left:967px;top:1137px;width:934px;height:32px;background:#ffffff;"></div>
<div style="position:absolute;left:1002px;top:1137px;width:1px;height:32px;background:#e9edf0;"></div>
<div style="position:absolute;left:1636px;top:1137px;width:1px;height:32px;background:#e9edf0;"></div>
<div style="position:absolute;left:1721px;top:1137px;width:1px;height:32px;background:#e9edf0;"></div>
<div style="position:absolute;left:1835px;top:1137px;width:1px;height:32px;background:#e9edf0;"></div>
<div style="position:absolute;left:975px;top:1145.0px;width:19px;height:16px;border-radius:4px;background:#4a0a96;color:#fff;font-weight:bold;font-size:12px;line-height:16px;text-align:center;">9</div>
<svg style="position:absolute;left:1012.0px;top:1147px" width="18" height="12" viewBox="0 0 18 12"><rect x="0.9" y="1" width="11.2" height="7" fill="none" stroke="#1b1b1b" stroke-width="1.8"/><rect x="4.5" y="9.3" width="4" height="1.6" fill="#1b1b1b"/><rect x="13.8" y="3" width="3.2" height="7.8" fill="none" stroke="#1b1b1b" stroke-width="1.5"/></svg>
<div style="position:absolute;left:1036.5px;top:1143.5px;height:20px;line-height:20px;white-space:nowrap;color:#34494f;font-weight:normal;font-size:12.3px;">192.168.0.112</div>
<div style="position:absolute;left:1512px;top:1143.5px;width:200px;height:20px;line-height:20px;text-align:right;white-space:nowrap;color:#34494f;font-weight:normal;font-size:12.3px;">15.02 KiB</div>
<div style="position:absolute;left:1626px;top:1143.5px;width:200px;height:20px;line-height:20px;text-align:right;white-space:nowrap;color:#34494f;font-weight:normal;font-size:12.3px;">122</div>
<div style="position:absolute;left:1689.5px;top:1143.5px;width:200px;height:20px;line-height:20px;text-align:right;white-space:nowrap;color:#34494f;font-weight:normal;font-size:12.3px;">122</div>
<div style="position:absolute;left:967px;top:1169px;width:35px;height:1px;background:#d8dfe3;"></div>
<div style="position:absolute;left:1003px;top:1169px;width:633px;height:1px;background:#d8dfe3;"></div>
<div style="position:absolute;left:1637px;top:1169px;width:84px;height:1px;background:#d8dfe3;"></div>
<div style="position:absolute;left:1722px;top:1169px;width:113px;height:1px;background:#d8dfe3;"></div>
<div style="position:absolute;left:1836px;top:1169px;width:65px;height:1px;background:#d8dfe3;"></div>
<div style="position:absolute;left:967px;top:1170px;width:934px;height:32px;background:#f2f4f6;"></div>
<div style="position:absolute;left:1002px;top:1170px;width:1px;height:32px;background:#e9edf0;"></div>
<div style="position:absolute;left:1636px;top:1170px;width:1px;height:32px;background:#e9edf0;"></div>
<div style="position:absolute;left:1721px;top:1170px;width:1px;height:32px;background:#e9edf0;"></div>
<div style="position:absolute;left:1835px;top:1170px;width:1px;height:32px;background:#e9edf0;"></div>
<div style="position:absolute;left:975px;top:1178.0px;width:19px;height:16px;border-radius:4px;background:#8a5526;color:#fff;font-weight:bold;font-size:12px;line-height:16px;text-align:center;">10</div>
<svg style="position:absolute;left:1012.0px;top:1180px" width="18" height="12" viewBox="0 0 18 12"><rect x="0.9" y="1" width="11.2" height="7" fill="none" stroke="#1b1b1b" stroke-width="1.8"/><rect x="4.5" y="9.3" width="4" height="1.6" fill="#1b1b1b"/><rect x="13.8" y="3" width="3.2" height="7.8" fill="none" stroke="#1b1b1b" stroke-width="1.5"/></svg>
<div style="position:absolute;left:1036.5px;top:1176.5px;height:20px;line-height:20px;white-space:nowrap;color:#34494f;font-weight:normal;font-size:12.3px;">192.168.0.137</div>
<div style="position:absolute;left:1512px;top:1176.5px;width:200px;height:20px;line-height:20px;text-align:right;white-space:nowrap;color:#34494f;font-weight:normal;font-size:12.3px;">12.61 KiB</div>
<div style="position:absolute;left:1626px;top:1176.5px;width:200px;height:20px;line-height:20px;text-align:right;white-space:nowrap;color:#34494f;font-weight:normal;font-size:12.3px;">99</div>
<div style="position:absolute;left:1689.5px;top:1176.5px;width:200px;height:20px;line-height:20px;text-align:right;white-space:nowrap;color:#34494f;font-weight:normal;font-size:12.3px;">99</div>
<div style="position:absolute;left:967px;top:1202px;width:35px;height:2px;background:#cfd7dc;"></div>
<div style="position:absolute;left:1003px;top:1202px;width:633px;height:2px;background:#cfd7dc;"></div>
<div style="position:absolute;left:1637px;top:1202px;width:84px;height:2px;background:#cfd7dc;"></div>
<div style="position:absolute;left:1722px;top:1202px;width:113px;height:2px;background:#cfd7dc;"></div>
<div style="position:absolute;left:1836px;top:1202px;width:65px;height:2px;background:#cfd7dc;"></div>
<div style="position:absolute;left:967px;top:1204px;width:934px;height:32px;background:#ffffff;"></div>
<div style="position:absolute;left:1002px;top:1204px;width:1px;height:32px;background:#e9edf0;"></div>
<div style="position:absolute;left:1636px;top:1204px;width:1px;height:32px;background:#e9edf0;"></div>
<div style="position:absolute;left:1721px;top:1204px;width:1px;height:32px;background:#e9edf0;"></div>
<div style="position:absolute;left:1835px;top:1204px;width:1px;height:32px;background:#e9edf0;"></div>
<div style="position:absolute;left:975px;top:1212.0px;width:19px;height:16px;border-radius:4px;background:#2b66f2;color:#fff;font-weight:bold;font-size:12px;line-height:16px;text-align:center;"></div>
<div style="position:absolute;left:1012.5px;top:1210.5px;height:20px;line-height:20px;white-space:nowrap;color:#263a42;font-weight:bold;font-size:12px;">Top</div>
<div style="position:absolute;left:1512px;top:1210.5px;width:200px;height:20px;line-height:20px;text-align:right;white-space:nowrap;color:#263a42;font-weight:bold;font-size:12px;">664.78 KiB</div>
<div style="position:absolute;left:1626px;top:1210.5px;width:200px;height:20px;line-height:20px;text-align:right;white-space:nowrap;color:#263a42;font-weight:bold;font-size:12px;">5.36 K</div>
<div style="position:absolute;left:1689.5px;top:1210.5px;width:200px;height:20px;line-height:20px;text-align:right;white-space:nowrap;color:#263a42;font-weight:bold;font-size:12px;">5.36 K</div>
<div style="position:absolute;left:967px;top:1236px;width:35px;height:1px;background:#d8dfe3;"></div>
<div style="position:absolute;left:1003px;top:1236px;width:633px;height:1px;background:#d8dfe3;"></div>
<div style="position:absolute;left:1637px;top:1236px;width:84px;height:1px;background:#d8dfe3;"></div>
<div style="position:absolute;left:1722px;top:1236px;width:113px;height:1px;background:#d8dfe3;"></div>
<div style="position:absolute;left:1836px;top:1236px;width:65px;height:1px;background:#d8dfe3;"></div>
<div style="position:absolute;left:967px;top:1237px;width:934px;height:32px;background:#f2f4f6;"></div>
<div style="position:absolute;left:1002px;top:1237px;width:1px;height:32px;background:#e9edf0;"></div>
<div style="position:absolute;left:1636px;top:1237px;width:1px;height:32px;background:#e9edf0;"></div>
<div style="position:absolute;left:1721px;top:1237px;width:1px;height:32px;background:#e9edf0;"></div>
<div style="position:absolute;left:1835px;top:1237px;width:1px;height:32px;background:#e9edf0;"></div>
<div style="position:absolute;left:975px;top:1245.0px;width:19px;height:16px;border-radius:4px;background:#f4430b;color:#fff;font-weight:bold;font-size:12px;line-height:16px;text-align:center;"></div>
<div style="position:absolute;left:1012.5px;top:1243.5px;height:20px;line-height:20px;white-space:nowrap;color:#263a42;font-weight:bold;font-size:12px;">Other</div>
<div style="position:absolute;left:1512px;top:1243.5px;width:200px;height:20px;line-height:20px;text-align:right;white-space:nowrap;color:#263a42;font-weight:bold;font-size:12px;">197.16 KiB</div>
<div style="position:absolute;left:1626px;top:1243.5px;width:200px;height:20px;line-height:20px;text-align:right;white-space:nowrap;color:#263a42;font-weight:bold;font-size:12px;">1.58 K</div>
<div style="position:absolute;left:1689.5px;top:1243.5px;width:200px;height:20px;line-height:20px;text-align:right;white-space:nowrap;color:#263a42;font-weight:bold;font-size:12px;">1.58 K</div>
<div style="position:absolute;left:967px;top:1269px;width:35px;height:1px;background:#d8dfe3;"></div>
<div style="position:absolute;left:1003px;top:1269px;width:633px;height:1px;background:#d8dfe3;"></div>
<div style="position:absolute;left:1637px;top:1269px;width:84px;height:1px;background:#d8dfe3;"></div>
<div style="position:absolute;left:1722px;top:1269px;width:113px;height:1px;background:#d8dfe3;"></div>
<div style="position:absolute;left:1836px;top:1269px;width:65px;height:1px;background:#d8dfe3;"></div>
<div style="position:absolute;left:967px;top:1270px;width:934px;height:32px;background:#ffffff;"></div>
<div style="position:absolute;left:1002px;top:1270px;width:1px;height:32px;background:#e9edf0;"></div>
<div style="position:absolute;left:1636px;top:1270px;width:1px;height:32px;background:#e9edf0;"></div>
<div style="position:absolute;left:1721px;top:1270px;width:1px;height:32px;background:#e9edf0;"></div>
<div style="position:absolute;left:1835px;top:1270px;width:1px;height:32px;background:#e9edf0;"></div>
<div style="position:absolute;left:975px;top:1278.0px;width:19px;height:16px;border-radius:4px;background:#ffa01a;color:#fff;font-weight:bold;font-size:12px;line-height:16px;text-align:center;"></div>
<div style="position:absolute;left:1012.5px;top:1276.5px;height:20px;line-height:20px;white-space:nowrap;color:#263a42;font-weight:bold;font-size:12px;">All traffic</div>
<div style="position:absolute;left:1512px;top:1276.5px;width:200px;height:20px;line-height:20px;text-align:right;white-space:nowrap;color:#263a42;font-weight:bold;font-size:12px;">861.94 KiB</div>
<div style="position:absolute;left:1626px;top:1276.5px;width:200px;height:20px;line-height:20px;text-align:right;white-space:nowrap;color:#263a42;font-weight:bold;font-size:12px;">6.93 K</div>
<div style="position:absolute;left:1689.5px;top:1276.5px;width:200px;height:20px;line-height:20px;text-align:right;white-space:nowrap;color:#263a42;font-weight:bold;font-size:12px;">6.93 K</div>
<div style="position:absolute;left:1412px;top:850.2px;width:300px;height:20px;line-height:20px;text-align:right;white-space:nowrap;color:#7f9099;font-weight:bold;font-size:12.5px;transform:scaleX(0.895);transform-origin:100% 50%;">Bytes</div>
<div style="position:absolute;left:1526px;top:850.2px;width:300px;height:20px;line-height:20px;text-align:right;white-space:nowrap;color:#7f9099;font-weight:bold;font-size:12.5px;transform:scaleX(0.895);transform-origin:100% 50%;">Input packets</div>
<div style="position:absolute;left:1589.5px;top:850.2px;width:300px;height:20px;line-height:20px;text-align:right;white-space:nowrap;color:#7f9099;font-weight:bold;font-size:12.5px;transform:scaleX(0.895);transform-origin:100% 50%;">Flows</div>
<div style="position:absolute;left:967px;top:1302px;width:934px;height:6px;background:#f5f7f9;"></div>
</body></html>
